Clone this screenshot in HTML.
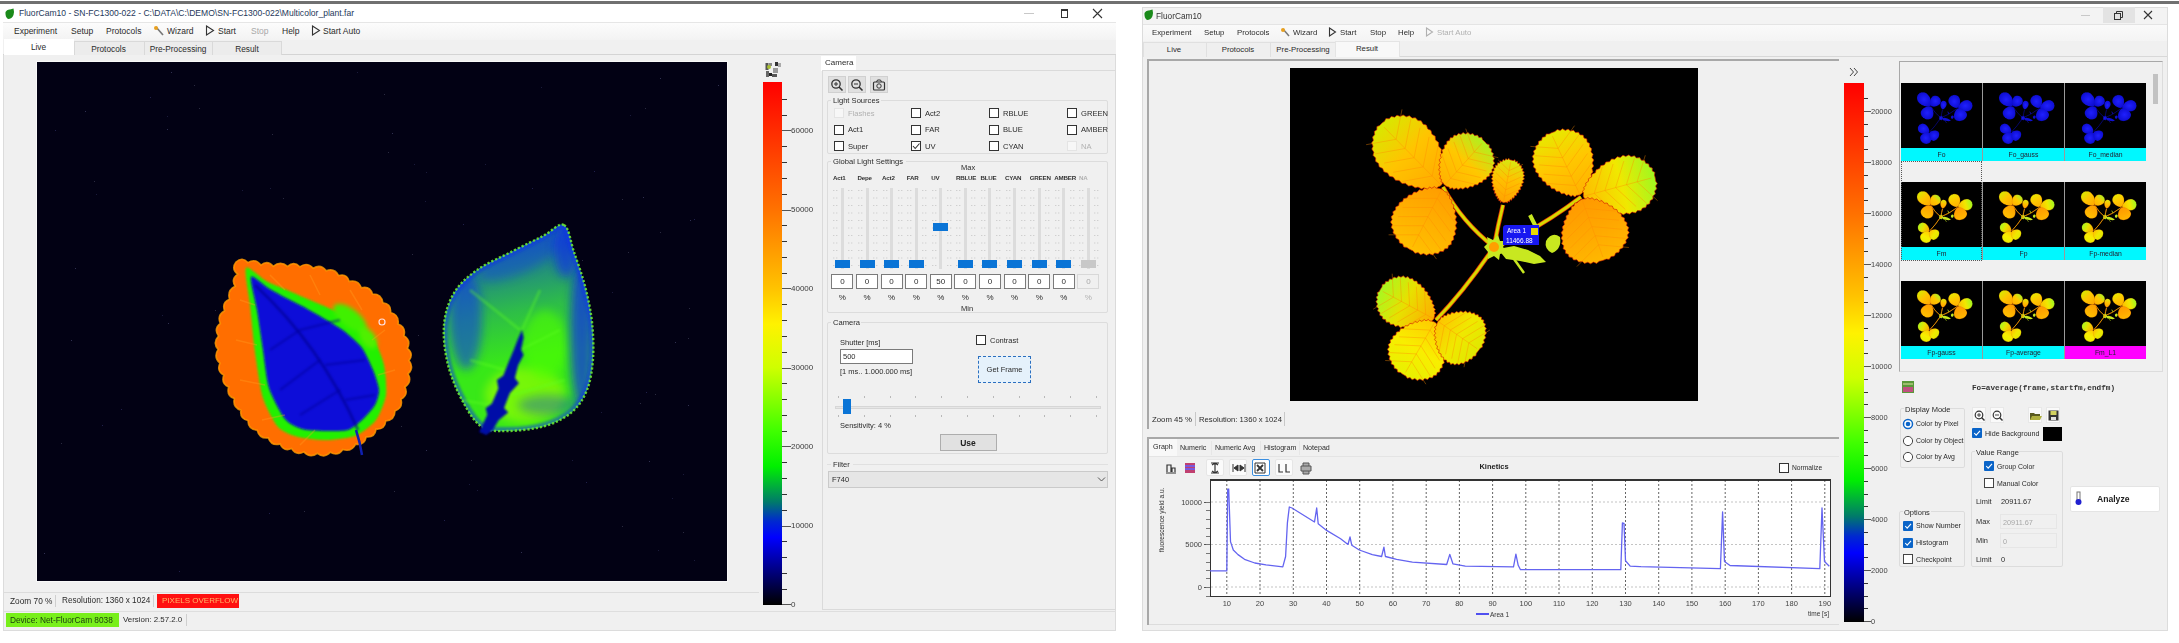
<!DOCTYPE html><html><head><meta charset="utf-8"><style>
html,body{margin:0;padding:0;}
body{width:2179px;height:643px;position:relative;overflow:hidden;background:#fff;font-family:"Liberation Sans",sans-serif;}
body div{position:absolute;box-sizing:border-box;}
.t{white-space:pre;}
svg{position:absolute;}
</style></head><body>
<div id="wrap" style="left:0;top:0;width:2179px;height:643px;filter:blur(0.4px)">
<div style="left:0px;top:1px;width:2179px;height:3px;background:#707070"></div>
<div style="left:0px;top:4px;width:1117px;height:627px;background:#fff"></div>
<div style="left:3px;top:22px;width:1113px;height:609px;background:#f0f0f0;border:1px solid #dcdcdc"></div>
<svg style="left:4px;top:8px" width="11" height="12" viewBox="0 0 11 12"><path d="M1.5 4 Q3 1 6 1.5 L9.5 0.5 Q10.5 4 9.5 7 Q8 11 4 11 Q1 9 1.5 4Z" fill="#1a8a1a"/></svg>
<div class="t" style="left:19px;top:9.3px;font-size:8.55px;line-height:8.55px;color:#25385a;">FluorCam10 - SN-FC1300-022 - C:\DATA\C:\DEMO\SN-FC1300-022\Multicolor_plant.far</div>
<div style="left:1024px;top:13px;width:10px;height:1px;background:#c8c8c8"></div>
<svg style="left:1059px;top:8px" width="10" height="11"><rect x="2.5" y="1.5" width="6" height="8" fill="none" stroke="#333"/><rect x="2.5" y="1" width="6" height="2" fill="#333"/></svg>
<svg style="left:1092px;top:8px" width="11" height="11"><path d="M1 1 L10 10 M10 1 L1 10" stroke="#333" stroke-width="1.1"/></svg>
<div style="left:3px;top:22px;width:1113px;height:18px;background:linear-gradient(#fcfcfc,#f3f3f3);border-top:1px solid #e6e6e6"></div>
<div class="t" style="left:14px;top:26.9px;font-size:8.5px;line-height:8.5px;color:#2b2b2b;">Experiment</div>
<div class="t" style="left:71px;top:26.9px;font-size:8.5px;line-height:8.5px;color:#2b2b2b;">Setup</div>
<div class="t" style="left:106px;top:26.9px;font-size:8.5px;line-height:8.5px;color:#2b2b2b;">Protocols</div>
<svg style="left:153px;top:25px" width="12" height="11"><path d="M3 2 L10 10" stroke="#777" stroke-width="1.6"/><circle cx="3" cy="3" r="2" fill="#e8a020"/></svg>
<div class="t" style="left:167px;top:26.9px;font-size:8.5px;line-height:8.5px;color:#2b2b2b;">Wizard</div>
<svg style="left:205px;top:25px" width="10" height="11"><path d="M1.5 1 L8.5 5.5 L1.5 10 Z" fill="none" stroke="#333" stroke-width="1.1"/></svg>
<div class="t" style="left:218px;top:26.9px;font-size:8.5px;line-height:8.5px;color:#2b2b2b;">Start</div>
<div class="t" style="left:251px;top:26.9px;font-size:8.5px;line-height:8.5px;color:#a8a8a8;">Stop</div>
<div class="t" style="left:282px;top:26.9px;font-size:8.5px;line-height:8.5px;color:#2b2b2b;">Help</div>
<svg style="left:311px;top:25px" width="10" height="11"><path d="M1.5 1 L8.5 5.5 L1.5 10 Z" fill="none" stroke="#333" stroke-width="1.1"/></svg>
<div class="t" style="left:323px;top:26.9px;font-size:8.5px;line-height:8.5px;color:#2b2b2b;">Start Auto</div>
<div style="left:3px;top:40px;width:1113px;height:15px;background:#f0f0f0;border-bottom:1px solid #d4d4d4"></div>
<div style="left:4px;top:39px;width:70px;height:16px;background:#fff"></div>
<div style="left:74px;top:41px;width:71px;height:14px;background:#ececec;border:1px solid #d9d9d9;border-bottom:none"></div>
<div style="left:144px;top:41px;width:69px;height:14px;background:#ececec;border:1px solid #d9d9d9;border-bottom:none"></div>
<div style="left:212px;top:41px;width:70px;height:14px;background:#ececec;border:1px solid #d9d9d9;border-bottom:none"></div>
<div class="t" style="left:-61.5px;width:200px;text-align:center;top:43.0px;font-size:8.3px;line-height:8.3px;color:#2b2b2b;">Live</div>
<div class="t" style="left:8.5px;width:200px;text-align:center;top:44.5px;font-size:8.3px;line-height:8.3px;color:#2b2b2b;">Protocols</div>
<div class="t" style="left:78px;width:200px;text-align:center;top:44.5px;font-size:8.3px;line-height:8.3px;color:#2b2b2b;">Pre-Processing</div>
<div class="t" style="left:147px;width:200px;text-align:center;top:44.5px;font-size:8.3px;line-height:8.3px;color:#2b2b2b;">Result</div>
<div style="left:37px;top:62px;width:690px;height:519px;background:#020114;outline:1px solid #f8f8f8"></div>
<svg style="left:37px;top:62px" width="690" height="519"><rect x="246" y="136" width="1" height="1" fill="#2a2a40"/><rect x="621" y="488" width="1" height="1" fill="#1a1a3a"/><rect x="623" y="16" width="1" height="1" fill="#303050"/><rect x="268" y="242" width="1" height="1" fill="#20204a"/><rect x="484" y="490" width="1" height="1" fill="#303050"/><rect x="657" y="157" width="1" height="1" fill="#20204a"/><rect x="653" y="158" width="1" height="1" fill="#303050"/><rect x="18" y="68" width="1" height="1" fill="#20204a"/><rect x="608" y="46" width="1" height="1" fill="#2a2a40"/><rect x="34" y="278" width="1" height="1" fill="#303050"/><rect x="612" y="399" width="1" height="1" fill="#303050"/><rect x="407" y="458" width="1" height="1" fill="#20204a"/><rect x="377" y="102" width="1" height="1" fill="#1a1a3a"/><rect x="142" y="509" width="1" height="1" fill="#20204a"/><rect x="267" y="449" width="1" height="1" fill="#2a2a40"/><rect x="434" y="398" width="1" height="1" fill="#2a2a40"/><rect x="549" y="420" width="1" height="1" fill="#20204a"/><rect x="347" y="32" width="1" height="1" fill="#2a2a40"/><rect x="623" y="170" width="1" height="1" fill="#2a2a40"/><rect x="557" y="109" width="1" height="1" fill="#20204a"/><rect x="651" y="276" width="1" height="1" fill="#2a2a40"/><rect x="130" y="67" width="1" height="1" fill="#303050"/><rect x="657" y="498" width="1" height="1" fill="#1a1a3a"/><rect x="355" y="71" width="1" height="1" fill="#303050"/><rect x="157" y="23" width="1" height="1" fill="#2a2a40"/><rect x="440" y="428" width="1" height="1" fill="#1a1a3a"/><rect x="48" y="49" width="1" height="1" fill="#303050"/><rect x="603" y="341" width="1" height="1" fill="#2a2a40"/><rect x="520" y="244" width="1" height="1" fill="#1a1a3a"/><rect x="320" y="10" width="1" height="1" fill="#1a1a3a"/><rect x="113" y="35" width="1" height="1" fill="#20204a"/><rect x="420" y="301" width="1" height="1" fill="#2a2a40"/><rect x="162" y="46" width="1" height="1" fill="#2a2a40"/><rect x="324" y="371" width="1" height="1" fill="#20204a"/><rect x="389" y="388" width="1" height="1" fill="#303050"/><rect x="535" y="398" width="1" height="1" fill="#1a1a3a"/><rect x="638" y="280" width="1" height="1" fill="#303050"/><rect x="652" y="246" width="1" height="1" fill="#2a2a40"/><rect x="450" y="267" width="1" height="1" fill="#2a2a40"/><rect x="564" y="350" width="1" height="1" fill="#1a1a3a"/><rect x="428" y="325" width="1" height="1" fill="#1a1a3a"/><rect x="388" y="139" width="1" height="1" fill="#1a1a3a"/><rect x="651" y="343" width="1" height="1" fill="#303050"/><rect x="364" y="364" width="1" height="1" fill="#2a2a40"/><rect x="504" y="25" width="1" height="1" fill="#1a1a3a"/><rect x="24" y="381" width="1" height="1" fill="#2a2a40"/><rect x="646" y="470" width="1" height="1" fill="#2a2a40"/><rect x="609" y="330" width="1" height="1" fill="#20204a"/><rect x="375" y="192" width="1" height="1" fill="#2a2a40"/><rect x="381" y="273" width="1" height="1" fill="#2a2a40"/><rect x="389" y="110" width="1" height="1" fill="#1a1a3a"/><rect x="585" y="137" width="1" height="1" fill="#2a2a40"/><rect x="515" y="230" width="1" height="1" fill="#2a2a40"/><rect x="247" y="338" width="1" height="1" fill="#20204a"/><rect x="448" y="102" width="1" height="1" fill="#1a1a3a"/><rect x="618" y="332" width="1" height="1" fill="#2a2a40"/><rect x="232" y="451" width="1" height="1" fill="#20204a"/><rect x="84" y="347" width="1" height="1" fill="#20204a"/><rect x="585" y="464" width="1" height="1" fill="#2a2a40"/><rect x="233" y="126" width="1" height="1" fill="#1a1a3a"/><rect x="545" y="198" width="1" height="1" fill="#2a2a40"/><rect x="591" y="190" width="1" height="1" fill="#2a2a40"/><rect x="351" y="90" width="1" height="1" fill="#2a2a40"/><rect x="606" y="135" width="1" height="1" fill="#303050"/><rect x="301" y="280" width="1" height="1" fill="#303050"/><rect x="357" y="429" width="1" height="1" fill="#2a2a40"/><rect x="432" y="422" width="1" height="1" fill="#1a1a3a"/><rect x="426" y="162" width="1" height="1" fill="#20204a"/><rect x="7" y="491" width="1" height="1" fill="#303050"/><rect x="575" y="230" width="1" height="1" fill="#1a1a3a"/><rect x="470" y="298" width="1" height="1" fill="#2a2a40"/><rect x="235" y="72" width="1" height="1" fill="#2a2a40"/><rect x="125" y="253" width="1" height="1" fill="#1a1a3a"/><rect x="38" y="206" width="1" height="1" fill="#303050"/><rect x="593" y="53" width="1" height="1" fill="#1a1a3a"/><rect x="495" y="126" width="1" height="1" fill="#20204a"/><rect x="518" y="310" width="1" height="1" fill="#20204a"/><rect x="681" y="23" width="1" height="1" fill="#303050"/><rect x="57" y="119" width="1" height="1" fill="#2a2a40"/><rect x="131" y="261" width="1" height="1" fill="#303050"/><rect x="65" y="363" width="1" height="1" fill="#20204a"/><rect x="205" y="128" width="1" height="1" fill="#1a1a3a"/><rect x="178" y="248" width="1" height="1" fill="#2a2a40"/><rect x="134" y="10" width="1" height="1" fill="#303050"/><rect x="646" y="412" width="1" height="1" fill="#1a1a3a"/><rect x="280" y="257" width="1" height="1" fill="#2a2a40"/><rect x="635" y="436" width="1" height="1" fill="#1a1a3a"/><rect x="487" y="333" width="1" height="1" fill="#1a1a3a"/><rect x="59" y="132" width="1" height="1" fill="#1a1a3a"/><rect x="130" y="54" width="1" height="1" fill="#1a1a3a"/></svg>
<svg style="left:0;top:0" width="1117" height="631" viewBox="0 0 1117 631"><defs>
<filter id="bl1" filterUnits="userSpaceOnUse" x="0" y="0" width="1117" height="631"><feGaussianBlur stdDeviation="1"/></filter>
<filter id="bl2" filterUnits="userSpaceOnUse" x="0" y="0" width="1117" height="631"><feGaussianBlur stdDeviation="2"/></filter>
<filter id="bl4" filterUnits="userSpaceOnUse" x="0" y="0" width="1117" height="631"><feGaussianBlur stdDeviation="5"/></filter>
<linearGradient id="rblue" gradientUnits="userSpaceOnUse" x1="500" y1="240" x2="530" y2="400"><stop offset="0" stop-color="#0a28f0" stop-opacity="0.7"/><stop offset="0.45" stop-color="#0a28f0" stop-opacity="0.22"/><stop offset="0.75" stop-color="#0a28f0" stop-opacity="0"/></linearGradient>
<clipPath id="rclip"><path id="rleafp" d="M564.0,225.0 C569.2,227.7 570.5,241.8 574.0,252.0 C577.5,262.2 582.0,274.3 585.0,286.0 C588.0,297.7 590.7,309.8 592.0,322.0 C593.3,334.2 593.8,347.7 593.0,359.0 C592.2,370.3 590.5,381.2 587.0,390.0 C583.5,398.8 579.0,406.0 572.0,412.0 C565.0,418.0 555.7,422.8 545.0,426.0 C534.3,429.2 518.5,430.8 508.0,431.0 C497.5,431.2 489.5,431.8 482.0,427.0 C474.5,422.2 468.7,412.3 463.0,402.0 C457.3,391.7 451.2,377.8 448.0,365.0 C444.8,352.2 443.0,337.0 444.0,325.0 C445.0,313.0 448.5,302.2 454.0,293.0 C459.5,283.8 467.2,277.0 477.0,270.0 C486.8,263.0 502.0,256.7 513.0,251.0 C524.0,245.3 534.5,240.3 543.0,236.0 C551.5,231.7 558.8,222.3 564.0,225.0 Z"/></clipPath>
</defs><path d="M236.0,262.0 Q242.3,256.3 247.9,262.6 Q255.5,257.9 260.9,265.1 Q267.6,259.7 273.2,266.3 Q280.5,260.4 287.6,266.4 Q293.9,260.6 299.8,266.8 Q307.1,261.5 313.2,268.2 Q320.9,263.6 326.2,270.8 Q334.6,267.6 338.6,275.6 Q346.8,273.2 349.2,281.4 Q358.2,279.3 361.4,287.8 Q369.9,285.6 372.5,294.0 Q381.6,293.8 382.9,302.8 Q391.5,303.9 390.6,312.6 Q399.4,315.0 398.1,324.0 Q406.4,327.3 403.9,335.8 Q411.4,340.4 407.4,348.3 Q414.1,353.7 409.0,360.6 Q414.5,367.6 408.1,373.8 Q412.4,381.8 405.0,387.0 Q408.7,395.0 401.0,399.3 Q403.3,407.9 395.0,411.0 Q394.8,420.1 385.8,421.0 Q384.8,429.7 376.1,429.1 Q374.9,437.8 366.2,437.0 Q364.3,445.6 355.7,444.1 Q351.5,452.3 342.8,449.5 Q337.9,456.7 330.3,452.3 Q324.4,458.8 317.4,453.3 Q310.0,458.6 303.9,451.9 Q296.2,456.0 291.6,448.6 Q283.7,451.9 280.1,444.0 Q271.4,446.3 268.3,437.9 Q259.4,439.0 257.2,430.2 Q248.3,429.5 247.9,420.5 Q239.5,418.7 240.9,410.2 Q232.4,407.4 234.3,398.6 Q226.1,395.5 228.7,387.1 Q220.7,383.4 223.8,375.1 Q216.2,370.9 220.0,363.1 Q213.1,357.1 218.1,349.5 Q212.3,342.7 218.5,336.1 Q213.4,328.9 220.3,323.5 Q216.7,315.2 224.6,310.7 Q221.5,302.6 229.5,299.2 Q226.9,290.3 235.2,286.3 Q230.6,279.1 237.7,274.2 Q230.9,268.9 236.0,262.0 Z" fill="#ff6e00"/><path d="M236.0,262.0 Q242.3,256.3 247.9,262.6 Q255.5,257.9 260.9,265.1 Q267.6,259.7 273.2,266.3 Q280.5,260.4 287.6,266.4 Q293.9,260.6 299.8,266.8 Q307.1,261.5 313.2,268.2 Q320.9,263.6 326.2,270.8 Q334.6,267.6 338.6,275.6 Q346.8,273.2 349.2,281.4 Q358.2,279.3 361.4,287.8 Q369.9,285.6 372.5,294.0 Q381.6,293.8 382.9,302.8 Q391.5,303.9 390.6,312.6 Q399.4,315.0 398.1,324.0 Q406.4,327.3 403.9,335.8 Q411.4,340.4 407.4,348.3 Q414.1,353.7 409.0,360.6 Q414.5,367.6 408.1,373.8 Q412.4,381.8 405.0,387.0 Q408.7,395.0 401.0,399.3 Q403.3,407.9 395.0,411.0 Q394.8,420.1 385.8,421.0 Q384.8,429.7 376.1,429.1 Q374.9,437.8 366.2,437.0 Q364.3,445.6 355.7,444.1 Q351.5,452.3 342.8,449.5 Q337.9,456.7 330.3,452.3 Q324.4,458.8 317.4,453.3 Q310.0,458.6 303.9,451.9 Q296.2,456.0 291.6,448.6 Q283.7,451.9 280.1,444.0 Q271.4,446.3 268.3,437.9 Q259.4,439.0 257.2,430.2 Q248.3,429.5 247.9,420.5 Q239.5,418.7 240.9,410.2 Q232.4,407.4 234.3,398.6 Q226.1,395.5 228.7,387.1 Q220.7,383.4 223.8,375.1 Q216.2,370.9 220.0,363.1 Q213.1,357.1 218.1,349.5 Q212.3,342.7 218.5,336.1 Q213.4,328.9 220.3,323.5 Q216.7,315.2 224.6,310.7 Q221.5,302.6 229.5,299.2 Q226.9,290.3 235.2,286.3 Q230.6,279.1 237.7,274.2 Q230.9,268.9 236.0,262.0 Z" fill="none" stroke="#ff9a00" stroke-width="1.6" opacity="0.8"/><path d="M246.0,268.0 C247.9,265.2 261.2,278.4 266.0,281.0 C270.8,283.6 281.9,287.8 287.0,290.0 C292.1,292.2 304.6,297.7 310.0,300.0 C315.4,302.3 327.8,307.4 333.0,310.0 C338.2,312.6 350.2,318.5 355.0,322.0 C359.8,325.5 370.6,335.0 374.0,340.0 C377.4,345.0 382.6,358.6 384.0,365.0 C385.4,371.4 386.9,388.6 386.0,395.0 C385.1,401.4 379.6,415.2 376.0,420.0 C372.4,424.8 360.8,433.7 355.0,436.0 C349.2,438.3 332.6,439.9 326.0,440.0 C319.4,440.1 303.6,438.5 298.0,437.0 C292.4,435.5 282.1,431.6 278.0,427.0 C273.9,422.4 265.7,406.8 263.0,398.0 C260.3,389.2 256.5,362.9 255.0,352.0 C253.5,341.1 251.1,314.8 250.0,305.0 C248.9,295.2 244.1,270.8 246.0,268.0 Z" fill="#20f000" filter="url(#bl1)"/><ellipse cx="350" cy="318" rx="20" ry="9" fill="#40f000" transform="rotate(38 350 318)" filter="url(#bl2)"/><ellipse cx="368" cy="338" rx="12" ry="7" fill="#50f000" transform="rotate(55 368 338)" filter="url(#bl2)"/><path d="M251.0,277.0 C252.3,274.4 263.9,285.6 268.0,288.0 C272.1,290.4 282.0,295.9 286.0,298.0 C290.0,300.1 298.3,304.0 302.0,306.0 C305.7,308.0 313.1,312.1 318.0,315.0 C322.9,317.9 338.9,327.1 344.0,331.0 C349.1,334.9 358.6,343.4 362.0,348.0 C365.4,352.6 371.0,365.1 373.0,370.0 C375.0,374.9 378.8,385.9 379.0,390.0 C379.2,394.1 377.0,401.5 375.0,405.0 C373.0,408.5 365.1,417.1 362.0,420.0 C358.9,422.9 352.3,428.7 348.0,430.0 C343.7,431.3 330.4,431.1 325.0,431.0 C319.6,430.9 306.7,430.4 302.0,429.0 C297.3,427.6 288.9,423.8 285.0,419.0 C281.1,414.2 271.6,396.1 269.0,388.0 C266.4,379.9 264.4,359.1 263.0,350.0 C261.6,340.9 258.4,318.5 257.0,310.0 C255.6,301.5 249.7,279.6 251.0,277.0 Z" fill="#0808d8" filter="url(#bl1)"/><path d="M255 285 Q320 345 358 430" fill="none" stroke="#000090" stroke-width="3" opacity="0.6" filter="url(#bl1)"/><path d="M300 330 L270 350 M320 360 L280 390 M340 390 L300 415 M300 330 L340 320 M325 365 L365 360 M345 400 L375 395" fill="none" stroke="#000098" stroke-width="2.5" opacity="0.45" filter="url(#bl1)"/><path d="M356 430 Q360 442 362 455" fill="none" stroke="#1020b0" stroke-width="2.5"/><path d="M240 300 L255 305 M236 340 L257 345 M240 380 L265 385 M262 420 L285 415 M300 445 L315 430 M270 275 L285 290 M310 275 L320 295 M350 290 L362 310 M385 330 L372 340 M395 370 L378 375" fill="none" stroke="#ffa020" stroke-width="1.5" opacity="0.35"/><circle cx="382" cy="322" r="3" fill="none" stroke="#ffe0e0" stroke-width="1.2"/><path d="M564.0,225.0 C569.2,227.7 570.5,241.8 574.0,252.0 C577.5,262.2 582.0,274.3 585.0,286.0 C588.0,297.7 590.7,309.8 592.0,322.0 C593.3,334.2 593.8,347.7 593.0,359.0 C592.2,370.3 590.5,381.2 587.0,390.0 C583.5,398.8 579.0,406.0 572.0,412.0 C565.0,418.0 555.7,422.8 545.0,426.0 C534.3,429.2 518.5,430.8 508.0,431.0 C497.5,431.2 489.5,431.8 482.0,427.0 C474.5,422.2 468.7,412.3 463.0,402.0 C457.3,391.7 451.2,377.8 448.0,365.0 C444.8,352.2 443.0,337.0 444.0,325.0 C445.0,313.0 448.5,302.2 454.0,293.0 C459.5,283.8 467.2,277.0 477.0,270.0 C486.8,263.0 502.0,256.7 513.0,251.0 C524.0,245.3 534.5,240.3 543.0,236.0 C551.5,231.7 558.8,222.3 564.0,225.0 Z" fill="#38e818"/><g clip-path="url(#rclip)"><path d="M564.0,225.0 C569.2,227.7 570.5,241.8 574.0,252.0 C577.5,262.2 582.0,274.3 585.0,286.0 C588.0,297.7 590.7,309.8 592.0,322.0 C593.3,334.2 593.8,347.7 593.0,359.0 C592.2,370.3 590.5,381.2 587.0,390.0 C583.5,398.8 579.0,406.0 572.0,412.0 C565.0,418.0 555.7,422.8 545.0,426.0 C534.3,429.2 518.5,430.8 508.0,431.0 C497.5,431.2 489.5,431.8 482.0,427.0 C474.5,422.2 468.7,412.3 463.0,402.0 C457.3,391.7 451.2,377.8 448.0,365.0 C444.8,352.2 443.0,337.0 444.0,325.0 C445.0,313.0 448.5,302.2 454.0,293.0 C459.5,283.8 467.2,277.0 477.0,270.0 C486.8,263.0 502.0,256.7 513.0,251.0 C524.0,245.3 534.5,240.3 543.0,236.0 C551.5,231.7 558.8,222.3 564.0,225.0 Z" fill="url(#rblue)"/><ellipse cx="525" cy="395" rx="40" ry="28" fill="#a0ff00" opacity="0.6" filter="url(#bl4)"/><ellipse cx="545" cy="345" rx="22" ry="35" fill="#50ff00" opacity="0.6" filter="url(#bl4)"/><ellipse cx="466" cy="320" rx="16" ry="50" fill="#0a30f0" opacity="0.55" filter="url(#bl4)"/><ellipse cx="520" cy="258" rx="45" ry="15" fill="#0a30f0" opacity="0.35" filter="url(#bl4)" transform="rotate(-25 520 258)"/><ellipse cx="582" cy="335" rx="12" ry="75" fill="#0a28f0" opacity="0.7" filter="url(#bl4)"/><ellipse cx="566" cy="250" rx="12" ry="28" fill="#0a28f0" opacity="0.6" filter="url(#bl4)"/><ellipse cx="548" cy="405" rx="30" ry="10" fill="#0a30e0" opacity="0.35" filter="url(#bl4)"/><path d="M564.0,225.0 C569.2,227.7 570.5,241.8 574.0,252.0 C577.5,262.2 582.0,274.3 585.0,286.0 C588.0,297.7 590.7,309.8 592.0,322.0 C593.3,334.2 593.8,347.7 593.0,359.0 C592.2,370.3 590.5,381.2 587.0,390.0 C583.5,398.8 579.0,406.0 572.0,412.0 C565.0,418.0 555.7,422.8 545.0,426.0 C534.3,429.2 518.5,430.8 508.0,431.0 C497.5,431.2 489.5,431.8 482.0,427.0 C474.5,422.2 468.7,412.3 463.0,402.0 C457.3,391.7 451.2,377.8 448.0,365.0 C444.8,352.2 443.0,337.0 444.0,325.0 C445.0,313.0 448.5,302.2 454.0,293.0 C459.5,283.8 467.2,277.0 477.0,270.0 C486.8,263.0 502.0,256.7 513.0,251.0 C524.0,245.3 534.5,240.3 543.0,236.0 C551.5,231.7 558.8,222.3 564.0,225.0 Z" fill="none" stroke="#0a30e8" stroke-width="8" opacity="0.5" filter="url(#bl1)"/><path d="M470 290 L520 330 M470 360 L505 370 M540 290 L522 330 M560 330 L520 350 M565 380 L512 395 M460 400 L492 405" fill="none" stroke="#60ff20" stroke-width="3" opacity="0.35" filter="url(#bl1)"/></g><path d="M564.0,225.0 C569.2,227.7 570.5,241.8 574.0,252.0 C577.5,262.2 582.0,274.3 585.0,286.0 C588.0,297.7 590.7,309.8 592.0,322.0 C593.3,334.2 593.8,347.7 593.0,359.0 C592.2,370.3 590.5,381.2 587.0,390.0 C583.5,398.8 579.0,406.0 572.0,412.0 C565.0,418.0 555.7,422.8 545.0,426.0 C534.3,429.2 518.5,430.8 508.0,431.0 C497.5,431.2 489.5,431.8 482.0,427.0 C474.5,422.2 468.7,412.3 463.0,402.0 C457.3,391.7 451.2,377.8 448.0,365.0 C444.8,352.2 443.0,337.0 444.0,325.0 C445.0,313.0 448.5,302.2 454.0,293.0 C459.5,283.8 467.2,277.0 477.0,270.0 C486.8,263.0 502.0,256.7 513.0,251.0 C524.0,245.3 534.5,240.3 543.0,236.0 C551.5,231.7 558.8,222.3 564.0,225.0 Z" fill="none" stroke="#70f030" stroke-width="2.4" stroke-dasharray="2.2 2" opacity="0.85"/><path d="M479.1 432.0 L487.3 414.8 L485.6 408.2 L491.9 403.6 L498.4 388.5 L496.9 380.0 L503.3 375.4 L508.9 361.3 L513.6 350.2 L518.3 338.1 L522.0 330.0 L523.6 337.5 L521.1 349.4 L523.6 354.9 L518.2 365.1 L514.9 378.0 L518.9 383.3 L509.9 393.0 L504.1 408.0 L508.2 412.4 L498.6 420.2 L492.6 430.5 L486.3 435.1 Z" fill="#0610a8" filter="url(#bl1)"/></svg>
<div style="left:3px;top:592px;width:756px;height:1px;background:#dcdcdc"></div>
<div class="t" style="left:10px;top:597.0px;font-size:8.3px;line-height:8.3px;color:#2b2b2b;">Zoom 70 %</div>
<div style="left:55px;top:595px;width:1px;height:12px;background:#cfcfcf"></div>
<div class="t" style="left:62px;top:597.0px;font-size:8.2px;line-height:8.2px;color:#2b2b2b;">Resolution: 1360 x 1024</div>
<div style="left:153px;top:595px;width:1px;height:12px;background:#cfcfcf"></div>
<div style="left:157px;top:594px;width:82px;height:14px;background:#ff1010"></div>
<div class="t" style="left:162px;top:597.1px;font-size:8px;line-height:8px;color:#ffb868;">PIXELS OVERFLOW</div>
<div style="left:3px;top:611px;width:1113px;height:1px;background:#dedede"></div>
<div style="left:6px;top:613px;width:113px;height:14px;background:#78ef1a"></div>
<div class="t" style="left:10px;top:616.0px;font-size:8.3px;line-height:8.3px;color:#1a3a10;">Device: Net-FluorCam 8038</div>
<div class="t" style="left:123px;top:616.1px;font-size:7.9px;line-height:7.9px;color:#2b2b2b;">Version: 2.57.2.0</div>
<div style="left:186px;top:614px;width:1px;height:12px;background:#cfcfcf"></div>
<div style="left:763px;top:82px;width:19px;height:523px;background:linear-gradient(180deg,#ff0000 -0.1%,#ff7200 24.4%,#ffc300 39.5%,#fff200 46.3%,#cfff00 54.6%,#40ff00 66.7%,#00f000 73.5%,#007a6a 80.3%,#0028d0 84.0%,#0000ff 87.1%,#000078 93.9%,#000000 99.9%)"></div>
<div style="left:782px;top:604px;width:9px;height:1px;background:#555"></div>
<div class="t" style="left:791px;top:601.1px;font-size:8px;line-height:8px;color:#3a3a3a;">0</div>
<div style="left:782px;top:589px;width:5px;height:1px;background:#333"></div>
<div style="left:782px;top:573px;width:5px;height:1px;background:#333"></div>
<div style="left:782px;top:557px;width:5px;height:1px;background:#333"></div>
<div style="left:782px;top:541px;width:5px;height:1px;background:#333"></div>
<div style="left:782px;top:526px;width:9px;height:1px;background:#555"></div>
<div class="t" style="left:791px;top:522.1px;font-size:8px;line-height:8px;color:#3a3a3a;">10000</div>
<div style="left:782px;top:510px;width:5px;height:1px;background:#333"></div>
<div style="left:782px;top:494px;width:5px;height:1px;background:#333"></div>
<div style="left:782px;top:478px;width:5px;height:1px;background:#333"></div>
<div style="left:782px;top:462px;width:5px;height:1px;background:#333"></div>
<div style="left:782px;top:446px;width:9px;height:1px;background:#555"></div>
<div class="t" style="left:791px;top:443.1px;font-size:8px;line-height:8px;color:#3a3a3a;">20000</div>
<div style="left:782px;top:431px;width:5px;height:1px;background:#333"></div>
<div style="left:782px;top:415px;width:5px;height:1px;background:#333"></div>
<div style="left:782px;top:399px;width:5px;height:1px;background:#333"></div>
<div style="left:782px;top:383px;width:5px;height:1px;background:#333"></div>
<div style="left:782px;top:368px;width:9px;height:1px;background:#555"></div>
<div class="t" style="left:791px;top:364.1px;font-size:8px;line-height:8px;color:#3a3a3a;">30000</div>
<div style="left:782px;top:352px;width:5px;height:1px;background:#333"></div>
<div style="left:782px;top:336px;width:5px;height:1px;background:#333"></div>
<div style="left:782px;top:320px;width:5px;height:1px;background:#333"></div>
<div style="left:782px;top:304px;width:5px;height:1px;background:#333"></div>
<div style="left:782px;top:288px;width:9px;height:1px;background:#555"></div>
<div class="t" style="left:791px;top:285.1px;font-size:8px;line-height:8px;color:#3a3a3a;">40000</div>
<div style="left:782px;top:273px;width:5px;height:1px;background:#333"></div>
<div style="left:782px;top:257px;width:5px;height:1px;background:#333"></div>
<div style="left:782px;top:241px;width:5px;height:1px;background:#333"></div>
<div style="left:782px;top:225px;width:5px;height:1px;background:#333"></div>
<div style="left:782px;top:210px;width:9px;height:1px;background:#555"></div>
<div class="t" style="left:791px;top:206.1px;font-size:8px;line-height:8px;color:#3a3a3a;">50000</div>
<div style="left:782px;top:194px;width:5px;height:1px;background:#333"></div>
<div style="left:782px;top:178px;width:5px;height:1px;background:#333"></div>
<div style="left:782px;top:162px;width:5px;height:1px;background:#333"></div>
<div style="left:782px;top:146px;width:5px;height:1px;background:#333"></div>
<div style="left:782px;top:130px;width:9px;height:1px;background:#555"></div>
<div class="t" style="left:791px;top:127.1px;font-size:8px;line-height:8px;color:#3a3a3a;">60000</div>
<div style="left:782px;top:115px;width:5px;height:1px;background:#333"></div>
<div style="left:782px;top:99px;width:5px;height:1px;background:#333"></div>
<svg style="left:765px;top:61px" width="17" height="17"><rect x="0.5" y="2" width="3" height="7" fill="#555"/><rect x="4" y="2" width="3" height="3" fill="#888"/><rect x="10" y="1" width="3" height="4" fill="#333"/><rect x="13" y="2" width="3" height="4" fill="#aaa"/><circle cx="4" cy="6" r="2" fill="#a8c030"/><rect x="8" y="7" width="5" height="5" fill="#999"/><rect x="1" y="10" width="3" height="6" fill="#666"/><rect x="4" y="12" width="3" height="3" fill="#222"/><rect x="7" y="13" width="5" height="3" fill="#555"/></svg>
<div style="left:821px;top:56px;width:35px;height:15px;background:#fff"></div>
<div class="t" style="left:825px;top:59.1px;font-size:8px;line-height:8px;color:#2b2b2b;">Camera</div>
<div style="left:822px;top:70px;width:294px;height:540px;border:1px solid #dadada;background:#f0f0f0"></div>
<div style="left:828px;top:76px;width:18px;height:17px;background:#e0e0e0;border:1px solid #d0d0d0"></div>
<div style="left:848px;top:76px;width:18px;height:17px;background:#e0e0e0;border:1px solid #d0d0d0"></div>
<div style="left:870px;top:76px;width:18px;height:17px;background:#e0e0e0;border:1px solid #d0d0d0"></div>
<svg style="left:830px;top:78px" width="14" height="14"><circle cx="6" cy="6" r="4.2" fill="none" stroke="#333" stroke-width="1.3"/><path d="M9 9 L12.5 12.5" stroke="#333" stroke-width="1.6"/><path d="M4 6 H8 M6 4 V8" stroke="#333" stroke-width="1"/></svg>
<svg style="left:850px;top:78px" width="14" height="14"><circle cx="6" cy="6" r="4.2" fill="none" stroke="#333" stroke-width="1.3"/><path d="M9 9 L12.5 12.5" stroke="#333" stroke-width="1.6"/><path d="M4 6 H8" stroke="#333" stroke-width="1"/></svg>
<svg style="left:872px;top:78px" width="14" height="14"><rect x="1.5" y="4" width="11" height="8" rx="1" fill="none" stroke="#333" stroke-width="1.2"/><circle cx="7" cy="8" r="2.2" fill="none" stroke="#333"/><path d="M4.5 4 L5.5 2 H8.5 L9.5 4" fill="none" stroke="#333"/></svg>
<div style="left:827px;top:100px;width:281px;height:54px;border:1px solid #dcdcdc;border-radius:2px"></div>
<div style="left:831px;top:95px;width:50px;height:10px;background:#f0f0f0"></div>
<div class="t" style="left:833px;top:96.8px;font-size:7.6px;line-height:7.6px;color:#2b2b2b;">Light Sources</div>
<div style="left:834px;top:108px;width:10px;height:10px;background:#f7f7f7;border:1px solid #e4e4e4"></div>
<div class="t" style="left:848px;top:109.8px;font-size:7.6px;line-height:7.6px;color:#b0b0b0;">Flashes</div>
<div style="left:834px;top:124.5px;width:10px;height:10px;background:#fff;border:1px solid #333"></div>
<div class="t" style="left:848px;top:126.3px;font-size:7.6px;line-height:7.6px;color:#2b2b2b;">Act1</div>
<div style="left:834px;top:141px;width:10px;height:10px;background:#fff;border:1px solid #333"></div>
<div class="t" style="left:848px;top:142.8px;font-size:7.6px;line-height:7.6px;color:#2b2b2b;">Super</div>
<div style="left:911px;top:108px;width:10px;height:10px;background:#fff;border:1px solid #333"></div>
<div class="t" style="left:925px;top:109.8px;font-size:7.6px;line-height:7.6px;color:#2b2b2b;">Act2</div>
<div style="left:911px;top:124.5px;width:10px;height:10px;background:#fff;border:1px solid #333"></div>
<div class="t" style="left:925px;top:126.3px;font-size:7.6px;line-height:7.6px;color:#2b2b2b;">FAR</div>
<div style="left:911px;top:141px;width:10px;height:10px;background:#fff;border:1px solid #333"></div>
<svg style="left:911px;top:141px" width="10" height="10"><path d="M2 5 L4.2 7.5 L8.5 2.5" fill="none" stroke="#333" stroke-width="1.1"/></svg>
<div class="t" style="left:925px;top:142.8px;font-size:7.6px;line-height:7.6px;color:#2b2b2b;">UV</div>
<div style="left:989px;top:108px;width:10px;height:10px;background:#fff;border:1px solid #333"></div>
<div class="t" style="left:1003px;top:109.8px;font-size:7.6px;line-height:7.6px;color:#2b2b2b;">RBLUE</div>
<div style="left:989px;top:124.5px;width:10px;height:10px;background:#fff;border:1px solid #333"></div>
<div class="t" style="left:1003px;top:126.3px;font-size:7.6px;line-height:7.6px;color:#2b2b2b;">BLUE</div>
<div style="left:989px;top:141px;width:10px;height:10px;background:#fff;border:1px solid #333"></div>
<div class="t" style="left:1003px;top:142.8px;font-size:7.6px;line-height:7.6px;color:#2b2b2b;">CYAN</div>
<div style="left:1067px;top:108px;width:10px;height:10px;background:#fff;border:1px solid #333"></div>
<div class="t" style="left:1081px;top:109.8px;font-size:7.6px;line-height:7.6px;color:#2b2b2b;">GREEN</div>
<div style="left:1067px;top:124.5px;width:10px;height:10px;background:#fff;border:1px solid #333"></div>
<div class="t" style="left:1081px;top:126.3px;font-size:7.6px;line-height:7.6px;color:#2b2b2b;">AMBER</div>
<div style="left:1067px;top:141px;width:10px;height:10px;background:#f7f7f7;border:1px solid #e4e4e4"></div>
<div class="t" style="left:1081px;top:142.8px;font-size:7.6px;line-height:7.6px;color:#b0b0b0;">NA</div>
<div style="left:827px;top:161px;width:281px;height:152px;border:1px solid #dcdcdc;border-radius:2px"></div>
<div style="left:831px;top:156px;width:75px;height:10px;background:#f0f0f0"></div>
<div class="t" style="left:833px;top:157.8px;font-size:7.6px;line-height:7.6px;color:#2b2b2b;">Global Light Settings</div>
<div class="t" style="left:961px;top:164.3px;font-size:7.5px;line-height:7.5px;color:#2b2b2b;">Max</div>
<div class="t" style="left:832.9px;top:174.5px;font-size:6.2px;line-height:6.2px;color:#333;font-weight:bold;letter-spacing:-0.2px">Act1</div>
<svg style="left:830.4px;top:188px" width="24" height="82"><rect x="3" y="2.0" width="1.4" height="1" fill="#cfcfcf"/><rect x="6" y="2.0" width="1.4" height="1" fill="#cfcfcf"/><rect x="18" y="2.0" width="1.4" height="1" fill="#cfcfcf"/><rect x="21" y="2.0" width="1.4" height="1" fill="#cfcfcf"/><rect x="3" y="9.5" width="1.4" height="1" fill="#cfcfcf"/><rect x="6" y="9.5" width="1.4" height="1" fill="#cfcfcf"/><rect x="18" y="9.5" width="1.4" height="1" fill="#cfcfcf"/><rect x="21" y="9.5" width="1.4" height="1" fill="#cfcfcf"/><rect x="3" y="17.0" width="1.4" height="1" fill="#cfcfcf"/><rect x="6" y="17.0" width="1.4" height="1" fill="#cfcfcf"/><rect x="18" y="17.0" width="1.4" height="1" fill="#cfcfcf"/><rect x="21" y="17.0" width="1.4" height="1" fill="#cfcfcf"/><rect x="3" y="24.5" width="1.4" height="1" fill="#cfcfcf"/><rect x="6" y="24.5" width="1.4" height="1" fill="#cfcfcf"/><rect x="18" y="24.5" width="1.4" height="1" fill="#cfcfcf"/><rect x="21" y="24.5" width="1.4" height="1" fill="#cfcfcf"/><rect x="3" y="32.0" width="1.4" height="1" fill="#cfcfcf"/><rect x="6" y="32.0" width="1.4" height="1" fill="#cfcfcf"/><rect x="18" y="32.0" width="1.4" height="1" fill="#cfcfcf"/><rect x="21" y="32.0" width="1.4" height="1" fill="#cfcfcf"/><rect x="3" y="39.5" width="1.4" height="1" fill="#cfcfcf"/><rect x="6" y="39.5" width="1.4" height="1" fill="#cfcfcf"/><rect x="18" y="39.5" width="1.4" height="1" fill="#cfcfcf"/><rect x="21" y="39.5" width="1.4" height="1" fill="#cfcfcf"/><rect x="3" y="47.0" width="1.4" height="1" fill="#cfcfcf"/><rect x="6" y="47.0" width="1.4" height="1" fill="#cfcfcf"/><rect x="18" y="47.0" width="1.4" height="1" fill="#cfcfcf"/><rect x="21" y="47.0" width="1.4" height="1" fill="#cfcfcf"/><rect x="3" y="54.5" width="1.4" height="1" fill="#cfcfcf"/><rect x="6" y="54.5" width="1.4" height="1" fill="#cfcfcf"/><rect x="18" y="54.5" width="1.4" height="1" fill="#cfcfcf"/><rect x="21" y="54.5" width="1.4" height="1" fill="#cfcfcf"/><rect x="3" y="62.0" width="1.4" height="1" fill="#cfcfcf"/><rect x="6" y="62.0" width="1.4" height="1" fill="#cfcfcf"/><rect x="18" y="62.0" width="1.4" height="1" fill="#cfcfcf"/><rect x="21" y="62.0" width="1.4" height="1" fill="#cfcfcf"/><rect x="3" y="69.5" width="1.4" height="1" fill="#cfcfcf"/><rect x="6" y="69.5" width="1.4" height="1" fill="#cfcfcf"/><rect x="18" y="69.5" width="1.4" height="1" fill="#cfcfcf"/><rect x="21" y="69.5" width="1.4" height="1" fill="#cfcfcf"/><rect x="3" y="77.0" width="1.4" height="1" fill="#cfcfcf"/><rect x="6" y="77.0" width="1.4" height="1" fill="#cfcfcf"/><rect x="18" y="77.0" width="1.4" height="1" fill="#cfcfcf"/><rect x="21" y="77.0" width="1.4" height="1" fill="#cfcfcf"/></svg>
<div style="left:841px;top:188px;width:3px;height:81px;background:#dcdcdc"></div>
<div style="left:835px;top:260px;width:15px;height:8px;background:#0a74d6"></div>
<div style="left:831px;top:274px;width:22px;height:15px;background:#fff;border:1px solid #7a7a7a"></div>
<div class="t" style="left:742.4px;width:200px;text-align:center;top:278.1px;font-size:8px;line-height:8px;color:#2b2b2b;">0</div>
<div class="t" style="left:742.4px;width:200px;text-align:center;top:294.1px;font-size:8px;line-height:8px;color:#2b2b2b;">%</div>
<div class="t" style="left:857.5px;top:174.5px;font-size:6.2px;line-height:6.2px;color:#333;font-weight:bold;letter-spacing:-0.2px">Depe</div>
<svg style="left:855.0px;top:188px" width="24" height="82"><rect x="3" y="2.0" width="1.4" height="1" fill="#cfcfcf"/><rect x="6" y="2.0" width="1.4" height="1" fill="#cfcfcf"/><rect x="18" y="2.0" width="1.4" height="1" fill="#cfcfcf"/><rect x="21" y="2.0" width="1.4" height="1" fill="#cfcfcf"/><rect x="3" y="9.5" width="1.4" height="1" fill="#cfcfcf"/><rect x="6" y="9.5" width="1.4" height="1" fill="#cfcfcf"/><rect x="18" y="9.5" width="1.4" height="1" fill="#cfcfcf"/><rect x="21" y="9.5" width="1.4" height="1" fill="#cfcfcf"/><rect x="3" y="17.0" width="1.4" height="1" fill="#cfcfcf"/><rect x="6" y="17.0" width="1.4" height="1" fill="#cfcfcf"/><rect x="18" y="17.0" width="1.4" height="1" fill="#cfcfcf"/><rect x="21" y="17.0" width="1.4" height="1" fill="#cfcfcf"/><rect x="3" y="24.5" width="1.4" height="1" fill="#cfcfcf"/><rect x="6" y="24.5" width="1.4" height="1" fill="#cfcfcf"/><rect x="18" y="24.5" width="1.4" height="1" fill="#cfcfcf"/><rect x="21" y="24.5" width="1.4" height="1" fill="#cfcfcf"/><rect x="3" y="32.0" width="1.4" height="1" fill="#cfcfcf"/><rect x="6" y="32.0" width="1.4" height="1" fill="#cfcfcf"/><rect x="18" y="32.0" width="1.4" height="1" fill="#cfcfcf"/><rect x="21" y="32.0" width="1.4" height="1" fill="#cfcfcf"/><rect x="3" y="39.5" width="1.4" height="1" fill="#cfcfcf"/><rect x="6" y="39.5" width="1.4" height="1" fill="#cfcfcf"/><rect x="18" y="39.5" width="1.4" height="1" fill="#cfcfcf"/><rect x="21" y="39.5" width="1.4" height="1" fill="#cfcfcf"/><rect x="3" y="47.0" width="1.4" height="1" fill="#cfcfcf"/><rect x="6" y="47.0" width="1.4" height="1" fill="#cfcfcf"/><rect x="18" y="47.0" width="1.4" height="1" fill="#cfcfcf"/><rect x="21" y="47.0" width="1.4" height="1" fill="#cfcfcf"/><rect x="3" y="54.5" width="1.4" height="1" fill="#cfcfcf"/><rect x="6" y="54.5" width="1.4" height="1" fill="#cfcfcf"/><rect x="18" y="54.5" width="1.4" height="1" fill="#cfcfcf"/><rect x="21" y="54.5" width="1.4" height="1" fill="#cfcfcf"/><rect x="3" y="62.0" width="1.4" height="1" fill="#cfcfcf"/><rect x="6" y="62.0" width="1.4" height="1" fill="#cfcfcf"/><rect x="18" y="62.0" width="1.4" height="1" fill="#cfcfcf"/><rect x="21" y="62.0" width="1.4" height="1" fill="#cfcfcf"/><rect x="3" y="69.5" width="1.4" height="1" fill="#cfcfcf"/><rect x="6" y="69.5" width="1.4" height="1" fill="#cfcfcf"/><rect x="18" y="69.5" width="1.4" height="1" fill="#cfcfcf"/><rect x="21" y="69.5" width="1.4" height="1" fill="#cfcfcf"/><rect x="3" y="77.0" width="1.4" height="1" fill="#cfcfcf"/><rect x="6" y="77.0" width="1.4" height="1" fill="#cfcfcf"/><rect x="18" y="77.0" width="1.4" height="1" fill="#cfcfcf"/><rect x="21" y="77.0" width="1.4" height="1" fill="#cfcfcf"/></svg>
<div style="left:866px;top:188px;width:3px;height:81px;background:#dcdcdc"></div>
<div style="left:860px;top:260px;width:15px;height:8px;background:#0a74d6"></div>
<div style="left:856px;top:274px;width:22px;height:15px;background:#fff;border:1px solid #7a7a7a"></div>
<div class="t" style="left:767.0px;width:200px;text-align:center;top:278.1px;font-size:8px;line-height:8px;color:#2b2b2b;">0</div>
<div class="t" style="left:767.0px;width:200px;text-align:center;top:294.1px;font-size:8px;line-height:8px;color:#2b2b2b;">%</div>
<div class="t" style="left:882.1px;top:174.5px;font-size:6.2px;line-height:6.2px;color:#333;font-weight:bold;letter-spacing:-0.2px">Act2</div>
<svg style="left:879.6px;top:188px" width="24" height="82"><rect x="3" y="2.0" width="1.4" height="1" fill="#cfcfcf"/><rect x="6" y="2.0" width="1.4" height="1" fill="#cfcfcf"/><rect x="18" y="2.0" width="1.4" height="1" fill="#cfcfcf"/><rect x="21" y="2.0" width="1.4" height="1" fill="#cfcfcf"/><rect x="3" y="9.5" width="1.4" height="1" fill="#cfcfcf"/><rect x="6" y="9.5" width="1.4" height="1" fill="#cfcfcf"/><rect x="18" y="9.5" width="1.4" height="1" fill="#cfcfcf"/><rect x="21" y="9.5" width="1.4" height="1" fill="#cfcfcf"/><rect x="3" y="17.0" width="1.4" height="1" fill="#cfcfcf"/><rect x="6" y="17.0" width="1.4" height="1" fill="#cfcfcf"/><rect x="18" y="17.0" width="1.4" height="1" fill="#cfcfcf"/><rect x="21" y="17.0" width="1.4" height="1" fill="#cfcfcf"/><rect x="3" y="24.5" width="1.4" height="1" fill="#cfcfcf"/><rect x="6" y="24.5" width="1.4" height="1" fill="#cfcfcf"/><rect x="18" y="24.5" width="1.4" height="1" fill="#cfcfcf"/><rect x="21" y="24.5" width="1.4" height="1" fill="#cfcfcf"/><rect x="3" y="32.0" width="1.4" height="1" fill="#cfcfcf"/><rect x="6" y="32.0" width="1.4" height="1" fill="#cfcfcf"/><rect x="18" y="32.0" width="1.4" height="1" fill="#cfcfcf"/><rect x="21" y="32.0" width="1.4" height="1" fill="#cfcfcf"/><rect x="3" y="39.5" width="1.4" height="1" fill="#cfcfcf"/><rect x="6" y="39.5" width="1.4" height="1" fill="#cfcfcf"/><rect x="18" y="39.5" width="1.4" height="1" fill="#cfcfcf"/><rect x="21" y="39.5" width="1.4" height="1" fill="#cfcfcf"/><rect x="3" y="47.0" width="1.4" height="1" fill="#cfcfcf"/><rect x="6" y="47.0" width="1.4" height="1" fill="#cfcfcf"/><rect x="18" y="47.0" width="1.4" height="1" fill="#cfcfcf"/><rect x="21" y="47.0" width="1.4" height="1" fill="#cfcfcf"/><rect x="3" y="54.5" width="1.4" height="1" fill="#cfcfcf"/><rect x="6" y="54.5" width="1.4" height="1" fill="#cfcfcf"/><rect x="18" y="54.5" width="1.4" height="1" fill="#cfcfcf"/><rect x="21" y="54.5" width="1.4" height="1" fill="#cfcfcf"/><rect x="3" y="62.0" width="1.4" height="1" fill="#cfcfcf"/><rect x="6" y="62.0" width="1.4" height="1" fill="#cfcfcf"/><rect x="18" y="62.0" width="1.4" height="1" fill="#cfcfcf"/><rect x="21" y="62.0" width="1.4" height="1" fill="#cfcfcf"/><rect x="3" y="69.5" width="1.4" height="1" fill="#cfcfcf"/><rect x="6" y="69.5" width="1.4" height="1" fill="#cfcfcf"/><rect x="18" y="69.5" width="1.4" height="1" fill="#cfcfcf"/><rect x="21" y="69.5" width="1.4" height="1" fill="#cfcfcf"/><rect x="3" y="77.0" width="1.4" height="1" fill="#cfcfcf"/><rect x="6" y="77.0" width="1.4" height="1" fill="#cfcfcf"/><rect x="18" y="77.0" width="1.4" height="1" fill="#cfcfcf"/><rect x="21" y="77.0" width="1.4" height="1" fill="#cfcfcf"/></svg>
<div style="left:890px;top:188px;width:3px;height:81px;background:#dcdcdc"></div>
<div style="left:884px;top:260px;width:15px;height:8px;background:#0a74d6"></div>
<div style="left:881px;top:274px;width:22px;height:15px;background:#fff;border:1px solid #7a7a7a"></div>
<div class="t" style="left:791.6px;width:200px;text-align:center;top:278.1px;font-size:8px;line-height:8px;color:#2b2b2b;">0</div>
<div class="t" style="left:791.6px;width:200px;text-align:center;top:294.1px;font-size:8px;line-height:8px;color:#2b2b2b;">%</div>
<div class="t" style="left:906.7px;top:174.5px;font-size:6.2px;line-height:6.2px;color:#333;font-weight:bold;letter-spacing:-0.2px">FAR</div>
<svg style="left:904.2px;top:188px" width="24" height="82"><rect x="3" y="2.0" width="1.4" height="1" fill="#cfcfcf"/><rect x="6" y="2.0" width="1.4" height="1" fill="#cfcfcf"/><rect x="18" y="2.0" width="1.4" height="1" fill="#cfcfcf"/><rect x="21" y="2.0" width="1.4" height="1" fill="#cfcfcf"/><rect x="3" y="9.5" width="1.4" height="1" fill="#cfcfcf"/><rect x="6" y="9.5" width="1.4" height="1" fill="#cfcfcf"/><rect x="18" y="9.5" width="1.4" height="1" fill="#cfcfcf"/><rect x="21" y="9.5" width="1.4" height="1" fill="#cfcfcf"/><rect x="3" y="17.0" width="1.4" height="1" fill="#cfcfcf"/><rect x="6" y="17.0" width="1.4" height="1" fill="#cfcfcf"/><rect x="18" y="17.0" width="1.4" height="1" fill="#cfcfcf"/><rect x="21" y="17.0" width="1.4" height="1" fill="#cfcfcf"/><rect x="3" y="24.5" width="1.4" height="1" fill="#cfcfcf"/><rect x="6" y="24.5" width="1.4" height="1" fill="#cfcfcf"/><rect x="18" y="24.5" width="1.4" height="1" fill="#cfcfcf"/><rect x="21" y="24.5" width="1.4" height="1" fill="#cfcfcf"/><rect x="3" y="32.0" width="1.4" height="1" fill="#cfcfcf"/><rect x="6" y="32.0" width="1.4" height="1" fill="#cfcfcf"/><rect x="18" y="32.0" width="1.4" height="1" fill="#cfcfcf"/><rect x="21" y="32.0" width="1.4" height="1" fill="#cfcfcf"/><rect x="3" y="39.5" width="1.4" height="1" fill="#cfcfcf"/><rect x="6" y="39.5" width="1.4" height="1" fill="#cfcfcf"/><rect x="18" y="39.5" width="1.4" height="1" fill="#cfcfcf"/><rect x="21" y="39.5" width="1.4" height="1" fill="#cfcfcf"/><rect x="3" y="47.0" width="1.4" height="1" fill="#cfcfcf"/><rect x="6" y="47.0" width="1.4" height="1" fill="#cfcfcf"/><rect x="18" y="47.0" width="1.4" height="1" fill="#cfcfcf"/><rect x="21" y="47.0" width="1.4" height="1" fill="#cfcfcf"/><rect x="3" y="54.5" width="1.4" height="1" fill="#cfcfcf"/><rect x="6" y="54.5" width="1.4" height="1" fill="#cfcfcf"/><rect x="18" y="54.5" width="1.4" height="1" fill="#cfcfcf"/><rect x="21" y="54.5" width="1.4" height="1" fill="#cfcfcf"/><rect x="3" y="62.0" width="1.4" height="1" fill="#cfcfcf"/><rect x="6" y="62.0" width="1.4" height="1" fill="#cfcfcf"/><rect x="18" y="62.0" width="1.4" height="1" fill="#cfcfcf"/><rect x="21" y="62.0" width="1.4" height="1" fill="#cfcfcf"/><rect x="3" y="69.5" width="1.4" height="1" fill="#cfcfcf"/><rect x="6" y="69.5" width="1.4" height="1" fill="#cfcfcf"/><rect x="18" y="69.5" width="1.4" height="1" fill="#cfcfcf"/><rect x="21" y="69.5" width="1.4" height="1" fill="#cfcfcf"/><rect x="3" y="77.0" width="1.4" height="1" fill="#cfcfcf"/><rect x="6" y="77.0" width="1.4" height="1" fill="#cfcfcf"/><rect x="18" y="77.0" width="1.4" height="1" fill="#cfcfcf"/><rect x="21" y="77.0" width="1.4" height="1" fill="#cfcfcf"/></svg>
<div style="left:915px;top:188px;width:3px;height:81px;background:#dcdcdc"></div>
<div style="left:909px;top:260px;width:15px;height:8px;background:#0a74d6"></div>
<div style="left:905px;top:274px;width:22px;height:15px;background:#fff;border:1px solid #7a7a7a"></div>
<div class="t" style="left:816.2px;width:200px;text-align:center;top:278.1px;font-size:8px;line-height:8px;color:#2b2b2b;">0</div>
<div class="t" style="left:816.2px;width:200px;text-align:center;top:294.1px;font-size:8px;line-height:8px;color:#2b2b2b;">%</div>
<div class="t" style="left:931.3px;top:174.5px;font-size:6.2px;line-height:6.2px;color:#333;font-weight:bold;letter-spacing:-0.2px">UV</div>
<svg style="left:928.8px;top:188px" width="24" height="82"><rect x="3" y="2.0" width="1.4" height="1" fill="#cfcfcf"/><rect x="6" y="2.0" width="1.4" height="1" fill="#cfcfcf"/><rect x="18" y="2.0" width="1.4" height="1" fill="#cfcfcf"/><rect x="21" y="2.0" width="1.4" height="1" fill="#cfcfcf"/><rect x="3" y="9.5" width="1.4" height="1" fill="#cfcfcf"/><rect x="6" y="9.5" width="1.4" height="1" fill="#cfcfcf"/><rect x="18" y="9.5" width="1.4" height="1" fill="#cfcfcf"/><rect x="21" y="9.5" width="1.4" height="1" fill="#cfcfcf"/><rect x="3" y="17.0" width="1.4" height="1" fill="#cfcfcf"/><rect x="6" y="17.0" width="1.4" height="1" fill="#cfcfcf"/><rect x="18" y="17.0" width="1.4" height="1" fill="#cfcfcf"/><rect x="21" y="17.0" width="1.4" height="1" fill="#cfcfcf"/><rect x="3" y="24.5" width="1.4" height="1" fill="#cfcfcf"/><rect x="6" y="24.5" width="1.4" height="1" fill="#cfcfcf"/><rect x="18" y="24.5" width="1.4" height="1" fill="#cfcfcf"/><rect x="21" y="24.5" width="1.4" height="1" fill="#cfcfcf"/><rect x="3" y="32.0" width="1.4" height="1" fill="#cfcfcf"/><rect x="6" y="32.0" width="1.4" height="1" fill="#cfcfcf"/><rect x="18" y="32.0" width="1.4" height="1" fill="#cfcfcf"/><rect x="21" y="32.0" width="1.4" height="1" fill="#cfcfcf"/><rect x="3" y="39.5" width="1.4" height="1" fill="#cfcfcf"/><rect x="6" y="39.5" width="1.4" height="1" fill="#cfcfcf"/><rect x="18" y="39.5" width="1.4" height="1" fill="#cfcfcf"/><rect x="21" y="39.5" width="1.4" height="1" fill="#cfcfcf"/><rect x="3" y="47.0" width="1.4" height="1" fill="#cfcfcf"/><rect x="6" y="47.0" width="1.4" height="1" fill="#cfcfcf"/><rect x="18" y="47.0" width="1.4" height="1" fill="#cfcfcf"/><rect x="21" y="47.0" width="1.4" height="1" fill="#cfcfcf"/><rect x="3" y="54.5" width="1.4" height="1" fill="#cfcfcf"/><rect x="6" y="54.5" width="1.4" height="1" fill="#cfcfcf"/><rect x="18" y="54.5" width="1.4" height="1" fill="#cfcfcf"/><rect x="21" y="54.5" width="1.4" height="1" fill="#cfcfcf"/><rect x="3" y="62.0" width="1.4" height="1" fill="#cfcfcf"/><rect x="6" y="62.0" width="1.4" height="1" fill="#cfcfcf"/><rect x="18" y="62.0" width="1.4" height="1" fill="#cfcfcf"/><rect x="21" y="62.0" width="1.4" height="1" fill="#cfcfcf"/><rect x="3" y="69.5" width="1.4" height="1" fill="#cfcfcf"/><rect x="6" y="69.5" width="1.4" height="1" fill="#cfcfcf"/><rect x="18" y="69.5" width="1.4" height="1" fill="#cfcfcf"/><rect x="21" y="69.5" width="1.4" height="1" fill="#cfcfcf"/><rect x="3" y="77.0" width="1.4" height="1" fill="#cfcfcf"/><rect x="6" y="77.0" width="1.4" height="1" fill="#cfcfcf"/><rect x="18" y="77.0" width="1.4" height="1" fill="#cfcfcf"/><rect x="21" y="77.0" width="1.4" height="1" fill="#cfcfcf"/></svg>
<div style="left:939px;top:188px;width:3px;height:81px;background:#dcdcdc"></div>
<div style="left:933px;top:223px;width:15px;height:8px;background:#0a74d6"></div>
<div style="left:930px;top:274px;width:22px;height:15px;background:#fff;border:1px solid #7a7a7a"></div>
<div class="t" style="left:840.8px;width:200px;text-align:center;top:278.1px;font-size:8px;line-height:8px;color:#2b2b2b;">50</div>
<div class="t" style="left:840.8px;width:200px;text-align:center;top:294.1px;font-size:8px;line-height:8px;color:#2b2b2b;">%</div>
<div class="t" style="left:955.9px;top:174.5px;font-size:6.2px;line-height:6.2px;color:#333;font-weight:bold;letter-spacing:-0.2px">RBLUE</div>
<svg style="left:953.4px;top:188px" width="24" height="82"><rect x="3" y="2.0" width="1.4" height="1" fill="#cfcfcf"/><rect x="6" y="2.0" width="1.4" height="1" fill="#cfcfcf"/><rect x="18" y="2.0" width="1.4" height="1" fill="#cfcfcf"/><rect x="21" y="2.0" width="1.4" height="1" fill="#cfcfcf"/><rect x="3" y="9.5" width="1.4" height="1" fill="#cfcfcf"/><rect x="6" y="9.5" width="1.4" height="1" fill="#cfcfcf"/><rect x="18" y="9.5" width="1.4" height="1" fill="#cfcfcf"/><rect x="21" y="9.5" width="1.4" height="1" fill="#cfcfcf"/><rect x="3" y="17.0" width="1.4" height="1" fill="#cfcfcf"/><rect x="6" y="17.0" width="1.4" height="1" fill="#cfcfcf"/><rect x="18" y="17.0" width="1.4" height="1" fill="#cfcfcf"/><rect x="21" y="17.0" width="1.4" height="1" fill="#cfcfcf"/><rect x="3" y="24.5" width="1.4" height="1" fill="#cfcfcf"/><rect x="6" y="24.5" width="1.4" height="1" fill="#cfcfcf"/><rect x="18" y="24.5" width="1.4" height="1" fill="#cfcfcf"/><rect x="21" y="24.5" width="1.4" height="1" fill="#cfcfcf"/><rect x="3" y="32.0" width="1.4" height="1" fill="#cfcfcf"/><rect x="6" y="32.0" width="1.4" height="1" fill="#cfcfcf"/><rect x="18" y="32.0" width="1.4" height="1" fill="#cfcfcf"/><rect x="21" y="32.0" width="1.4" height="1" fill="#cfcfcf"/><rect x="3" y="39.5" width="1.4" height="1" fill="#cfcfcf"/><rect x="6" y="39.5" width="1.4" height="1" fill="#cfcfcf"/><rect x="18" y="39.5" width="1.4" height="1" fill="#cfcfcf"/><rect x="21" y="39.5" width="1.4" height="1" fill="#cfcfcf"/><rect x="3" y="47.0" width="1.4" height="1" fill="#cfcfcf"/><rect x="6" y="47.0" width="1.4" height="1" fill="#cfcfcf"/><rect x="18" y="47.0" width="1.4" height="1" fill="#cfcfcf"/><rect x="21" y="47.0" width="1.4" height="1" fill="#cfcfcf"/><rect x="3" y="54.5" width="1.4" height="1" fill="#cfcfcf"/><rect x="6" y="54.5" width="1.4" height="1" fill="#cfcfcf"/><rect x="18" y="54.5" width="1.4" height="1" fill="#cfcfcf"/><rect x="21" y="54.5" width="1.4" height="1" fill="#cfcfcf"/><rect x="3" y="62.0" width="1.4" height="1" fill="#cfcfcf"/><rect x="6" y="62.0" width="1.4" height="1" fill="#cfcfcf"/><rect x="18" y="62.0" width="1.4" height="1" fill="#cfcfcf"/><rect x="21" y="62.0" width="1.4" height="1" fill="#cfcfcf"/><rect x="3" y="69.5" width="1.4" height="1" fill="#cfcfcf"/><rect x="6" y="69.5" width="1.4" height="1" fill="#cfcfcf"/><rect x="18" y="69.5" width="1.4" height="1" fill="#cfcfcf"/><rect x="21" y="69.5" width="1.4" height="1" fill="#cfcfcf"/><rect x="3" y="77.0" width="1.4" height="1" fill="#cfcfcf"/><rect x="6" y="77.0" width="1.4" height="1" fill="#cfcfcf"/><rect x="18" y="77.0" width="1.4" height="1" fill="#cfcfcf"/><rect x="21" y="77.0" width="1.4" height="1" fill="#cfcfcf"/></svg>
<div style="left:964px;top:188px;width:3px;height:81px;background:#dcdcdc"></div>
<div style="left:958px;top:260px;width:15px;height:8px;background:#0a74d6"></div>
<div style="left:954px;top:274px;width:22px;height:15px;background:#fff;border:1px solid #7a7a7a"></div>
<div class="t" style="left:865.4px;width:200px;text-align:center;top:278.1px;font-size:8px;line-height:8px;color:#2b2b2b;">0</div>
<div class="t" style="left:865.4px;width:200px;text-align:center;top:294.1px;font-size:8px;line-height:8px;color:#2b2b2b;">%</div>
<div class="t" style="left:980.5px;top:174.5px;font-size:6.2px;line-height:6.2px;color:#333;font-weight:bold;letter-spacing:-0.2px">BLUE</div>
<svg style="left:978.0px;top:188px" width="24" height="82"><rect x="3" y="2.0" width="1.4" height="1" fill="#cfcfcf"/><rect x="6" y="2.0" width="1.4" height="1" fill="#cfcfcf"/><rect x="18" y="2.0" width="1.4" height="1" fill="#cfcfcf"/><rect x="21" y="2.0" width="1.4" height="1" fill="#cfcfcf"/><rect x="3" y="9.5" width="1.4" height="1" fill="#cfcfcf"/><rect x="6" y="9.5" width="1.4" height="1" fill="#cfcfcf"/><rect x="18" y="9.5" width="1.4" height="1" fill="#cfcfcf"/><rect x="21" y="9.5" width="1.4" height="1" fill="#cfcfcf"/><rect x="3" y="17.0" width="1.4" height="1" fill="#cfcfcf"/><rect x="6" y="17.0" width="1.4" height="1" fill="#cfcfcf"/><rect x="18" y="17.0" width="1.4" height="1" fill="#cfcfcf"/><rect x="21" y="17.0" width="1.4" height="1" fill="#cfcfcf"/><rect x="3" y="24.5" width="1.4" height="1" fill="#cfcfcf"/><rect x="6" y="24.5" width="1.4" height="1" fill="#cfcfcf"/><rect x="18" y="24.5" width="1.4" height="1" fill="#cfcfcf"/><rect x="21" y="24.5" width="1.4" height="1" fill="#cfcfcf"/><rect x="3" y="32.0" width="1.4" height="1" fill="#cfcfcf"/><rect x="6" y="32.0" width="1.4" height="1" fill="#cfcfcf"/><rect x="18" y="32.0" width="1.4" height="1" fill="#cfcfcf"/><rect x="21" y="32.0" width="1.4" height="1" fill="#cfcfcf"/><rect x="3" y="39.5" width="1.4" height="1" fill="#cfcfcf"/><rect x="6" y="39.5" width="1.4" height="1" fill="#cfcfcf"/><rect x="18" y="39.5" width="1.4" height="1" fill="#cfcfcf"/><rect x="21" y="39.5" width="1.4" height="1" fill="#cfcfcf"/><rect x="3" y="47.0" width="1.4" height="1" fill="#cfcfcf"/><rect x="6" y="47.0" width="1.4" height="1" fill="#cfcfcf"/><rect x="18" y="47.0" width="1.4" height="1" fill="#cfcfcf"/><rect x="21" y="47.0" width="1.4" height="1" fill="#cfcfcf"/><rect x="3" y="54.5" width="1.4" height="1" fill="#cfcfcf"/><rect x="6" y="54.5" width="1.4" height="1" fill="#cfcfcf"/><rect x="18" y="54.5" width="1.4" height="1" fill="#cfcfcf"/><rect x="21" y="54.5" width="1.4" height="1" fill="#cfcfcf"/><rect x="3" y="62.0" width="1.4" height="1" fill="#cfcfcf"/><rect x="6" y="62.0" width="1.4" height="1" fill="#cfcfcf"/><rect x="18" y="62.0" width="1.4" height="1" fill="#cfcfcf"/><rect x="21" y="62.0" width="1.4" height="1" fill="#cfcfcf"/><rect x="3" y="69.5" width="1.4" height="1" fill="#cfcfcf"/><rect x="6" y="69.5" width="1.4" height="1" fill="#cfcfcf"/><rect x="18" y="69.5" width="1.4" height="1" fill="#cfcfcf"/><rect x="21" y="69.5" width="1.4" height="1" fill="#cfcfcf"/><rect x="3" y="77.0" width="1.4" height="1" fill="#cfcfcf"/><rect x="6" y="77.0" width="1.4" height="1" fill="#cfcfcf"/><rect x="18" y="77.0" width="1.4" height="1" fill="#cfcfcf"/><rect x="21" y="77.0" width="1.4" height="1" fill="#cfcfcf"/></svg>
<div style="left:988px;top:188px;width:3px;height:81px;background:#dcdcdc"></div>
<div style="left:982px;top:260px;width:15px;height:8px;background:#0a74d6"></div>
<div style="left:979px;top:274px;width:22px;height:15px;background:#fff;border:1px solid #7a7a7a"></div>
<div class="t" style="left:890.0px;width:200px;text-align:center;top:278.1px;font-size:8px;line-height:8px;color:#2b2b2b;">0</div>
<div class="t" style="left:890.0px;width:200px;text-align:center;top:294.1px;font-size:8px;line-height:8px;color:#2b2b2b;">%</div>
<div class="t" style="left:1005.1px;top:174.5px;font-size:6.2px;line-height:6.2px;color:#333;font-weight:bold;letter-spacing:-0.2px">CYAN</div>
<svg style="left:1002.6px;top:188px" width="24" height="82"><rect x="3" y="2.0" width="1.4" height="1" fill="#cfcfcf"/><rect x="6" y="2.0" width="1.4" height="1" fill="#cfcfcf"/><rect x="18" y="2.0" width="1.4" height="1" fill="#cfcfcf"/><rect x="21" y="2.0" width="1.4" height="1" fill="#cfcfcf"/><rect x="3" y="9.5" width="1.4" height="1" fill="#cfcfcf"/><rect x="6" y="9.5" width="1.4" height="1" fill="#cfcfcf"/><rect x="18" y="9.5" width="1.4" height="1" fill="#cfcfcf"/><rect x="21" y="9.5" width="1.4" height="1" fill="#cfcfcf"/><rect x="3" y="17.0" width="1.4" height="1" fill="#cfcfcf"/><rect x="6" y="17.0" width="1.4" height="1" fill="#cfcfcf"/><rect x="18" y="17.0" width="1.4" height="1" fill="#cfcfcf"/><rect x="21" y="17.0" width="1.4" height="1" fill="#cfcfcf"/><rect x="3" y="24.5" width="1.4" height="1" fill="#cfcfcf"/><rect x="6" y="24.5" width="1.4" height="1" fill="#cfcfcf"/><rect x="18" y="24.5" width="1.4" height="1" fill="#cfcfcf"/><rect x="21" y="24.5" width="1.4" height="1" fill="#cfcfcf"/><rect x="3" y="32.0" width="1.4" height="1" fill="#cfcfcf"/><rect x="6" y="32.0" width="1.4" height="1" fill="#cfcfcf"/><rect x="18" y="32.0" width="1.4" height="1" fill="#cfcfcf"/><rect x="21" y="32.0" width="1.4" height="1" fill="#cfcfcf"/><rect x="3" y="39.5" width="1.4" height="1" fill="#cfcfcf"/><rect x="6" y="39.5" width="1.4" height="1" fill="#cfcfcf"/><rect x="18" y="39.5" width="1.4" height="1" fill="#cfcfcf"/><rect x="21" y="39.5" width="1.4" height="1" fill="#cfcfcf"/><rect x="3" y="47.0" width="1.4" height="1" fill="#cfcfcf"/><rect x="6" y="47.0" width="1.4" height="1" fill="#cfcfcf"/><rect x="18" y="47.0" width="1.4" height="1" fill="#cfcfcf"/><rect x="21" y="47.0" width="1.4" height="1" fill="#cfcfcf"/><rect x="3" y="54.5" width="1.4" height="1" fill="#cfcfcf"/><rect x="6" y="54.5" width="1.4" height="1" fill="#cfcfcf"/><rect x="18" y="54.5" width="1.4" height="1" fill="#cfcfcf"/><rect x="21" y="54.5" width="1.4" height="1" fill="#cfcfcf"/><rect x="3" y="62.0" width="1.4" height="1" fill="#cfcfcf"/><rect x="6" y="62.0" width="1.4" height="1" fill="#cfcfcf"/><rect x="18" y="62.0" width="1.4" height="1" fill="#cfcfcf"/><rect x="21" y="62.0" width="1.4" height="1" fill="#cfcfcf"/><rect x="3" y="69.5" width="1.4" height="1" fill="#cfcfcf"/><rect x="6" y="69.5" width="1.4" height="1" fill="#cfcfcf"/><rect x="18" y="69.5" width="1.4" height="1" fill="#cfcfcf"/><rect x="21" y="69.5" width="1.4" height="1" fill="#cfcfcf"/><rect x="3" y="77.0" width="1.4" height="1" fill="#cfcfcf"/><rect x="6" y="77.0" width="1.4" height="1" fill="#cfcfcf"/><rect x="18" y="77.0" width="1.4" height="1" fill="#cfcfcf"/><rect x="21" y="77.0" width="1.4" height="1" fill="#cfcfcf"/></svg>
<div style="left:1013px;top:188px;width:3px;height:81px;background:#dcdcdc"></div>
<div style="left:1007px;top:260px;width:15px;height:8px;background:#0a74d6"></div>
<div style="left:1004px;top:274px;width:22px;height:15px;background:#fff;border:1px solid #7a7a7a"></div>
<div class="t" style="left:914.6px;width:200px;text-align:center;top:278.1px;font-size:8px;line-height:8px;color:#2b2b2b;">0</div>
<div class="t" style="left:914.6px;width:200px;text-align:center;top:294.1px;font-size:8px;line-height:8px;color:#2b2b2b;">%</div>
<div class="t" style="left:1029.7px;top:174.5px;font-size:6.2px;line-height:6.2px;color:#333;font-weight:bold;letter-spacing:-0.2px">GREEN</div>
<svg style="left:1027.2px;top:188px" width="24" height="82"><rect x="3" y="2.0" width="1.4" height="1" fill="#cfcfcf"/><rect x="6" y="2.0" width="1.4" height="1" fill="#cfcfcf"/><rect x="18" y="2.0" width="1.4" height="1" fill="#cfcfcf"/><rect x="21" y="2.0" width="1.4" height="1" fill="#cfcfcf"/><rect x="3" y="9.5" width="1.4" height="1" fill="#cfcfcf"/><rect x="6" y="9.5" width="1.4" height="1" fill="#cfcfcf"/><rect x="18" y="9.5" width="1.4" height="1" fill="#cfcfcf"/><rect x="21" y="9.5" width="1.4" height="1" fill="#cfcfcf"/><rect x="3" y="17.0" width="1.4" height="1" fill="#cfcfcf"/><rect x="6" y="17.0" width="1.4" height="1" fill="#cfcfcf"/><rect x="18" y="17.0" width="1.4" height="1" fill="#cfcfcf"/><rect x="21" y="17.0" width="1.4" height="1" fill="#cfcfcf"/><rect x="3" y="24.5" width="1.4" height="1" fill="#cfcfcf"/><rect x="6" y="24.5" width="1.4" height="1" fill="#cfcfcf"/><rect x="18" y="24.5" width="1.4" height="1" fill="#cfcfcf"/><rect x="21" y="24.5" width="1.4" height="1" fill="#cfcfcf"/><rect x="3" y="32.0" width="1.4" height="1" fill="#cfcfcf"/><rect x="6" y="32.0" width="1.4" height="1" fill="#cfcfcf"/><rect x="18" y="32.0" width="1.4" height="1" fill="#cfcfcf"/><rect x="21" y="32.0" width="1.4" height="1" fill="#cfcfcf"/><rect x="3" y="39.5" width="1.4" height="1" fill="#cfcfcf"/><rect x="6" y="39.5" width="1.4" height="1" fill="#cfcfcf"/><rect x="18" y="39.5" width="1.4" height="1" fill="#cfcfcf"/><rect x="21" y="39.5" width="1.4" height="1" fill="#cfcfcf"/><rect x="3" y="47.0" width="1.4" height="1" fill="#cfcfcf"/><rect x="6" y="47.0" width="1.4" height="1" fill="#cfcfcf"/><rect x="18" y="47.0" width="1.4" height="1" fill="#cfcfcf"/><rect x="21" y="47.0" width="1.4" height="1" fill="#cfcfcf"/><rect x="3" y="54.5" width="1.4" height="1" fill="#cfcfcf"/><rect x="6" y="54.5" width="1.4" height="1" fill="#cfcfcf"/><rect x="18" y="54.5" width="1.4" height="1" fill="#cfcfcf"/><rect x="21" y="54.5" width="1.4" height="1" fill="#cfcfcf"/><rect x="3" y="62.0" width="1.4" height="1" fill="#cfcfcf"/><rect x="6" y="62.0" width="1.4" height="1" fill="#cfcfcf"/><rect x="18" y="62.0" width="1.4" height="1" fill="#cfcfcf"/><rect x="21" y="62.0" width="1.4" height="1" fill="#cfcfcf"/><rect x="3" y="69.5" width="1.4" height="1" fill="#cfcfcf"/><rect x="6" y="69.5" width="1.4" height="1" fill="#cfcfcf"/><rect x="18" y="69.5" width="1.4" height="1" fill="#cfcfcf"/><rect x="21" y="69.5" width="1.4" height="1" fill="#cfcfcf"/><rect x="3" y="77.0" width="1.4" height="1" fill="#cfcfcf"/><rect x="6" y="77.0" width="1.4" height="1" fill="#cfcfcf"/><rect x="18" y="77.0" width="1.4" height="1" fill="#cfcfcf"/><rect x="21" y="77.0" width="1.4" height="1" fill="#cfcfcf"/></svg>
<div style="left:1038px;top:188px;width:3px;height:81px;background:#dcdcdc"></div>
<div style="left:1032px;top:260px;width:15px;height:8px;background:#0a74d6"></div>
<div style="left:1028px;top:274px;width:22px;height:15px;background:#fff;border:1px solid #7a7a7a"></div>
<div class="t" style="left:939.2px;width:200px;text-align:center;top:278.1px;font-size:8px;line-height:8px;color:#2b2b2b;">0</div>
<div class="t" style="left:939.2px;width:200px;text-align:center;top:294.1px;font-size:8px;line-height:8px;color:#2b2b2b;">%</div>
<div class="t" style="left:1054.3px;top:174.5px;font-size:6.2px;line-height:6.2px;color:#333;font-weight:bold;letter-spacing:-0.2px">AMBER</div>
<svg style="left:1051.8px;top:188px" width="24" height="82"><rect x="3" y="2.0" width="1.4" height="1" fill="#cfcfcf"/><rect x="6" y="2.0" width="1.4" height="1" fill="#cfcfcf"/><rect x="18" y="2.0" width="1.4" height="1" fill="#cfcfcf"/><rect x="21" y="2.0" width="1.4" height="1" fill="#cfcfcf"/><rect x="3" y="9.5" width="1.4" height="1" fill="#cfcfcf"/><rect x="6" y="9.5" width="1.4" height="1" fill="#cfcfcf"/><rect x="18" y="9.5" width="1.4" height="1" fill="#cfcfcf"/><rect x="21" y="9.5" width="1.4" height="1" fill="#cfcfcf"/><rect x="3" y="17.0" width="1.4" height="1" fill="#cfcfcf"/><rect x="6" y="17.0" width="1.4" height="1" fill="#cfcfcf"/><rect x="18" y="17.0" width="1.4" height="1" fill="#cfcfcf"/><rect x="21" y="17.0" width="1.4" height="1" fill="#cfcfcf"/><rect x="3" y="24.5" width="1.4" height="1" fill="#cfcfcf"/><rect x="6" y="24.5" width="1.4" height="1" fill="#cfcfcf"/><rect x="18" y="24.5" width="1.4" height="1" fill="#cfcfcf"/><rect x="21" y="24.5" width="1.4" height="1" fill="#cfcfcf"/><rect x="3" y="32.0" width="1.4" height="1" fill="#cfcfcf"/><rect x="6" y="32.0" width="1.4" height="1" fill="#cfcfcf"/><rect x="18" y="32.0" width="1.4" height="1" fill="#cfcfcf"/><rect x="21" y="32.0" width="1.4" height="1" fill="#cfcfcf"/><rect x="3" y="39.5" width="1.4" height="1" fill="#cfcfcf"/><rect x="6" y="39.5" width="1.4" height="1" fill="#cfcfcf"/><rect x="18" y="39.5" width="1.4" height="1" fill="#cfcfcf"/><rect x="21" y="39.5" width="1.4" height="1" fill="#cfcfcf"/><rect x="3" y="47.0" width="1.4" height="1" fill="#cfcfcf"/><rect x="6" y="47.0" width="1.4" height="1" fill="#cfcfcf"/><rect x="18" y="47.0" width="1.4" height="1" fill="#cfcfcf"/><rect x="21" y="47.0" width="1.4" height="1" fill="#cfcfcf"/><rect x="3" y="54.5" width="1.4" height="1" fill="#cfcfcf"/><rect x="6" y="54.5" width="1.4" height="1" fill="#cfcfcf"/><rect x="18" y="54.5" width="1.4" height="1" fill="#cfcfcf"/><rect x="21" y="54.5" width="1.4" height="1" fill="#cfcfcf"/><rect x="3" y="62.0" width="1.4" height="1" fill="#cfcfcf"/><rect x="6" y="62.0" width="1.4" height="1" fill="#cfcfcf"/><rect x="18" y="62.0" width="1.4" height="1" fill="#cfcfcf"/><rect x="21" y="62.0" width="1.4" height="1" fill="#cfcfcf"/><rect x="3" y="69.5" width="1.4" height="1" fill="#cfcfcf"/><rect x="6" y="69.5" width="1.4" height="1" fill="#cfcfcf"/><rect x="18" y="69.5" width="1.4" height="1" fill="#cfcfcf"/><rect x="21" y="69.5" width="1.4" height="1" fill="#cfcfcf"/><rect x="3" y="77.0" width="1.4" height="1" fill="#cfcfcf"/><rect x="6" y="77.0" width="1.4" height="1" fill="#cfcfcf"/><rect x="18" y="77.0" width="1.4" height="1" fill="#cfcfcf"/><rect x="21" y="77.0" width="1.4" height="1" fill="#cfcfcf"/></svg>
<div style="left:1062px;top:188px;width:3px;height:81px;background:#dcdcdc"></div>
<div style="left:1056px;top:260px;width:15px;height:8px;background:#0a74d6"></div>
<div style="left:1053px;top:274px;width:22px;height:15px;background:#fff;border:1px solid #7a7a7a"></div>
<div class="t" style="left:963.8px;width:200px;text-align:center;top:278.1px;font-size:8px;line-height:8px;color:#2b2b2b;">0</div>
<div class="t" style="left:963.8px;width:200px;text-align:center;top:294.1px;font-size:8px;line-height:8px;color:#2b2b2b;">%</div>
<div class="t" style="left:1078.9px;top:174.5px;font-size:6.2px;line-height:6.2px;color:#b0b0b0;font-weight:bold;letter-spacing:-0.2px">NA</div>
<svg style="left:1076.4px;top:188px" width="24" height="82"><rect x="3" y="2.0" width="1.4" height="1" fill="#cfcfcf"/><rect x="6" y="2.0" width="1.4" height="1" fill="#cfcfcf"/><rect x="18" y="2.0" width="1.4" height="1" fill="#cfcfcf"/><rect x="21" y="2.0" width="1.4" height="1" fill="#cfcfcf"/><rect x="3" y="9.5" width="1.4" height="1" fill="#cfcfcf"/><rect x="6" y="9.5" width="1.4" height="1" fill="#cfcfcf"/><rect x="18" y="9.5" width="1.4" height="1" fill="#cfcfcf"/><rect x="21" y="9.5" width="1.4" height="1" fill="#cfcfcf"/><rect x="3" y="17.0" width="1.4" height="1" fill="#cfcfcf"/><rect x="6" y="17.0" width="1.4" height="1" fill="#cfcfcf"/><rect x="18" y="17.0" width="1.4" height="1" fill="#cfcfcf"/><rect x="21" y="17.0" width="1.4" height="1" fill="#cfcfcf"/><rect x="3" y="24.5" width="1.4" height="1" fill="#cfcfcf"/><rect x="6" y="24.5" width="1.4" height="1" fill="#cfcfcf"/><rect x="18" y="24.5" width="1.4" height="1" fill="#cfcfcf"/><rect x="21" y="24.5" width="1.4" height="1" fill="#cfcfcf"/><rect x="3" y="32.0" width="1.4" height="1" fill="#cfcfcf"/><rect x="6" y="32.0" width="1.4" height="1" fill="#cfcfcf"/><rect x="18" y="32.0" width="1.4" height="1" fill="#cfcfcf"/><rect x="21" y="32.0" width="1.4" height="1" fill="#cfcfcf"/><rect x="3" y="39.5" width="1.4" height="1" fill="#cfcfcf"/><rect x="6" y="39.5" width="1.4" height="1" fill="#cfcfcf"/><rect x="18" y="39.5" width="1.4" height="1" fill="#cfcfcf"/><rect x="21" y="39.5" width="1.4" height="1" fill="#cfcfcf"/><rect x="3" y="47.0" width="1.4" height="1" fill="#cfcfcf"/><rect x="6" y="47.0" width="1.4" height="1" fill="#cfcfcf"/><rect x="18" y="47.0" width="1.4" height="1" fill="#cfcfcf"/><rect x="21" y="47.0" width="1.4" height="1" fill="#cfcfcf"/><rect x="3" y="54.5" width="1.4" height="1" fill="#cfcfcf"/><rect x="6" y="54.5" width="1.4" height="1" fill="#cfcfcf"/><rect x="18" y="54.5" width="1.4" height="1" fill="#cfcfcf"/><rect x="21" y="54.5" width="1.4" height="1" fill="#cfcfcf"/><rect x="3" y="62.0" width="1.4" height="1" fill="#cfcfcf"/><rect x="6" y="62.0" width="1.4" height="1" fill="#cfcfcf"/><rect x="18" y="62.0" width="1.4" height="1" fill="#cfcfcf"/><rect x="21" y="62.0" width="1.4" height="1" fill="#cfcfcf"/><rect x="3" y="69.5" width="1.4" height="1" fill="#cfcfcf"/><rect x="6" y="69.5" width="1.4" height="1" fill="#cfcfcf"/><rect x="18" y="69.5" width="1.4" height="1" fill="#cfcfcf"/><rect x="21" y="69.5" width="1.4" height="1" fill="#cfcfcf"/><rect x="3" y="77.0" width="1.4" height="1" fill="#cfcfcf"/><rect x="6" y="77.0" width="1.4" height="1" fill="#cfcfcf"/><rect x="18" y="77.0" width="1.4" height="1" fill="#cfcfcf"/><rect x="21" y="77.0" width="1.4" height="1" fill="#cfcfcf"/></svg>
<div style="left:1087px;top:188px;width:3px;height:81px;background:#dcdcdc"></div>
<div style="left:1081px;top:260px;width:15px;height:8px;background:#c8c8c8"></div>
<div style="left:1077px;top:274px;width:22px;height:15px;background:#f0f0f0;border:1px solid #d8d8d8"></div>
<div class="t" style="left:988.4000000000001px;width:200px;text-align:center;top:278.1px;font-size:8px;line-height:8px;color:#a8a8a8;">0</div>
<div class="t" style="left:988.4000000000001px;width:200px;text-align:center;top:294.1px;font-size:8px;line-height:8px;color:#b0b0b0;">%</div>
<div class="t" style="left:961px;top:305.4px;font-size:7.5px;line-height:7.5px;color:#2b2b2b;">Min</div>
<div style="left:827px;top:322px;width:281px;height:132px;border:1px solid #dcdcdc;border-radius:2px"></div>
<div style="left:831px;top:317px;width:30px;height:10px;background:#f0f0f0"></div>
<div class="t" style="left:833px;top:318.8px;font-size:7.6px;line-height:7.6px;color:#2b2b2b;">Camera</div>
<div class="t" style="left:840px;top:338.9px;font-size:7.5px;line-height:7.5px;color:#2b2b2b;">Shutter [ms]</div>
<div style="left:840px;top:349px;width:73px;height:15px;background:#fff;border:1px solid #7a7a7a"></div>
<div class="t" style="left:843px;top:353.4px;font-size:7.5px;line-height:7.5px;color:#2b2b2b;">500</div>
<div class="t" style="left:840px;top:367.9px;font-size:7.5px;line-height:7.5px;color:#2b2b2b;">[1 ms.. 1.000.000 ms]</div>
<div style="left:976px;top:335px;width:10px;height:10px;background:#fff;border:1px solid #333"></div>
<div class="t" style="left:990px;top:336.9px;font-size:7.5px;line-height:7.5px;color:#2b2b2b;">Contrast</div>
<div style="left:978px;top:356px;width:53px;height:27px;background:#e5f1fb;border:1px dashed #2a6fc0"></div>
<div class="t" style="left:904.5px;width:200px;text-align:center;top:366.4px;font-size:7.5px;line-height:7.5px;color:#2b2b2b;">Get Frame</div>
<div style="left:835px;top:406px;width:266px;height:3px;background:#e6e6e6;border:1px solid #d6d6d6"></div>
<div style="left:838px;top:396px;width:1px;height:2px;background:#b8b8b8"></div>
<div style="left:838px;top:415px;width:1px;height:2px;background:#b8b8b8"></div>
<div style="left:864px;top:396px;width:1px;height:2px;background:#b8b8b8"></div>
<div style="left:864px;top:415px;width:1px;height:2px;background:#b8b8b8"></div>
<div style="left:890px;top:396px;width:1px;height:2px;background:#b8b8b8"></div>
<div style="left:890px;top:415px;width:1px;height:2px;background:#b8b8b8"></div>
<div style="left:915px;top:396px;width:1px;height:2px;background:#b8b8b8"></div>
<div style="left:915px;top:415px;width:1px;height:2px;background:#b8b8b8"></div>
<div style="left:941px;top:396px;width:1px;height:2px;background:#b8b8b8"></div>
<div style="left:941px;top:415px;width:1px;height:2px;background:#b8b8b8"></div>
<div style="left:967px;top:396px;width:1px;height:2px;background:#b8b8b8"></div>
<div style="left:967px;top:415px;width:1px;height:2px;background:#b8b8b8"></div>
<div style="left:993px;top:396px;width:1px;height:2px;background:#b8b8b8"></div>
<div style="left:993px;top:415px;width:1px;height:2px;background:#b8b8b8"></div>
<div style="left:1019px;top:396px;width:1px;height:2px;background:#b8b8b8"></div>
<div style="left:1019px;top:415px;width:1px;height:2px;background:#b8b8b8"></div>
<div style="left:1044px;top:396px;width:1px;height:2px;background:#b8b8b8"></div>
<div style="left:1044px;top:415px;width:1px;height:2px;background:#b8b8b8"></div>
<div style="left:1070px;top:396px;width:1px;height:2px;background:#b8b8b8"></div>
<div style="left:1070px;top:415px;width:1px;height:2px;background:#b8b8b8"></div>
<div style="left:1096px;top:396px;width:1px;height:2px;background:#b8b8b8"></div>
<div style="left:1096px;top:415px;width:1px;height:2px;background:#b8b8b8"></div>
<div style="left:843px;top:399px;width:8px;height:15px;background:#0a74d6"></div>
<div class="t" style="left:840px;top:422.4px;font-size:7.5px;line-height:7.5px;color:#2b2b2b;">Sensitivity: 4 %</div>
<div style="left:940px;top:434px;width:57px;height:17px;background:#e1e1e1;border:1px solid #adadad"></div>
<div class="t" style="left:868px;width:200px;text-align:center;top:438.9px;font-size:8.5px;line-height:8.5px;color:#222;font-weight:bold">Use</div>
<div style="left:827px;top:464px;width:281px;height:1px;background:#e0e0e0"></div>
<div style="left:831px;top:459px;width:22px;height:10px;background:#f0f0f0"></div>
<div class="t" style="left:833px;top:460.8px;font-size:7.6px;line-height:7.6px;color:#2b2b2b;">Filter</div>
<div style="left:828px;top:471px;width:280px;height:17px;background:#e6e6e6;border:1px solid #cacaca"></div>
<div class="t" style="left:832px;top:476.4px;font-size:7.5px;line-height:7.5px;color:#2b2b2b;">F740</div>
<svg style="left:1097px;top:476px" width="9" height="7"><path d="M1 1.5 L4.5 5 L8 1.5" fill="none" stroke="#555" stroke-width="1"/></svg>
<div style="left:822px;top:490px;width:294px;height:1px;background:transparent"></div>
<div style="left:1142px;top:7px;width:1026px;height:624px;background:#f0f0f0;border:1px solid #dcdcdc"></div>
<div style="left:1143px;top:8px;width:1024px;height:16px;background:#f3f3f3"></div>
<svg style="left:1143px;top:9px" width="11" height="12" viewBox="0 0 11 12"><path d="M1.5 4 Q3 1 6 1.5 L9.5 0.5 Q10.5 4 9.5 7 Q8 11 4 11 Q1 9 1.5 4Z" fill="#1a8a1a"/></svg>
<div class="t" style="left:1156px;top:11.9px;font-size:8.3px;line-height:8.3px;color:#333;">FluorCam10</div>
<div style="left:2081px;top:15px;width:9px;height:1px;background:#c8c8c8"></div>
<div style="left:2103px;top:7px;width:32px;height:16px;background:#e3e3e3"></div>
<svg style="left:2113px;top:10px" width="11" height="10"><rect x="1.5" y="3.5" width="6" height="6" fill="none" stroke="#333"/><path d="M3.5 3.5 V1.5 H9.5 V7.5 H7.5" fill="none" stroke="#333"/></svg>
<svg style="left:2143px;top:10px" width="10" height="10"><path d="M1 1 L9 9 M9 1 L1 9" stroke="#333" stroke-width="1.1"/></svg>
<div style="left:1143px;top:24px;width:1024px;height:17px;background:linear-gradient(#fafafa,#f4f4f4);border-top:1px solid #e4e4e4"></div>
<div class="t" style="left:1152px;top:29.2px;font-size:7.8px;line-height:7.8px;color:#2b2b2b;">Experiment</div>
<div class="t" style="left:1204px;top:29.2px;font-size:7.8px;line-height:7.8px;color:#2b2b2b;">Setup</div>
<div class="t" style="left:1237px;top:29.2px;font-size:7.8px;line-height:7.8px;color:#2b2b2b;">Protocols</div>
<svg style="left:1280px;top:27px" width="11" height="10"><path d="M3 2 L9 9" stroke="#777" stroke-width="1.5"/><circle cx="3" cy="3" r="2" fill="#e8a020"/></svg>
<div class="t" style="left:1293px;top:29.2px;font-size:7.8px;line-height:7.8px;color:#2b2b2b;">Wizard</div>
<svg style="left:1328px;top:27px" width="9" height="10"><path d="M1.5 1 L7.5 5 L1.5 9 Z" fill="none" stroke="#333" stroke-width="1.1"/></svg>
<div class="t" style="left:1340px;top:29.2px;font-size:7.8px;line-height:7.8px;color:#2b2b2b;">Start</div>
<div class="t" style="left:1370px;top:29.2px;font-size:7.8px;line-height:7.8px;color:#2b2b2b;">Stop</div>
<div class="t" style="left:1398px;top:29.2px;font-size:7.8px;line-height:7.8px;color:#2b2b2b;">Help</div>
<svg style="left:1425px;top:27px" width="9" height="10"><path d="M1.5 1 L7.5 5 L1.5 9 Z" fill="none" stroke="#b0b0b0" stroke-width="1.1"/></svg>
<div class="t" style="left:1437px;top:29.2px;font-size:7.8px;line-height:7.8px;color:#b0b0b0;">Start Auto</div>
<div style="left:1143px;top:41px;width:1024px;height:16px;background:#f0f0f0;border-bottom:1px solid #d8d8d8"></div>
<div style="left:1143px;top:42px;width:64px;height:15px;background:#efefef;border:1px solid #e0e0e0;border-bottom:none"></div>
<div style="left:1206px;top:42px;width:65px;height:15px;background:#efefef;border:1px solid #e0e0e0;border-bottom:none"></div>
<div style="left:1270px;top:42px;width:66px;height:15px;background:#efefef;border:1px solid #e0e0e0;border-bottom:none"></div>
<div style="left:1335px;top:41px;width:65px;height:16px;background:#f8f8f8;border:1px solid #e4e4e4;border-bottom:none"></div>
<div class="t" style="left:1074px;width:200px;text-align:center;top:46.2px;font-size:7.8px;line-height:7.8px;color:#2b2b2b;">Live</div>
<div class="t" style="left:1138px;width:200px;text-align:center;top:46.2px;font-size:7.8px;line-height:7.8px;color:#2b2b2b;">Protocols</div>
<div class="t" style="left:1203px;width:200px;text-align:center;top:46.2px;font-size:7.8px;line-height:7.8px;color:#2b2b2b;">Pre-Processing</div>
<div class="t" style="left:1267px;width:200px;text-align:center;top:44.7px;font-size:7.8px;line-height:7.8px;color:#2b2b2b;">Result</div>
<div style="left:1147px;top:59px;width:692px;height:2px;background:#a8a8a8"></div>
<div style="left:1147px;top:59px;width:2px;height:370px;background:#a8a8a8"></div>
<div style="left:1290px;top:68px;width:408px;height:333px;background:#000"></div>
<svg style="left:1290px;top:68px" width="408" height="333"><defs><linearGradient id="lgm_0" gradientUnits="userSpaceOnUse" x1="153.0" y1="119.0" x2="91.0" y2="56.0"><stop offset="0" stop-color="#ffa800"/><stop offset="0.55" stop-color="#ffc400"/><stop offset="1" stop-color="#d8e800"/></linearGradient><linearGradient id="lgm_1" gradientUnits="userSpaceOnUse" x1="153.0" y1="119.0" x2="194.0" y2="73.0"><stop offset="0" stop-color="#ffb000"/><stop offset="0.55" stop-color="#ffc800"/><stop offset="1" stop-color="#b0f020"/></linearGradient><linearGradient id="lgm_2" gradientUnits="userSpaceOnUse" x1="153.0" y1="119.0" x2="121.0" y2="182.0"><stop offset="0" stop-color="#ff9c00"/><stop offset="0.55" stop-color="#ffb000"/><stop offset="1" stop-color="#ffc000"/></linearGradient><linearGradient id="lgm_3" gradientUnits="userSpaceOnUse" x1="213.0" y1="137.0" x2="221.0" y2="92.0"><stop offset="0" stop-color="#ffa000"/><stop offset="0.55" stop-color="#ffc000"/><stop offset="1" stop-color="#d8e810"/></linearGradient><linearGradient id="lgm_4" gradientUnits="userSpaceOnUse" x1="291.0" y1="129.0" x2="261.0" y2="65.0"><stop offset="0" stop-color="#ffb000"/><stop offset="0.55" stop-color="#ffc800"/><stop offset="1" stop-color="#e8e800"/></linearGradient><linearGradient id="lgm_5" gradientUnits="userSpaceOnUse" x1="291.0" y1="129.0" x2="365.0" y2="109.0"><stop offset="0" stop-color="#ffb800"/><stop offset="0.55" stop-color="#f0e800"/><stop offset="1" stop-color="#a0f820"/></linearGradient><linearGradient id="lgm_6" gradientUnits="userSpaceOnUse" x1="291.0" y1="129.0" x2="314.0" y2="192.0"><stop offset="0" stop-color="#ff9800"/><stop offset="0.55" stop-color="#ffa800"/><stop offset="1" stop-color="#ffb800"/></linearGradient><linearGradient id="lgm_7" gradientUnits="userSpaceOnUse" x1="146.0" y1="252.0" x2="90.0" y2="222.0"><stop offset="0" stop-color="#ffa800"/><stop offset="0.55" stop-color="#e8e000"/><stop offset="1" stop-color="#a8f820"/></linearGradient><linearGradient id="lgm_8" gradientUnits="userSpaceOnUse" x1="146.0" y1="252.0" x2="114.0" y2="307.0"><stop offset="0" stop-color="#ffc800"/><stop offset="0.55" stop-color="#f8ee00"/><stop offset="1" stop-color="#e8f000"/></linearGradient><linearGradient id="lgm_9" gradientUnits="userSpaceOnUse" x1="146.0" y1="252.0" x2="189.0" y2="282.0"><stop offset="0" stop-color="#ffc000"/><stop offset="0.55" stop-color="#f0e800"/><stop offset="1" stop-color="#e0e800"/></linearGradient></defs><g transform="scale(1)"><path d="M153,119 Q172,154 204,179" fill="none" stroke="#e03000" stroke-width="4.6"/><path d="M153,119 Q172,154 204,179" fill="none" stroke="#d8d800" stroke-width="3"/><path d="M213,137 Q208,157 204,179" fill="none" stroke="#e03000" stroke-width="4.6"/><path d="M213,137 Q208,157 204,179" fill="none" stroke="#d8d800" stroke-width="3"/><path d="M291,129 Q243,165 204,179" fill="none" stroke="#e03000" stroke-width="4.6"/><path d="M291,129 Q243,165 204,179" fill="none" stroke="#d8d800" stroke-width="3"/><path d="M146,252 Q175,222 204,179" fill="none" stroke="#e03000" stroke-width="4.6"/><path d="M146,252 Q175,222 204,179" fill="none" stroke="#d8d800" stroke-width="3"/><path d="M151.2,117.2 L151.8,116.4 L152.5,115.2 L153.1,113.7 L153.6,112.0 L155.3,110.9 L154.2,107.7 L155.7,106.1 L154.3,102.7 L155.6,100.6 L153.8,97.0 L154.9,94.5 L152.7,90.9 L153.5,88.0 L151.0,84.6 L151.5,81.3 L148.6,78.2 L148.7,74.6 L145.5,72.0 L145.2,68.2 L141.9,66.2 L141.0,62.4 L137.7,60.9 L136.4,57.1 L133.1,56.2 L131.2,52.8 L127.9,52.6 L125.4,49.7 L122.2,50.1 L119.3,47.7 L116.3,48.8 L113.1,46.9 L110.4,48.5 L107.0,47.2 L104.6,49.2 L101.2,48.4 L99.3,50.8 L95.9,50.6 L94.6,53.2 L92.6,54.6 L91.0,56.0 L91.0,56.0 L89.6,57.6 L86.9,58.6 L86.8,61.8 L84.3,63.4 L84.7,66.8 L82.5,68.9 L83.4,72.3 L81.6,74.9 L83.1,78.2 L81.8,81.1 L83.9,84.2 L83.0,87.3 L85.7,90.0 L85.5,93.3 L88.6,95.5 L89.1,98.8 L92.7,100.5 L93.9,103.8 L97.7,105.0 L99.4,108.3 L103.2,109.0 L105.5,112.3 L109.2,112.4 L112.0,115.5 L115.4,115.3 L118.6,118.0 L121.8,117.4 L125.2,119.8 L128.0,119.0 L131.6,121.0 L133.9,119.8 L137.4,121.5 L139.3,120.1 L142.6,121.4 L143.9,119.8 L146.9,120.7 L147.7,119.0 L149.3,118.4 L150.5,117.8 L151.2,117.2Z" fill="url(#lgm_0)" stroke="#d02000" stroke-width="0.9" stroke-opacity="0.7"/><path d="M151.2,117.2 L94.0,59.1 M142.2,108.0 L112.2,113.5 M142.2,108.0 L148.1,78.1 M133.2,98.9 L103.2,104.3 M133.2,98.9 L139.1,68.9 M124.1,89.7 L94.1,95.1 M124.1,89.7 L130.0,59.8 M115.1,80.5 L85.1,85.9 M115.1,80.5 L121.0,50.6 M106.1,71.3 L76.1,76.7 M106.1,71.3 L112.0,41.4 " fill="none" stroke="#ff8c00" stroke-width="1" stroke-opacity="0.4"/><path d="M154.7,117.1 L155.3,117.6 L156.4,118.2 L157.6,118.7 L159.1,119.1 L159.9,120.9 L162.5,119.8 L163.7,121.4 L166.4,120.1 L168.1,121.6 L170.8,119.9 L172.9,121.2 L175.4,119.3 L177.8,120.4 L180.1,118.2 L182.8,119.0 L184.7,116.6 L187.7,117.0 L189.1,114.5 L192.2,114.5 L193.2,111.9 L196.2,111.5 L196.8,108.9 L199.7,108.1 L199.7,105.5 L202.4,104.2 L201.8,101.6 L204.0,99.9 L202.9,97.3 L204.8,95.2 L203.2,92.8 L204.6,90.4 L202.6,88.2 L203.5,85.6 L201.2,83.8 L201.7,80.9 L199.2,79.6 L199.3,76.7 L196.7,75.9 L195.3,74.3 L194.0,73.0 L194.0,73.0 L192.6,71.8 L191.7,69.3 L188.9,69.6 L187.5,67.1 L184.7,67.7 L182.9,65.5 L180.2,66.5 L178.0,64.6 L175.6,66.1 L173.1,64.5 L171.0,66.4 L168.4,65.4 L166.7,67.6 L164.0,67.1 L162.8,69.7 L160.2,69.7 L159.5,72.6 L156.9,73.2 L156.7,76.3 L154.2,77.3 L154.4,80.4 L151.9,81.9 L152.5,84.9 L150.2,86.8 L151.2,89.6 L149.1,91.9 L150.4,94.4 L148.6,97.0 L150.1,99.2 L148.6,101.9 L150.2,103.7 L149.0,106.5 L150.7,107.8 L149.8,110.6 L151.6,111.4 L150.9,114.0 L152.8,114.4 L153.4,115.6 L154.1,116.5 L154.7,117.1Z" fill="url(#lgm_1)" stroke="#d02000" stroke-width="0.9" stroke-opacity="0.7"/><path d="M154.7,117.1 L192.0,75.2 M160.6,110.5 L152.1,87.2 M160.6,110.5 L184.7,116.2 M166.5,103.9 L158.0,80.5 M166.5,103.9 L190.6,109.6 M172.4,97.3 L163.9,73.9 M172.4,97.3 L196.5,103.0 M178.3,90.7 L169.8,67.3 M178.3,90.7 L202.4,96.4 M184.2,84.0 L175.7,60.7 M184.2,84.0 L208.3,89.7 " fill="none" stroke="#ff8c00" stroke-width="1" stroke-opacity="0.4"/><path d="M151.9,121.2 L150.9,120.9 L149.5,120.5 L147.9,120.3 L146.0,120.1 L144.4,118.6 L141.8,120.3 L139.8,119.0 L137.2,121.1 L134.7,120.1 L132.1,122.4 L129.3,121.7 L127.0,124.3 L123.8,124.0 L121.9,126.9 L118.6,126.9 L117.0,129.9 L113.6,130.5 L112.6,133.5 L109.3,134.5 L108.7,137.5 L105.7,138.9 L105.6,141.9 L102.8,143.7 L103.3,146.6 L101.0,148.8 L102.2,151.6 L100.5,154.1 L102.3,156.7 L101.2,159.6 L103.5,161.9 L103.0,165.0 L105.8,167.0 L105.8,170.1 L108.9,171.7 L109.5,174.9 L112.7,175.9 L113.7,179.0 L116.9,179.4 L119.0,180.9 L121.0,182.0 L121.0,182.0 L123.1,182.9 L125.0,185.3 L128.1,184.6 L130.6,186.7 L133.6,185.5 L136.5,187.3 L139.3,185.7 L142.5,187.0 L144.8,185.0 L148.1,185.7 L150.0,183.3 L153.3,183.6 L154.7,180.8 L157.8,180.5 L158.5,177.5 L161.3,176.4 L161.4,173.2 L163.8,171.6 L163.4,168.3 L165.6,166.3 L164.7,163.0 L166.7,160.5 L165.4,157.4 L167.0,154.5 L165.3,151.7 L166.6,148.5 L164.6,146.0 L165.5,142.6 L163.4,140.5 L163.9,137.0 L161.7,135.4 L161.9,132.0 L159.6,130.8 L159.6,127.6 L157.4,126.9 L157.1,124.0 L155.0,123.9 L153.8,122.7 L152.7,121.8 L151.9,121.2Z" fill="url(#lgm_2)" stroke="#d02000" stroke-width="0.9" stroke-opacity="0.7"/><path d="M151.9,121.2 L122.5,179.0 M147.2,130.3 L165.0,154.7 M147.2,130.3 L117.1,130.3 M142.6,139.5 L160.4,163.8 M142.6,139.5 L112.5,139.4 M138.0,148.6 L155.8,172.9 M138.0,148.6 L107.8,148.6 M133.3,157.7 L151.1,182.0 M133.3,157.7 L103.2,157.7 M128.7,166.8 L146.5,191.1 M128.7,166.8 L98.6,166.8 " fill="none" stroke="#ff8c00" stroke-width="1" stroke-opacity="0.4"/><path d="M213.4,134.5 L213.9,134.6 L214.6,134.5 L215.4,134.3 L216.3,134.0 L217.2,135.1 L218.2,133.0 L219.3,133.9 L220.2,131.6 L221.6,132.3 L222.4,129.7 L224.0,130.2 L224.6,127.5 L226.4,127.6 L226.7,124.9 L228.7,124.8 L228.6,122.1 L230.7,121.6 L230.2,119.0 L232.4,118.1 L231.6,115.8 L233.7,114.5 L232.5,112.6 L234.5,110.9 L233.1,109.3 L234.7,107.4 L233.0,106.1 L234.3,103.9 L232.4,103.1 L233.2,100.7 L231.3,100.3 L231.7,97.9 L229.7,97.7 L229.7,95.3 L227.7,95.6 L227.4,93.3 L225.5,93.9 L224.9,91.7 L223.2,92.7 L222.0,92.3 L221.0,92.0 L221.0,92.0 L219.9,91.9 L218.8,90.3 L217.4,92.0 L216.0,90.6 L214.8,92.6 L213.1,91.5 L212.1,93.7 L210.3,92.9 L209.7,95.2 L207.7,94.8 L207.4,97.3 L205.4,97.3 L205.6,99.7 L203.6,100.1 L204.2,102.6 L202.3,103.4 L203.3,105.7 L201.5,106.9 L202.9,109.0 L201.3,110.7 L202.9,112.4 L201.5,114.5 L203.2,115.9 L202.1,118.3 L203.9,119.3 L203.0,121.9 L204.8,122.5 L204.3,125.2 L206.0,125.5 L205.8,128.2 L207.4,128.2 L207.3,130.8 L208.8,130.5 L208.9,132.9 L210.3,132.3 L210.5,134.6 L211.7,133.6 L212.4,134.1 L213.0,134.4 L213.4,134.5Z" fill="url(#lgm_3)" stroke="#d02000" stroke-width="0.9" stroke-opacity="0.7"/><path d="M213.4,134.5 L220.6,94.1 M214.6,128.2 L203.7,117.4 M214.6,128.2 L228.5,121.9 M215.7,121.8 L204.8,111.1 M215.7,121.8 L229.6,115.5 M216.8,115.4 L205.9,104.7 M216.8,115.4 L230.8,109.1 M218.0,109.0 L207.1,98.3 M218.0,109.0 L231.9,102.7 M219.1,102.6 L208.2,91.9 M219.1,102.6 L233.0,96.3 " fill="none" stroke="#ff8c00" stroke-width="1" stroke-opacity="0.4"/><path d="M289.9,126.7 L290.7,126.2 L291.8,125.4 L292.8,124.3 L293.9,123.0 L295.9,122.8 L296.0,119.8 L298.1,119.0 L298.0,115.8 L300.1,114.5 L299.7,111.1 L301.8,109.4 L301.0,106.0 L303.0,103.9 L301.9,100.6 L303.7,98.1 L302.2,95.0 L303.8,92.1 L301.9,89.4 L303.1,86.3 L301.0,83.9 L301.7,80.7 L299.4,78.8 L299.7,75.5 L297.1,74.1 L296.8,70.9 L294.0,70.1 L293.1,67.1 L290.0,66.9 L288.5,64.2 L285.5,64.6 L283.5,62.2 L280.5,63.1 L278.1,61.1 L275.3,62.4 L272.6,60.8 L270.1,62.6 L267.2,61.4 L265.1,63.5 L262.9,64.2 L261.0,65.0 L261.0,65.0 L259.2,66.0 L256.3,65.9 L255.3,68.7 L252.3,69.3 L251.6,72.3 L248.6,73.3 L248.4,76.5 L245.6,78.0 L245.9,81.1 L243.5,83.0 L244.3,86.0 L242.3,88.3 L243.7,91.1 L242.2,93.7 L244.2,96.1 L243.3,98.9 L245.8,101.0 L245.5,103.9 L248.4,105.6 L248.6,108.7 L251.7,110.0 L252.4,113.1 L255.5,114.0 L256.7,117.2 L259.9,117.6 L261.5,120.7 L264.5,120.7 L266.5,123.6 L269.3,123.2 L271.6,125.9 L274.1,125.2 L276.5,127.5 L278.6,126.5 L281.0,128.5 L282.7,127.3 L285.0,129.0 L286.3,127.4 L287.8,127.3 L289.1,127.0 L289.9,126.7Z" fill="url(#lgm_4)" stroke="#d02000" stroke-width="0.9" stroke-opacity="0.7"/><path d="M289.9,126.7 L262.4,68.1 M285.6,117.5 L257.8,115.5 M285.6,117.5 L301.9,94.8 M281.3,108.2 L253.4,106.2 M281.3,108.2 L297.5,85.5 M276.9,99.0 L249.1,96.9 M276.9,99.0 L293.2,76.3 M272.6,89.7 L244.7,87.7 M272.6,89.7 L288.8,67.0 M268.2,80.4 L240.4,78.4 M268.2,80.4 L284.5,57.7 " fill="none" stroke="#ff8c00" stroke-width="1" stroke-opacity="0.4"/><path d="M293.4,128.3 L293.8,129.2 L294.4,130.3 L295.3,131.5 L296.5,132.7 L296.4,134.6 L299.5,135.2 L299.9,137.3 L303.3,137.6 L304.2,139.8 L307.8,139.9 L309.2,142.1 L312.9,141.9 L314.8,144.1 L318.5,143.5 L320.8,145.6 L324.3,144.6 L327.0,146.5 L330.3,145.1 L333.4,146.7 L336.3,144.9 L339.6,146.1 L342.1,144.1 L345.5,144.9 L347.5,142.6 L351.0,142.8 L352.4,140.1 L355.8,139.6 L356.7,136.7 L359.8,135.7 L360.1,132.7 L363.0,131.0 L362.8,128.0 L365.4,126.0 L364.6,123.1 L366.8,120.7 L365.6,118.1 L367.3,115.5 L365.7,113.2 L365.4,110.9 L365.0,109.0 L365.0,109.0 L364.4,107.1 L364.9,104.4 L362.3,102.9 L362.3,100.1 L359.3,98.9 L358.8,96.0 L355.6,95.2 L354.6,92.4 L351.3,92.2 L349.7,89.6 L346.4,90.0 L344.4,87.7 L341.2,88.7 L338.8,86.9 L335.7,88.5 L333.0,87.2 L330.3,89.4 L327.2,88.7 L324.8,91.2 L321.5,90.9 L319.5,93.8 L315.9,94.0 L314.4,96.9 L310.8,97.6 L309.6,100.6 L306.1,101.8 L305.4,104.7 L301.9,106.2 L301.6,108.9 L298.4,110.8 L298.5,113.2 L295.6,115.2 L296.1,117.4 L293.6,119.5 L294.4,121.3 L292.3,123.3 L293.5,124.7 L293.3,126.2 L293.3,127.4 L293.4,128.3Z" fill="url(#lgm_5)" stroke="#d02000" stroke-width="0.9" stroke-opacity="0.7"/><path d="M293.4,128.3 L361.4,110.0 M304.2,125.4 L312.3,98.9 M304.2,125.4 L324.6,144.3 M314.9,122.5 L323.1,96.0 M314.9,122.5 L335.3,141.4 M325.6,119.6 L333.8,93.1 M325.6,119.6 L346.1,138.5 M336.4,116.7 L344.5,90.2 M336.4,116.7 L356.8,135.6 M347.1,113.8 L355.3,87.3 M347.1,113.8 L367.6,132.7 " fill="none" stroke="#ff8c00" stroke-width="1" stroke-opacity="0.4"/><path d="M291.9,131.3 L290.9,131.8 L289.6,132.6 L288.3,133.6 L286.9,134.9 L284.6,135.0 L284.0,138.0 L281.5,138.6 L281.2,141.8 L278.6,142.9 L278.6,146.3 L276.0,147.9 L276.3,151.2 L273.8,153.2 L274.4,156.5 L272.2,158.9 L273.2,161.9 L271.2,164.6 L272.6,167.4 L271.1,170.3 L272.8,172.7 L271.7,175.7 L273.8,177.7 L273.1,180.8 L275.5,182.3 L275.5,185.3 L278.3,186.3 L279.0,189.1 L282.2,189.4 L283.5,192.0 L286.9,191.8 L288.7,194.1 L292.2,193.4 L294.5,195.4 L297.8,194.2 L300.5,195.8 L303.6,194.1 L306.6,195.4 L309.2,193.3 L311.8,192.7 L314.0,192.0 L314.0,192.0 L316.2,191.1 L319.3,191.3 L321.0,188.5 L324.4,188.1 L325.6,185.1 L329.0,184.2 L329.8,181.2 L333.0,179.7 L333.2,176.7 L336.2,174.9 L335.8,172.0 L338.3,169.8 L337.3,167.1 L339.2,164.6 L337.6,162.2 L338.8,159.5 L336.5,157.4 L337.1,154.7 L334.4,152.9 L334.5,150.0 L331.5,148.6 L331.1,145.6 L327.9,144.5 L326.9,141.6 L323.6,141.0 L322.3,138.0 L319.0,137.9 L317.2,135.0 L314.1,135.3 L312.0,132.6 L309.2,133.3 L306.9,130.9 L304.4,131.8 L302.0,129.7 L300.0,131.0 L297.6,129.2 L296.0,130.8 L294.3,130.9 L292.9,131.1 L291.9,131.3Z" fill="url(#lgm_6)" stroke="#d02000" stroke-width="0.9" stroke-opacity="0.7"/><path d="M291.9,131.3 L312.9,189.0 M295.2,140.4 L325.6,143.1 M295.2,140.4 L273.6,162.1 M298.5,149.5 L329.0,152.2 M298.5,149.5 L276.9,171.2 M301.8,158.6 L332.3,161.3 M301.8,158.6 L280.2,180.3 M305.1,167.7 L335.6,170.4 M305.1,167.7 L283.5,189.4 M308.5,176.8 L338.9,179.5 M308.5,176.8 L286.9,198.5 " fill="none" stroke="#ff8c00" stroke-width="1" stroke-opacity="0.4"/><path d="M143.8,250.8 L144.1,250.1 L144.3,249.0 L144.5,247.8 L144.5,246.3 L145.9,245.3 L144.2,243.1 L145.4,241.6 L143.3,239.3 L144.3,237.5 L142.0,235.3 L142.7,233.1 L140.1,231.1 L140.5,228.7 L137.7,226.9 L137.8,224.2 L134.8,222.9 L134.5,220.0 L131.6,219.2 L130.8,216.3 L127.9,215.9 L126.8,213.0 L124.0,213.1 L122.5,210.4 L119.9,210.9 L117.9,208.6 L115.5,209.7 L113.2,207.8 L111.0,209.3 L108.5,208.0 L106.6,209.9 L103.9,209.0 L102.3,211.3 L99.5,210.9 L98.4,213.4 L95.6,213.4 L94.9,216.0 L92.2,216.4 L92.0,219.0 L90.9,220.5 L90.0,222.0 L90.0,222.0 L89.3,223.5 L87.1,224.8 L88.1,227.4 L86.1,229.1 L87.5,231.6 L85.9,233.7 L87.6,236.0 L86.3,238.4 L88.4,240.4 L87.6,243.0 L90.0,244.6 L89.7,247.2 L92.4,248.4 L92.6,251.0 L95.5,251.6 L96.2,254.2 L99.3,254.2 L100.5,256.6 L103.6,256.2 L105.3,258.5 L108.2,257.6 L110.4,259.7 L113.1,258.6 L115.7,260.4 L118.1,259.0 L120.9,260.5 L123.0,258.8 L126.0,260.1 L127.7,258.3 L130.8,259.2 L132.0,257.4 L135.1,258.0 L135.8,256.1 L138.8,256.5 L139.1,254.7 L141.8,254.8 L141.6,253.1 L142.6,252.2 L143.3,251.5 L143.8,250.8Z" fill="url(#lgm_7)" stroke="#d02000" stroke-width="0.9" stroke-opacity="0.7"/><path d="M143.8,250.8 L92.7,223.4 M135.7,246.5 L115.4,258.5 M135.7,246.5 L134.5,223.0 M127.7,242.2 L107.4,254.2 M127.7,242.2 L126.4,218.6 M119.6,237.9 L99.3,249.9 M119.6,237.9 L118.3,214.3 M111.5,233.5 L91.2,245.5 M111.5,233.5 L110.3,210.0 M103.4,229.2 L83.2,241.2 M103.4,229.2 L102.2,205.7 " fill="none" stroke="#ff8c00" stroke-width="1" stroke-opacity="0.4"/><path d="M144.7,254.2 L143.9,253.8 L142.7,253.4 L141.3,253.1 L139.7,252.9 L138.4,251.4 L136.0,252.9 L134.3,251.5 L131.8,253.4 L129.7,252.2 L127.3,254.4 L124.9,253.5 L122.7,255.9 L119.9,255.3 L118.0,257.9 L115.1,257.7 L113.6,260.5 L110.5,260.6 L109.5,263.5 L106.4,264.1 L105.9,266.9 L102.9,267.9 L102.8,270.7 L100.1,272.1 L100.5,274.7 L98.2,276.5 L99.3,279.1 L97.4,281.3 L99.1,283.7 L97.8,286.2 L99.9,288.4 L99.1,291.2 L101.5,293.0 L101.2,295.9 L104.0,297.3 L104.2,300.3 L107.1,301.2 L107.6,304.1 L110.5,304.5 L112.3,305.9 L114.0,307.0 L114.0,307.0 L115.8,307.9 L117.3,310.3 L120.1,309.6 L122.1,311.8 L124.9,310.6 L127.3,312.5 L129.9,311.0 L132.6,312.5 L134.8,310.6 L137.7,311.6 L139.4,309.4 L142.4,309.9 L143.6,307.4 L146.5,307.3 L147.2,304.5 L149.9,303.9 L150.0,300.8 L152.4,299.6 L152.1,296.6 L154.3,294.9 L153.6,291.9 L155.6,289.8 L154.4,286.9 L156.3,284.4 L154.7,281.8 L156.2,279.0 L154.5,276.7 L155.6,273.7 L153.7,271.8 L154.5,268.6 L152.5,267.2 L153.1,264.0 L151.0,263.0 L151.3,260.0 L149.2,259.5 L149.3,256.7 L147.3,256.7 L146.4,255.6 L145.5,254.7 L144.7,254.2Z" fill="url(#lgm_8)" stroke="#d02000" stroke-width="0.9" stroke-opacity="0.7"/><path d="M144.7,254.2 L115.5,304.4 M140.1,262.1 L154.3,284.5 M140.1,262.1 L113.7,260.8 M135.5,270.0 L149.7,292.4 M135.5,270.0 L109.0,268.8 M130.9,277.9 L145.1,300.3 M130.9,277.9 L104.4,276.7 M126.3,285.9 L140.5,308.3 M126.3,285.9 L99.8,284.6 M121.7,293.8 L135.9,316.2 M121.7,293.8 L95.2,292.5 " fill="none" stroke="#ff8c00" stroke-width="1" stroke-opacity="0.4"/><path d="M148.1,253.4 L147.6,254.2 L147.1,255.3 L146.7,256.6 L146.3,258.1 L144.5,259.1 L145.8,261.5 L144.1,263.0 L145.6,265.3 L144.1,267.2 L145.8,269.4 L144.5,271.7 L146.5,273.7 L145.4,276.3 L147.5,278.0 L146.8,280.8 L149.1,282.1 L148.7,285.0 L151.1,285.9 L151.1,288.8 L153.5,289.2 L153.9,292.0 L156.3,292.0 L157.1,294.6 L159.5,294.2 L160.7,296.4 L163.1,295.4 L164.7,297.1 L167.0,295.6 L168.9,296.9 L171.1,294.9 L173.4,295.8 L175.3,293.4 L177.8,293.9 L179.3,291.1 L182.0,291.2 L183.1,288.3 L185.8,288.0 L186.4,285.2 L187.8,283.5 L189.0,282.0 L189.0,282.0 L190.0,280.4 L192.5,279.1 L192.1,276.4 L194.5,274.6 L193.6,272.0 L195.8,269.8 L194.7,267.5 L196.5,264.9 L195.0,262.9 L196.4,260.2 L194.6,258.7 L195.5,255.9 L193.5,254.8 L193.9,252.1 L191.5,251.5 L191.4,249.0 L188.8,248.9 L188.1,246.6 L185.4,247.0 L184.3,244.8 L181.6,245.6 L180.1,243.6 L177.5,244.7 L175.6,242.9 L173.1,244.4 L170.9,242.9 L168.7,244.6 L166.3,243.4 L164.4,245.3 L161.7,244.3 L160.3,246.4 L157.6,245.6 L156.5,247.7 L153.8,247.2 L153.2,249.3 L150.7,249.0 L150.5,251.1 L149.5,251.9 L148.6,252.8 L148.1,253.4Z" fill="url(#lgm_9)" stroke="#d02000" stroke-width="0.9" stroke-opacity="0.7"/><path d="M148.1,253.4 L187.0,280.6 M154.2,257.7 L175.4,244.8 M154.2,257.7 L149.4,282.0 M160.3,262.0 L181.5,249.1 M160.3,262.0 L155.5,286.3 M166.5,266.3 L187.6,253.4 M166.5,266.3 L161.7,290.6 M172.6,270.6 L193.8,257.7 M172.6,270.6 L167.8,294.9 M178.8,274.9 L199.9,262.0 M178.8,274.9 L174.0,299.2 " fill="none" stroke="#ff8c00" stroke-width="1" stroke-opacity="0.4"/><path d="M208,181 L224,178 L238,182 L250,188 L256,194 L244,196 L230,193 L216,191 Z" fill="#c8e820"/><path d="M224,191 L234,205" stroke="#c8e820" stroke-width="2.5"/><path d="M194,179 L198,175 L197,169 L203,172 L208,167 L210,173 L216,173 L213,179 L217,184 L210,186 L209,192 L204,188 L198,191 L198,184 Z" fill="#c8e820"/><circle cx="204" cy="179" r="5" fill="#ffa000"/><path d="M256,173 Q262,163 270,169 Q272,181 262,185 Q254,181 256,173Z" fill="#c8e820"/><path d="M240,147 L246,159" stroke="#c8e820" stroke-width="4"/></g></svg>
<div style="left:1503px;top:225px;width:36px;height:20px;background:#1818f0;border-radius:3px 0 0 0"></div>
<div class="t" style="left:1507px;top:228.2px;font-size:6.5px;line-height:6.5px;color:#fff;">Area 1</div>
<div class="t" style="left:1506px;top:237.5px;font-size:6.5px;line-height:6.5px;color:#fff;">11466.88</div>
<div style="left:1531px;top:228px;width:7px;height:7px;background:#e8d800"></div>
<div class="t" style="left:1152px;top:416.2px;font-size:7.8px;line-height:7.8px;color:#2b2b2b;">Zoom 45 %</div>
<div style="left:1195px;top:412px;width:1px;height:14px;background:#c8c8c8"></div>
<div class="t" style="left:1199px;top:416.2px;font-size:7.7px;line-height:7.7px;color:#2b2b2b;">Resolution: 1360 x 1024</div>
<div style="left:1284px;top:412px;width:1px;height:14px;background:#c8c8c8"></div>
<div style="left:1147px;top:437px;width:692px;height:2px;background:#a8a8a8"></div>
<div style="left:1147px;top:437px;width:2px;height:188px;background:#a8a8a8"></div>
<div style="left:1149px;top:624px;width:690px;height:1px;background:#dcdcdc"></div>
<div style="left:1149px;top:439px;width:28px;height:17px;background:#f8f8f8"></div>
<div class="t" style="left:1153px;top:444.1px;font-size:7.1px;line-height:7.1px;color:#2b2b2b;">Graph</div>
<div class="t" style="left:1180px;top:444.6px;font-size:7.1px;line-height:7.1px;color:#2b2b2b;">Numeric</div>
<div style="left:1211px;top:441px;width:1px;height:14px;background:#e6e6e6"></div>
<div class="t" style="left:1215px;top:444.6px;font-size:7.1px;line-height:7.1px;color:#2b2b2b;">Numeric Avg</div>
<div style="left:1260px;top:441px;width:1px;height:14px;background:#e6e6e6"></div>
<div class="t" style="left:1264px;top:444.6px;font-size:7.1px;line-height:7.1px;color:#2b2b2b;">Histogram</div>
<div style="left:1299px;top:441px;width:1px;height:14px;background:#e6e6e6"></div>
<div class="t" style="left:1303px;top:444.6px;font-size:7.1px;line-height:7.1px;color:#2b2b2b;">Notepad</div>
<div style="left:1149px;top:456px;width:690px;height:1px;background:#e4e4e4"></div>
<div style="left:1206px;top:459px;width:18px;height:17px;background:#fbfbfb;border:1px solid #e6e6e6;border-radius:2px"></div>
<div style="left:1229px;top:459px;width:18px;height:17px;background:#fbfbfb;border:1px solid #e6e6e6;border-radius:2px"></div>
<div style="left:1252px;top:459px;width:18px;height:17px;background:#fff;border:1px solid #3a8ee0;border-radius:2px"></div>
<div style="left:1275px;top:459px;width:18px;height:17px;background:#fbfbfb;border:1px solid #e6e6e6;border-radius:2px"></div>
<svg style="left:1163px;top:460px" width="152" height="16"><path d="M3 13 H13 M4 12 V5 H8 V12 M9 12 V8 H12 V12" stroke="#333" fill="none" stroke-width="1.2"/><rect x="22" y="3" width="10" height="10" fill="#c04070"/><path d="M22 6 H32 M22 9 H32" stroke="#6060ff" stroke-width="1.5"/><path d="M48 3 H56 M52 3 V13 M48 13 H56 M49 5 L52 3 L55 5 M49 11 L52 13 L55 11" stroke="#333" fill="none" stroke-width="1.2"/><path d="M70 4 V12 M82 4 V12 M71 8 L75 5 V11Z M81 8 L77 5 V11Z" stroke="#333" fill="#333" stroke-width="1"/><path d="M92 3 H102 V13 H92 Z" fill="none" stroke="#333"/><path d="M94 5 L100 11 M100 5 L94 11" stroke="#333" stroke-width="1.8"/><path d="M116 4 V12 H120 M123 4 V12 H127" stroke="#333" fill="none" stroke-width="1.2"/><path d="M138 6 H148 V11 H138Z M140 6 V3 H146 V6 M140 11 V14 H146 V11" stroke="#555" fill="#aaa" stroke-width="1"/></svg>
<div class="t" style="left:1394px;width:200px;text-align:center;top:462.9px;font-size:7.5px;line-height:7.5px;color:#222;font-weight:bold">Kinetics</div>
<div style="left:1779px;top:463px;width:10px;height:10px;background:#fff;border:1px solid #333"></div>
<div class="t" style="left:1792px;top:465.2px;font-size:6.7px;line-height:6.7px;color:#2b2b2b;">Normalize</div>
<div style="left:1210px;top:479px;width:621px;height:118px;background:#fff;border:1px solid #333;border-top:2px solid #333"></div>
<svg style="left:1210px;top:479px" width="621" height="118"><path d="M16.8 1 V117" stroke="#222" stroke-width="0.7" stroke-dasharray="2 2"/><path d="M50.0 1 V117" stroke="#222" stroke-width="0.7" stroke-dasharray="2 2"/><path d="M83.3 1 V117" stroke="#222" stroke-width="0.7" stroke-dasharray="2 2"/><path d="M116.5 1 V117" stroke="#222" stroke-width="0.7" stroke-dasharray="2 2"/><path d="M149.7 1 V117" stroke="#222" stroke-width="0.7" stroke-dasharray="2 2"/><path d="M182.9 1 V117" stroke="#222" stroke-width="0.7" stroke-dasharray="2 2"/><path d="M216.2 1 V117" stroke="#222" stroke-width="0.7" stroke-dasharray="2 2"/><path d="M249.4 1 V117" stroke="#222" stroke-width="0.7" stroke-dasharray="2 2"/><path d="M282.6 1 V117" stroke="#222" stroke-width="0.7" stroke-dasharray="2 2"/><path d="M315.8 1 V117" stroke="#222" stroke-width="0.7" stroke-dasharray="2 2"/><path d="M349.0 1 V117" stroke="#222" stroke-width="0.7" stroke-dasharray="2 2"/><path d="M382.3 1 V117" stroke="#222" stroke-width="0.7" stroke-dasharray="2 2"/><path d="M415.5 1 V117" stroke="#222" stroke-width="0.7" stroke-dasharray="2 2"/><path d="M448.7 1 V117" stroke="#222" stroke-width="0.7" stroke-dasharray="2 2"/><path d="M481.9 1 V117" stroke="#222" stroke-width="0.7" stroke-dasharray="2 2"/><path d="M515.2 1 V117" stroke="#222" stroke-width="0.7" stroke-dasharray="2 2"/><path d="M548.4 1 V117" stroke="#222" stroke-width="0.7" stroke-dasharray="2 2"/><path d="M581.6 1 V117" stroke="#222" stroke-width="0.7" stroke-dasharray="2 2"/><path d="M614.8 1 V117" stroke="#222" stroke-width="0.7" stroke-dasharray="2 2"/><path d="M1 108.0 H620" stroke="#aaa" stroke-width="0.7" stroke-dasharray="2 2"/><path d="M1 65.5 H620" stroke="#aaa" stroke-width="0.7" stroke-dasharray="2 2"/><path d="M1 23.0 H620" stroke="#aaa" stroke-width="0.7" stroke-dasharray="2 2"/></svg>
<div class="t" style="left:1002px;width:200px;text-align:right;top:583.9px;font-size:7.5px;line-height:7.5px;color:#444;">0</div>
<div style="left:1204px;top:587px;width:6px;height:1px;background:#555"></div>
<div class="t" style="left:1002px;width:200px;text-align:right;top:541.4px;font-size:7.5px;line-height:7.5px;color:#444;">5000</div>
<div style="left:1204px;top:544px;width:6px;height:1px;background:#555"></div>
<div class="t" style="left:1002px;width:200px;text-align:right;top:498.9px;font-size:7.5px;line-height:7.5px;color:#444;">10000</div>
<div style="left:1204px;top:502px;width:6px;height:1px;background:#555"></div>
<div style="left:1206px;top:596px;width:4px;height:1px;background:#777"></div>
<div style="left:1206px;top:587px;width:4px;height:1px;background:#777"></div>
<div style="left:1206px;top:578px;width:4px;height:1px;background:#777"></div>
<div style="left:1206px;top:570px;width:4px;height:1px;background:#777"></div>
<div style="left:1206px;top:562px;width:4px;height:1px;background:#777"></div>
<div style="left:1206px;top:553px;width:4px;height:1px;background:#777"></div>
<div style="left:1206px;top:544px;width:4px;height:1px;background:#777"></div>
<div style="left:1206px;top:536px;width:4px;height:1px;background:#777"></div>
<div style="left:1206px;top:528px;width:4px;height:1px;background:#777"></div>
<div style="left:1206px;top:519px;width:4px;height:1px;background:#777"></div>
<div style="left:1206px;top:510px;width:4px;height:1px;background:#777"></div>
<div style="left:1206px;top:502px;width:4px;height:1px;background:#777"></div>
<div class="t" style="left:1126.822px;width:200px;text-align:center;top:600.4px;font-size:7.5px;line-height:7.5px;color:#444;">10</div>
<div class="t" style="left:1160.0439999999999px;width:200px;text-align:center;top:600.4px;font-size:7.5px;line-height:7.5px;color:#444;">20</div>
<div class="t" style="left:1193.2659999999998px;width:200px;text-align:center;top:600.4px;font-size:7.5px;line-height:7.5px;color:#444;">30</div>
<div class="t" style="left:1226.4879999999998px;width:200px;text-align:center;top:600.4px;font-size:7.5px;line-height:7.5px;color:#444;">40</div>
<div class="t" style="left:1259.71px;width:200px;text-align:center;top:600.4px;font-size:7.5px;line-height:7.5px;color:#444;">50</div>
<div class="t" style="left:1292.9319999999998px;width:200px;text-align:center;top:600.4px;font-size:7.5px;line-height:7.5px;color:#444;">60</div>
<div class="t" style="left:1326.154px;width:200px;text-align:center;top:600.4px;font-size:7.5px;line-height:7.5px;color:#444;">70</div>
<div class="t" style="left:1359.376px;width:200px;text-align:center;top:600.4px;font-size:7.5px;line-height:7.5px;color:#444;">80</div>
<div class="t" style="left:1392.598px;width:200px;text-align:center;top:600.4px;font-size:7.5px;line-height:7.5px;color:#444;">90</div>
<div class="t" style="left:1425.82px;width:200px;text-align:center;top:600.4px;font-size:7.5px;line-height:7.5px;color:#444;">100</div>
<div class="t" style="left:1459.042px;width:200px;text-align:center;top:600.4px;font-size:7.5px;line-height:7.5px;color:#444;">110</div>
<div class="t" style="left:1492.264px;width:200px;text-align:center;top:600.4px;font-size:7.5px;line-height:7.5px;color:#444;">120</div>
<div class="t" style="left:1525.4859999999999px;width:200px;text-align:center;top:600.4px;font-size:7.5px;line-height:7.5px;color:#444;">130</div>
<div class="t" style="left:1558.7079999999999px;width:200px;text-align:center;top:600.4px;font-size:7.5px;line-height:7.5px;color:#444;">140</div>
<div class="t" style="left:1591.9299999999998px;width:200px;text-align:center;top:600.4px;font-size:7.5px;line-height:7.5px;color:#444;">150</div>
<div class="t" style="left:1625.152px;width:200px;text-align:center;top:600.4px;font-size:7.5px;line-height:7.5px;color:#444;">160</div>
<div class="t" style="left:1658.3739999999998px;width:200px;text-align:center;top:600.4px;font-size:7.5px;line-height:7.5px;color:#444;">170</div>
<div class="t" style="left:1691.596px;width:200px;text-align:center;top:600.4px;font-size:7.5px;line-height:7.5px;color:#444;">180</div>
<div class="t" style="left:1724.8179999999998px;width:200px;text-align:center;top:600.4px;font-size:7.5px;line-height:7.5px;color:#444;">190</div>
<svg style="left:1210px;top:479px" width="621" height="118"><path d="M0.0,91.9 L16.8,91.9 L17.7,10.3 L18.7,10.0 L20.5,62.6 L23.3,71.0 L28.0,75.6 L34.5,80.3 L44.8,84.0 L56.0,85.9 L72.8,87.8 L75.6,77.5 L77.4,43.9 L79.3,28.0 L82.0,29.0 L104.5,43.0 L106.7,29.0 L108.2,44.8 L116.6,51.4 L130.6,59.8 L138.0,65.4 L140.0,58.0 L141.8,66.3 L149.3,71.0 L162.3,75.6 L171.6,77.5 L173.9,68.2 L175.4,77.5 L186.6,80.3 L202.4,83.2 L236.7,85.5 L239.8,75.4 L242.9,84.8 L255.3,87.1 L303.5,87.9 L305.9,75.1 L308.2,86.3 L310.5,90.7 L410.8,90.7 L412.4,44.0 L414.0,44.3 L415.5,81.7 L420.2,87.1 L430.0,87.6 L510.4,89.7 L512.6,32.9 L514.5,82.5 L520.0,86.5 L609.8,89.7 L612.0,28.8 L614.5,82.5 L619.3,87.2" fill="none" stroke="#6464f0" stroke-width="1.3" stroke-linejoin="round"/></svg>
<div class="t" style="left:1108px;top:515px;width:110px;height:10px;font-size:6.5px;line-height:10px;text-align:center;color:#333;transform:rotate(-90deg);transform-origin:55px 5px;left:1107px">fluorescence yield a.u.</div>
<div style="left:1476px;top:613px;width:13px;height:2px;background:#5050f0"></div>
<div class="t" style="left:1490px;top:611.9px;font-size:6.5px;line-height:6.5px;color:#333;">Area 1</div>
<div class="t" style="left:1808px;top:611.4px;font-size:6.5px;line-height:6.5px;color:#333;">time [s]</div>
<div style="left:1844px;top:83px;width:20px;height:539px;background:linear-gradient(180deg,#ff0000 0.0%,#ff7200 24.5%,#ffc300 39.6%,#fff200 46.4%,#cfff00 54.7%,#40ff00 66.8%,#00f000 73.6%,#007a6a 80.4%,#0028d0 84.1%,#0000ff 87.2%,#000078 94.0%,#000000 100.0%)"></div>
<div style="left:1864px;top:621px;width:7px;height:1px;background:#555"></div>
<div class="t" style="left:1871px;top:617.9px;font-size:7.5px;line-height:7.5px;color:#444;">0</div>
<div style="left:1864px;top:608px;width:4px;height:1px;background:#333"></div>
<div style="left:1864px;top:596px;width:4px;height:1px;background:#333"></div>
<div style="left:1864px;top:583px;width:4px;height:1px;background:#333"></div>
<div style="left:1864px;top:570px;width:7px;height:1px;background:#555"></div>
<div class="t" style="left:1871px;top:566.9px;font-size:7.5px;line-height:7.5px;color:#444;">2000</div>
<div style="left:1864px;top:557px;width:4px;height:1px;background:#333"></div>
<div style="left:1864px;top:544px;width:4px;height:1px;background:#333"></div>
<div style="left:1864px;top:532px;width:4px;height:1px;background:#333"></div>
<div style="left:1864px;top:519px;width:7px;height:1px;background:#555"></div>
<div class="t" style="left:1871px;top:515.9px;font-size:7.5px;line-height:7.5px;color:#444;">4000</div>
<div style="left:1864px;top:506px;width:4px;height:1px;background:#333"></div>
<div style="left:1864px;top:494px;width:4px;height:1px;background:#333"></div>
<div style="left:1864px;top:481px;width:4px;height:1px;background:#333"></div>
<div style="left:1864px;top:468px;width:7px;height:1px;background:#555"></div>
<div class="t" style="left:1871px;top:464.9px;font-size:7.5px;line-height:7.5px;color:#444;">6000</div>
<div style="left:1864px;top:455px;width:4px;height:1px;background:#333"></div>
<div style="left:1864px;top:442px;width:4px;height:1px;background:#333"></div>
<div style="left:1864px;top:430px;width:4px;height:1px;background:#333"></div>
<div style="left:1864px;top:417px;width:7px;height:1px;background:#555"></div>
<div class="t" style="left:1871px;top:413.9px;font-size:7.5px;line-height:7.5px;color:#444;">8000</div>
<div style="left:1864px;top:404px;width:4px;height:1px;background:#333"></div>
<div style="left:1864px;top:392px;width:4px;height:1px;background:#333"></div>
<div style="left:1864px;top:379px;width:4px;height:1px;background:#333"></div>
<div style="left:1864px;top:366px;width:7px;height:1px;background:#555"></div>
<div class="t" style="left:1871px;top:362.9px;font-size:7.5px;line-height:7.5px;color:#444;">10000</div>
<div style="left:1864px;top:353px;width:4px;height:1px;background:#333"></div>
<div style="left:1864px;top:340px;width:4px;height:1px;background:#333"></div>
<div style="left:1864px;top:328px;width:4px;height:1px;background:#333"></div>
<div style="left:1864px;top:315px;width:7px;height:1px;background:#555"></div>
<div class="t" style="left:1871px;top:311.9px;font-size:7.5px;line-height:7.5px;color:#444;">12000</div>
<div style="left:1864px;top:302px;width:4px;height:1px;background:#333"></div>
<div style="left:1864px;top:290px;width:4px;height:1px;background:#333"></div>
<div style="left:1864px;top:277px;width:4px;height:1px;background:#333"></div>
<div style="left:1864px;top:264px;width:7px;height:1px;background:#555"></div>
<div class="t" style="left:1871px;top:260.9px;font-size:7.5px;line-height:7.5px;color:#444;">14000</div>
<div style="left:1864px;top:251px;width:4px;height:1px;background:#333"></div>
<div style="left:1864px;top:238px;width:4px;height:1px;background:#333"></div>
<div style="left:1864px;top:226px;width:4px;height:1px;background:#333"></div>
<div style="left:1864px;top:213px;width:7px;height:1px;background:#555"></div>
<div class="t" style="left:1871px;top:209.8px;font-size:7.5px;line-height:7.5px;color:#444;">16000</div>
<div style="left:1864px;top:200px;width:4px;height:1px;background:#333"></div>
<div style="left:1864px;top:188px;width:4px;height:1px;background:#333"></div>
<div style="left:1864px;top:175px;width:4px;height:1px;background:#333"></div>
<div style="left:1864px;top:162px;width:7px;height:1px;background:#555"></div>
<div class="t" style="left:1871px;top:158.8px;font-size:7.5px;line-height:7.5px;color:#444;">18000</div>
<div style="left:1864px;top:149px;width:4px;height:1px;background:#333"></div>
<div style="left:1864px;top:136px;width:4px;height:1px;background:#333"></div>
<div style="left:1864px;top:124px;width:4px;height:1px;background:#333"></div>
<div style="left:1864px;top:111px;width:7px;height:1px;background:#555"></div>
<div class="t" style="left:1871px;top:107.8px;font-size:7.5px;line-height:7.5px;color:#444;">20000</div>
<div style="left:1864px;top:98px;width:4px;height:1px;background:#333"></div>
<svg style="left:1849px;top:67px" width="11" height="10"><path d="M1 1 L4.5 5 L1 9 M5 1 L8.5 5 L5 9" fill="none" stroke="#444" stroke-width="1"/></svg>
<div style="left:1899px;top:61px;width:264px;height:311px;border:1px solid #a8a8a8;border-right-color:#dcdcdc;border-bottom-color:#dcdcdc;background:#f0f0f0"></div>
<div style="left:2153px;top:74px;width:5px;height:30px;background:#c2c2c2"></div>
<div style="left:1901px;top:83px;width:81px;height:65px;background:#000"></div>
<svg style="left:1901px;top:83px" width="81" height="65"><defs><radialGradient id="lgb00" cx="0.5" cy="0.5" r="0.6"><stop offset="0" stop-color="#2020ff"/><stop offset="1" stop-color="#0a0ac8"/></radialGradient></defs><g transform="scale(0.195)"><path d="M153,119 Q172,154 204,179" fill="none" stroke="#0a0ab0" stroke-width="3"/><path d="M213,137 Q208,157 204,179" fill="none" stroke="#0a0ab0" stroke-width="3"/><path d="M291,129 Q243,165 204,179" fill="none" stroke="#0a0ab0" stroke-width="3"/><path d="M146,252 Q175,222 204,179" fill="none" stroke="#0a0ab0" stroke-width="3"/><path d="M151.2,117.2 L151.8,116.4 L152.5,115.2 L153.1,113.7 L153.6,112.0 L155.3,110.9 L154.2,107.7 L155.7,106.1 L154.3,102.7 L155.6,100.6 L153.8,97.0 L154.9,94.5 L152.7,90.9 L153.5,88.0 L151.0,84.6 L151.5,81.3 L148.6,78.2 L148.7,74.6 L145.5,72.0 L145.2,68.2 L141.9,66.2 L141.0,62.4 L137.7,60.9 L136.4,57.1 L133.1,56.2 L131.2,52.8 L127.9,52.6 L125.4,49.7 L122.2,50.1 L119.3,47.7 L116.3,48.8 L113.1,46.9 L110.4,48.5 L107.0,47.2 L104.6,49.2 L101.2,48.4 L99.3,50.8 L95.9,50.6 L94.6,53.2 L92.6,54.6 L91.0,56.0 L91.0,56.0 L89.6,57.6 L86.9,58.6 L86.8,61.8 L84.3,63.4 L84.7,66.8 L82.5,68.9 L83.4,72.3 L81.6,74.9 L83.1,78.2 L81.8,81.1 L83.9,84.2 L83.0,87.3 L85.7,90.0 L85.5,93.3 L88.6,95.5 L89.1,98.8 L92.7,100.5 L93.9,103.8 L97.7,105.0 L99.4,108.3 L103.2,109.0 L105.5,112.3 L109.2,112.4 L112.0,115.5 L115.4,115.3 L118.6,118.0 L121.8,117.4 L125.2,119.8 L128.0,119.0 L131.6,121.0 L133.9,119.8 L137.4,121.5 L139.3,120.1 L142.6,121.4 L143.9,119.8 L146.9,120.7 L147.7,119.0 L149.3,118.4 L150.5,117.8 L151.2,117.2Z" fill="url(#lgb00)"/><path d="M154.7,117.1 L155.3,117.6 L156.4,118.2 L157.6,118.7 L159.1,119.1 L159.9,120.9 L162.5,119.8 L163.7,121.4 L166.4,120.1 L168.1,121.6 L170.8,119.9 L172.9,121.2 L175.4,119.3 L177.8,120.4 L180.1,118.2 L182.8,119.0 L184.7,116.6 L187.7,117.0 L189.1,114.5 L192.2,114.5 L193.2,111.9 L196.2,111.5 L196.8,108.9 L199.7,108.1 L199.7,105.5 L202.4,104.2 L201.8,101.6 L204.0,99.9 L202.9,97.3 L204.8,95.2 L203.2,92.8 L204.6,90.4 L202.6,88.2 L203.5,85.6 L201.2,83.8 L201.7,80.9 L199.2,79.6 L199.3,76.7 L196.7,75.9 L195.3,74.3 L194.0,73.0 L194.0,73.0 L192.6,71.8 L191.7,69.3 L188.9,69.6 L187.5,67.1 L184.7,67.7 L182.9,65.5 L180.2,66.5 L178.0,64.6 L175.6,66.1 L173.1,64.5 L171.0,66.4 L168.4,65.4 L166.7,67.6 L164.0,67.1 L162.8,69.7 L160.2,69.7 L159.5,72.6 L156.9,73.2 L156.7,76.3 L154.2,77.3 L154.4,80.4 L151.9,81.9 L152.5,84.9 L150.2,86.8 L151.2,89.6 L149.1,91.9 L150.4,94.4 L148.6,97.0 L150.1,99.2 L148.6,101.9 L150.2,103.7 L149.0,106.5 L150.7,107.8 L149.8,110.6 L151.6,111.4 L150.9,114.0 L152.8,114.4 L153.4,115.6 L154.1,116.5 L154.7,117.1Z" fill="url(#lgb00)"/><path d="M151.9,121.2 L150.9,120.9 L149.5,120.5 L147.9,120.3 L146.0,120.1 L144.4,118.6 L141.8,120.3 L139.8,119.0 L137.2,121.1 L134.7,120.1 L132.1,122.4 L129.3,121.7 L127.0,124.3 L123.8,124.0 L121.9,126.9 L118.6,126.9 L117.0,129.9 L113.6,130.5 L112.6,133.5 L109.3,134.5 L108.7,137.5 L105.7,138.9 L105.6,141.9 L102.8,143.7 L103.3,146.6 L101.0,148.8 L102.2,151.6 L100.5,154.1 L102.3,156.7 L101.2,159.6 L103.5,161.9 L103.0,165.0 L105.8,167.0 L105.8,170.1 L108.9,171.7 L109.5,174.9 L112.7,175.9 L113.7,179.0 L116.9,179.4 L119.0,180.9 L121.0,182.0 L121.0,182.0 L123.1,182.9 L125.0,185.3 L128.1,184.6 L130.6,186.7 L133.6,185.5 L136.5,187.3 L139.3,185.7 L142.5,187.0 L144.8,185.0 L148.1,185.7 L150.0,183.3 L153.3,183.6 L154.7,180.8 L157.8,180.5 L158.5,177.5 L161.3,176.4 L161.4,173.2 L163.8,171.6 L163.4,168.3 L165.6,166.3 L164.7,163.0 L166.7,160.5 L165.4,157.4 L167.0,154.5 L165.3,151.7 L166.6,148.5 L164.6,146.0 L165.5,142.6 L163.4,140.5 L163.9,137.0 L161.7,135.4 L161.9,132.0 L159.6,130.8 L159.6,127.6 L157.4,126.9 L157.1,124.0 L155.0,123.9 L153.8,122.7 L152.7,121.8 L151.9,121.2Z" fill="url(#lgb00)"/><path d="M213.4,134.5 L213.9,134.6 L214.6,134.5 L215.4,134.3 L216.3,134.0 L217.2,135.1 L218.2,133.0 L219.3,133.9 L220.2,131.6 L221.6,132.3 L222.4,129.7 L224.0,130.2 L224.6,127.5 L226.4,127.6 L226.7,124.9 L228.7,124.8 L228.6,122.1 L230.7,121.6 L230.2,119.0 L232.4,118.1 L231.6,115.8 L233.7,114.5 L232.5,112.6 L234.5,110.9 L233.1,109.3 L234.7,107.4 L233.0,106.1 L234.3,103.9 L232.4,103.1 L233.2,100.7 L231.3,100.3 L231.7,97.9 L229.7,97.7 L229.7,95.3 L227.7,95.6 L227.4,93.3 L225.5,93.9 L224.9,91.7 L223.2,92.7 L222.0,92.3 L221.0,92.0 L221.0,92.0 L219.9,91.9 L218.8,90.3 L217.4,92.0 L216.0,90.6 L214.8,92.6 L213.1,91.5 L212.1,93.7 L210.3,92.9 L209.7,95.2 L207.7,94.8 L207.4,97.3 L205.4,97.3 L205.6,99.7 L203.6,100.1 L204.2,102.6 L202.3,103.4 L203.3,105.7 L201.5,106.9 L202.9,109.0 L201.3,110.7 L202.9,112.4 L201.5,114.5 L203.2,115.9 L202.1,118.3 L203.9,119.3 L203.0,121.9 L204.8,122.5 L204.3,125.2 L206.0,125.5 L205.8,128.2 L207.4,128.2 L207.3,130.8 L208.8,130.5 L208.9,132.9 L210.3,132.3 L210.5,134.6 L211.7,133.6 L212.4,134.1 L213.0,134.4 L213.4,134.5Z" fill="url(#lgb00)"/><path d="M289.9,126.7 L290.7,126.2 L291.8,125.4 L292.8,124.3 L293.9,123.0 L295.9,122.8 L296.0,119.8 L298.1,119.0 L298.0,115.8 L300.1,114.5 L299.7,111.1 L301.8,109.4 L301.0,106.0 L303.0,103.9 L301.9,100.6 L303.7,98.1 L302.2,95.0 L303.8,92.1 L301.9,89.4 L303.1,86.3 L301.0,83.9 L301.7,80.7 L299.4,78.8 L299.7,75.5 L297.1,74.1 L296.8,70.9 L294.0,70.1 L293.1,67.1 L290.0,66.9 L288.5,64.2 L285.5,64.6 L283.5,62.2 L280.5,63.1 L278.1,61.1 L275.3,62.4 L272.6,60.8 L270.1,62.6 L267.2,61.4 L265.1,63.5 L262.9,64.2 L261.0,65.0 L261.0,65.0 L259.2,66.0 L256.3,65.9 L255.3,68.7 L252.3,69.3 L251.6,72.3 L248.6,73.3 L248.4,76.5 L245.6,78.0 L245.9,81.1 L243.5,83.0 L244.3,86.0 L242.3,88.3 L243.7,91.1 L242.2,93.7 L244.2,96.1 L243.3,98.9 L245.8,101.0 L245.5,103.9 L248.4,105.6 L248.6,108.7 L251.7,110.0 L252.4,113.1 L255.5,114.0 L256.7,117.2 L259.9,117.6 L261.5,120.7 L264.5,120.7 L266.5,123.6 L269.3,123.2 L271.6,125.9 L274.1,125.2 L276.5,127.5 L278.6,126.5 L281.0,128.5 L282.7,127.3 L285.0,129.0 L286.3,127.4 L287.8,127.3 L289.1,127.0 L289.9,126.7Z" fill="url(#lgb00)"/><path d="M293.4,128.3 L293.8,129.2 L294.4,130.3 L295.3,131.5 L296.5,132.7 L296.4,134.6 L299.5,135.2 L299.9,137.3 L303.3,137.6 L304.2,139.8 L307.8,139.9 L309.2,142.1 L312.9,141.9 L314.8,144.1 L318.5,143.5 L320.8,145.6 L324.3,144.6 L327.0,146.5 L330.3,145.1 L333.4,146.7 L336.3,144.9 L339.6,146.1 L342.1,144.1 L345.5,144.9 L347.5,142.6 L351.0,142.8 L352.4,140.1 L355.8,139.6 L356.7,136.7 L359.8,135.7 L360.1,132.7 L363.0,131.0 L362.8,128.0 L365.4,126.0 L364.6,123.1 L366.8,120.7 L365.6,118.1 L367.3,115.5 L365.7,113.2 L365.4,110.9 L365.0,109.0 L365.0,109.0 L364.4,107.1 L364.9,104.4 L362.3,102.9 L362.3,100.1 L359.3,98.9 L358.8,96.0 L355.6,95.2 L354.6,92.4 L351.3,92.2 L349.7,89.6 L346.4,90.0 L344.4,87.7 L341.2,88.7 L338.8,86.9 L335.7,88.5 L333.0,87.2 L330.3,89.4 L327.2,88.7 L324.8,91.2 L321.5,90.9 L319.5,93.8 L315.9,94.0 L314.4,96.9 L310.8,97.6 L309.6,100.6 L306.1,101.8 L305.4,104.7 L301.9,106.2 L301.6,108.9 L298.4,110.8 L298.5,113.2 L295.6,115.2 L296.1,117.4 L293.6,119.5 L294.4,121.3 L292.3,123.3 L293.5,124.7 L293.3,126.2 L293.3,127.4 L293.4,128.3Z" fill="url(#lgb00)"/><path d="M291.9,131.3 L290.9,131.8 L289.6,132.6 L288.3,133.6 L286.9,134.9 L284.6,135.0 L284.0,138.0 L281.5,138.6 L281.2,141.8 L278.6,142.9 L278.6,146.3 L276.0,147.9 L276.3,151.2 L273.8,153.2 L274.4,156.5 L272.2,158.9 L273.2,161.9 L271.2,164.6 L272.6,167.4 L271.1,170.3 L272.8,172.7 L271.7,175.7 L273.8,177.7 L273.1,180.8 L275.5,182.3 L275.5,185.3 L278.3,186.3 L279.0,189.1 L282.2,189.4 L283.5,192.0 L286.9,191.8 L288.7,194.1 L292.2,193.4 L294.5,195.4 L297.8,194.2 L300.5,195.8 L303.6,194.1 L306.6,195.4 L309.2,193.3 L311.8,192.7 L314.0,192.0 L314.0,192.0 L316.2,191.1 L319.3,191.3 L321.0,188.5 L324.4,188.1 L325.6,185.1 L329.0,184.2 L329.8,181.2 L333.0,179.7 L333.2,176.7 L336.2,174.9 L335.8,172.0 L338.3,169.8 L337.3,167.1 L339.2,164.6 L337.6,162.2 L338.8,159.5 L336.5,157.4 L337.1,154.7 L334.4,152.9 L334.5,150.0 L331.5,148.6 L331.1,145.6 L327.9,144.5 L326.9,141.6 L323.6,141.0 L322.3,138.0 L319.0,137.9 L317.2,135.0 L314.1,135.3 L312.0,132.6 L309.2,133.3 L306.9,130.9 L304.4,131.8 L302.0,129.7 L300.0,131.0 L297.6,129.2 L296.0,130.8 L294.3,130.9 L292.9,131.1 L291.9,131.3Z" fill="url(#lgb00)"/><path d="M143.8,250.8 L144.1,250.1 L144.3,249.0 L144.5,247.8 L144.5,246.3 L145.9,245.3 L144.2,243.1 L145.4,241.6 L143.3,239.3 L144.3,237.5 L142.0,235.3 L142.7,233.1 L140.1,231.1 L140.5,228.7 L137.7,226.9 L137.8,224.2 L134.8,222.9 L134.5,220.0 L131.6,219.2 L130.8,216.3 L127.9,215.9 L126.8,213.0 L124.0,213.1 L122.5,210.4 L119.9,210.9 L117.9,208.6 L115.5,209.7 L113.2,207.8 L111.0,209.3 L108.5,208.0 L106.6,209.9 L103.9,209.0 L102.3,211.3 L99.5,210.9 L98.4,213.4 L95.6,213.4 L94.9,216.0 L92.2,216.4 L92.0,219.0 L90.9,220.5 L90.0,222.0 L90.0,222.0 L89.3,223.5 L87.1,224.8 L88.1,227.4 L86.1,229.1 L87.5,231.6 L85.9,233.7 L87.6,236.0 L86.3,238.4 L88.4,240.4 L87.6,243.0 L90.0,244.6 L89.7,247.2 L92.4,248.4 L92.6,251.0 L95.5,251.6 L96.2,254.2 L99.3,254.2 L100.5,256.6 L103.6,256.2 L105.3,258.5 L108.2,257.6 L110.4,259.7 L113.1,258.6 L115.7,260.4 L118.1,259.0 L120.9,260.5 L123.0,258.8 L126.0,260.1 L127.7,258.3 L130.8,259.2 L132.0,257.4 L135.1,258.0 L135.8,256.1 L138.8,256.5 L139.1,254.7 L141.8,254.8 L141.6,253.1 L142.6,252.2 L143.3,251.5 L143.8,250.8Z" fill="url(#lgb00)"/><path d="M144.7,254.2 L143.9,253.8 L142.7,253.4 L141.3,253.1 L139.7,252.9 L138.4,251.4 L136.0,252.9 L134.3,251.5 L131.8,253.4 L129.7,252.2 L127.3,254.4 L124.9,253.5 L122.7,255.9 L119.9,255.3 L118.0,257.9 L115.1,257.7 L113.6,260.5 L110.5,260.6 L109.5,263.5 L106.4,264.1 L105.9,266.9 L102.9,267.9 L102.8,270.7 L100.1,272.1 L100.5,274.7 L98.2,276.5 L99.3,279.1 L97.4,281.3 L99.1,283.7 L97.8,286.2 L99.9,288.4 L99.1,291.2 L101.5,293.0 L101.2,295.9 L104.0,297.3 L104.2,300.3 L107.1,301.2 L107.6,304.1 L110.5,304.5 L112.3,305.9 L114.0,307.0 L114.0,307.0 L115.8,307.9 L117.3,310.3 L120.1,309.6 L122.1,311.8 L124.9,310.6 L127.3,312.5 L129.9,311.0 L132.6,312.5 L134.8,310.6 L137.7,311.6 L139.4,309.4 L142.4,309.9 L143.6,307.4 L146.5,307.3 L147.2,304.5 L149.9,303.9 L150.0,300.8 L152.4,299.6 L152.1,296.6 L154.3,294.9 L153.6,291.9 L155.6,289.8 L154.4,286.9 L156.3,284.4 L154.7,281.8 L156.2,279.0 L154.5,276.7 L155.6,273.7 L153.7,271.8 L154.5,268.6 L152.5,267.2 L153.1,264.0 L151.0,263.0 L151.3,260.0 L149.2,259.5 L149.3,256.7 L147.3,256.7 L146.4,255.6 L145.5,254.7 L144.7,254.2Z" fill="url(#lgb00)"/><path d="M148.1,253.4 L147.6,254.2 L147.1,255.3 L146.7,256.6 L146.3,258.1 L144.5,259.1 L145.8,261.5 L144.1,263.0 L145.6,265.3 L144.1,267.2 L145.8,269.4 L144.5,271.7 L146.5,273.7 L145.4,276.3 L147.5,278.0 L146.8,280.8 L149.1,282.1 L148.7,285.0 L151.1,285.9 L151.1,288.8 L153.5,289.2 L153.9,292.0 L156.3,292.0 L157.1,294.6 L159.5,294.2 L160.7,296.4 L163.1,295.4 L164.7,297.1 L167.0,295.6 L168.9,296.9 L171.1,294.9 L173.4,295.8 L175.3,293.4 L177.8,293.9 L179.3,291.1 L182.0,291.2 L183.1,288.3 L185.8,288.0 L186.4,285.2 L187.8,283.5 L189.0,282.0 L189.0,282.0 L190.0,280.4 L192.5,279.1 L192.1,276.4 L194.5,274.6 L193.6,272.0 L195.8,269.8 L194.7,267.5 L196.5,264.9 L195.0,262.9 L196.4,260.2 L194.6,258.7 L195.5,255.9 L193.5,254.8 L193.9,252.1 L191.5,251.5 L191.4,249.0 L188.8,248.9 L188.1,246.6 L185.4,247.0 L184.3,244.8 L181.6,245.6 L180.1,243.6 L177.5,244.7 L175.6,242.9 L173.1,244.4 L170.9,242.9 L168.7,244.6 L166.3,243.4 L164.4,245.3 L161.7,244.3 L160.3,246.4 L157.6,245.6 L156.5,247.7 L153.8,247.2 L153.2,249.3 L150.7,249.0 L150.5,251.1 L149.5,251.9 L148.6,252.8 L148.1,253.4Z" fill="url(#lgb00)"/><path d="M208,181 L224,178 L238,182 L250,188 L256,194 L244,196 L230,193 L216,191 Z" fill="#1010d0"/><path d="M224,191 L234,205" stroke="#1010d0" stroke-width="2.5"/><path d="M194,179 L198,175 L197,169 L203,172 L208,167 L210,173 L216,173 L213,179 L217,184 L210,186 L209,192 L204,188 L198,191 L198,184 Z" fill="#1010d0"/><circle cx="204" cy="179" r="5" fill="#1818e0"/><path d="M256,173 Q262,163 270,169 Q272,181 262,185 Q254,181 256,173Z" fill="#1010d0"/><path d="M240,147 L246,159" stroke="#1010d0" stroke-width="4"/></g></svg>
<div style="left:1901px;top:148px;width:81px;height:13px;background:#00f8ff"></div>
<div class="t" style="left:1841.5px;width:200px;text-align:center;top:152.2px;font-size:6.8px;line-height:6.8px;color:#223;">Fo</div>
<div style="left:1983px;top:83px;width:81px;height:65px;background:#000"></div>
<svg style="left:1983px;top:83px" width="81" height="65"><defs><radialGradient id="lgb01" cx="0.5" cy="0.5" r="0.6"><stop offset="0" stop-color="#2020ff"/><stop offset="1" stop-color="#0a0ac8"/></radialGradient></defs><g transform="scale(0.195)"><path d="M153,119 Q172,154 204,179" fill="none" stroke="#0a0ab0" stroke-width="3"/><path d="M213,137 Q208,157 204,179" fill="none" stroke="#0a0ab0" stroke-width="3"/><path d="M291,129 Q243,165 204,179" fill="none" stroke="#0a0ab0" stroke-width="3"/><path d="M146,252 Q175,222 204,179" fill="none" stroke="#0a0ab0" stroke-width="3"/><path d="M151.2,117.2 L151.8,116.4 L152.5,115.2 L153.1,113.7 L153.6,112.0 L155.3,110.9 L154.2,107.7 L155.7,106.1 L154.3,102.7 L155.6,100.6 L153.8,97.0 L154.9,94.5 L152.7,90.9 L153.5,88.0 L151.0,84.6 L151.5,81.3 L148.6,78.2 L148.7,74.6 L145.5,72.0 L145.2,68.2 L141.9,66.2 L141.0,62.4 L137.7,60.9 L136.4,57.1 L133.1,56.2 L131.2,52.8 L127.9,52.6 L125.4,49.7 L122.2,50.1 L119.3,47.7 L116.3,48.8 L113.1,46.9 L110.4,48.5 L107.0,47.2 L104.6,49.2 L101.2,48.4 L99.3,50.8 L95.9,50.6 L94.6,53.2 L92.6,54.6 L91.0,56.0 L91.0,56.0 L89.6,57.6 L86.9,58.6 L86.8,61.8 L84.3,63.4 L84.7,66.8 L82.5,68.9 L83.4,72.3 L81.6,74.9 L83.1,78.2 L81.8,81.1 L83.9,84.2 L83.0,87.3 L85.7,90.0 L85.5,93.3 L88.6,95.5 L89.1,98.8 L92.7,100.5 L93.9,103.8 L97.7,105.0 L99.4,108.3 L103.2,109.0 L105.5,112.3 L109.2,112.4 L112.0,115.5 L115.4,115.3 L118.6,118.0 L121.8,117.4 L125.2,119.8 L128.0,119.0 L131.6,121.0 L133.9,119.8 L137.4,121.5 L139.3,120.1 L142.6,121.4 L143.9,119.8 L146.9,120.7 L147.7,119.0 L149.3,118.4 L150.5,117.8 L151.2,117.2Z" fill="url(#lgb01)"/><path d="M154.7,117.1 L155.3,117.6 L156.4,118.2 L157.6,118.7 L159.1,119.1 L159.9,120.9 L162.5,119.8 L163.7,121.4 L166.4,120.1 L168.1,121.6 L170.8,119.9 L172.9,121.2 L175.4,119.3 L177.8,120.4 L180.1,118.2 L182.8,119.0 L184.7,116.6 L187.7,117.0 L189.1,114.5 L192.2,114.5 L193.2,111.9 L196.2,111.5 L196.8,108.9 L199.7,108.1 L199.7,105.5 L202.4,104.2 L201.8,101.6 L204.0,99.9 L202.9,97.3 L204.8,95.2 L203.2,92.8 L204.6,90.4 L202.6,88.2 L203.5,85.6 L201.2,83.8 L201.7,80.9 L199.2,79.6 L199.3,76.7 L196.7,75.9 L195.3,74.3 L194.0,73.0 L194.0,73.0 L192.6,71.8 L191.7,69.3 L188.9,69.6 L187.5,67.1 L184.7,67.7 L182.9,65.5 L180.2,66.5 L178.0,64.6 L175.6,66.1 L173.1,64.5 L171.0,66.4 L168.4,65.4 L166.7,67.6 L164.0,67.1 L162.8,69.7 L160.2,69.7 L159.5,72.6 L156.9,73.2 L156.7,76.3 L154.2,77.3 L154.4,80.4 L151.9,81.9 L152.5,84.9 L150.2,86.8 L151.2,89.6 L149.1,91.9 L150.4,94.4 L148.6,97.0 L150.1,99.2 L148.6,101.9 L150.2,103.7 L149.0,106.5 L150.7,107.8 L149.8,110.6 L151.6,111.4 L150.9,114.0 L152.8,114.4 L153.4,115.6 L154.1,116.5 L154.7,117.1Z" fill="url(#lgb01)"/><path d="M151.9,121.2 L150.9,120.9 L149.5,120.5 L147.9,120.3 L146.0,120.1 L144.4,118.6 L141.8,120.3 L139.8,119.0 L137.2,121.1 L134.7,120.1 L132.1,122.4 L129.3,121.7 L127.0,124.3 L123.8,124.0 L121.9,126.9 L118.6,126.9 L117.0,129.9 L113.6,130.5 L112.6,133.5 L109.3,134.5 L108.7,137.5 L105.7,138.9 L105.6,141.9 L102.8,143.7 L103.3,146.6 L101.0,148.8 L102.2,151.6 L100.5,154.1 L102.3,156.7 L101.2,159.6 L103.5,161.9 L103.0,165.0 L105.8,167.0 L105.8,170.1 L108.9,171.7 L109.5,174.9 L112.7,175.9 L113.7,179.0 L116.9,179.4 L119.0,180.9 L121.0,182.0 L121.0,182.0 L123.1,182.9 L125.0,185.3 L128.1,184.6 L130.6,186.7 L133.6,185.5 L136.5,187.3 L139.3,185.7 L142.5,187.0 L144.8,185.0 L148.1,185.7 L150.0,183.3 L153.3,183.6 L154.7,180.8 L157.8,180.5 L158.5,177.5 L161.3,176.4 L161.4,173.2 L163.8,171.6 L163.4,168.3 L165.6,166.3 L164.7,163.0 L166.7,160.5 L165.4,157.4 L167.0,154.5 L165.3,151.7 L166.6,148.5 L164.6,146.0 L165.5,142.6 L163.4,140.5 L163.9,137.0 L161.7,135.4 L161.9,132.0 L159.6,130.8 L159.6,127.6 L157.4,126.9 L157.1,124.0 L155.0,123.9 L153.8,122.7 L152.7,121.8 L151.9,121.2Z" fill="url(#lgb01)"/><path d="M213.4,134.5 L213.9,134.6 L214.6,134.5 L215.4,134.3 L216.3,134.0 L217.2,135.1 L218.2,133.0 L219.3,133.9 L220.2,131.6 L221.6,132.3 L222.4,129.7 L224.0,130.2 L224.6,127.5 L226.4,127.6 L226.7,124.9 L228.7,124.8 L228.6,122.1 L230.7,121.6 L230.2,119.0 L232.4,118.1 L231.6,115.8 L233.7,114.5 L232.5,112.6 L234.5,110.9 L233.1,109.3 L234.7,107.4 L233.0,106.1 L234.3,103.9 L232.4,103.1 L233.2,100.7 L231.3,100.3 L231.7,97.9 L229.7,97.7 L229.7,95.3 L227.7,95.6 L227.4,93.3 L225.5,93.9 L224.9,91.7 L223.2,92.7 L222.0,92.3 L221.0,92.0 L221.0,92.0 L219.9,91.9 L218.8,90.3 L217.4,92.0 L216.0,90.6 L214.8,92.6 L213.1,91.5 L212.1,93.7 L210.3,92.9 L209.7,95.2 L207.7,94.8 L207.4,97.3 L205.4,97.3 L205.6,99.7 L203.6,100.1 L204.2,102.6 L202.3,103.4 L203.3,105.7 L201.5,106.9 L202.9,109.0 L201.3,110.7 L202.9,112.4 L201.5,114.5 L203.2,115.9 L202.1,118.3 L203.9,119.3 L203.0,121.9 L204.8,122.5 L204.3,125.2 L206.0,125.5 L205.8,128.2 L207.4,128.2 L207.3,130.8 L208.8,130.5 L208.9,132.9 L210.3,132.3 L210.5,134.6 L211.7,133.6 L212.4,134.1 L213.0,134.4 L213.4,134.5Z" fill="url(#lgb01)"/><path d="M289.9,126.7 L290.7,126.2 L291.8,125.4 L292.8,124.3 L293.9,123.0 L295.9,122.8 L296.0,119.8 L298.1,119.0 L298.0,115.8 L300.1,114.5 L299.7,111.1 L301.8,109.4 L301.0,106.0 L303.0,103.9 L301.9,100.6 L303.7,98.1 L302.2,95.0 L303.8,92.1 L301.9,89.4 L303.1,86.3 L301.0,83.9 L301.7,80.7 L299.4,78.8 L299.7,75.5 L297.1,74.1 L296.8,70.9 L294.0,70.1 L293.1,67.1 L290.0,66.9 L288.5,64.2 L285.5,64.6 L283.5,62.2 L280.5,63.1 L278.1,61.1 L275.3,62.4 L272.6,60.8 L270.1,62.6 L267.2,61.4 L265.1,63.5 L262.9,64.2 L261.0,65.0 L261.0,65.0 L259.2,66.0 L256.3,65.9 L255.3,68.7 L252.3,69.3 L251.6,72.3 L248.6,73.3 L248.4,76.5 L245.6,78.0 L245.9,81.1 L243.5,83.0 L244.3,86.0 L242.3,88.3 L243.7,91.1 L242.2,93.7 L244.2,96.1 L243.3,98.9 L245.8,101.0 L245.5,103.9 L248.4,105.6 L248.6,108.7 L251.7,110.0 L252.4,113.1 L255.5,114.0 L256.7,117.2 L259.9,117.6 L261.5,120.7 L264.5,120.7 L266.5,123.6 L269.3,123.2 L271.6,125.9 L274.1,125.2 L276.5,127.5 L278.6,126.5 L281.0,128.5 L282.7,127.3 L285.0,129.0 L286.3,127.4 L287.8,127.3 L289.1,127.0 L289.9,126.7Z" fill="url(#lgb01)"/><path d="M293.4,128.3 L293.8,129.2 L294.4,130.3 L295.3,131.5 L296.5,132.7 L296.4,134.6 L299.5,135.2 L299.9,137.3 L303.3,137.6 L304.2,139.8 L307.8,139.9 L309.2,142.1 L312.9,141.9 L314.8,144.1 L318.5,143.5 L320.8,145.6 L324.3,144.6 L327.0,146.5 L330.3,145.1 L333.4,146.7 L336.3,144.9 L339.6,146.1 L342.1,144.1 L345.5,144.9 L347.5,142.6 L351.0,142.8 L352.4,140.1 L355.8,139.6 L356.7,136.7 L359.8,135.7 L360.1,132.7 L363.0,131.0 L362.8,128.0 L365.4,126.0 L364.6,123.1 L366.8,120.7 L365.6,118.1 L367.3,115.5 L365.7,113.2 L365.4,110.9 L365.0,109.0 L365.0,109.0 L364.4,107.1 L364.9,104.4 L362.3,102.9 L362.3,100.1 L359.3,98.9 L358.8,96.0 L355.6,95.2 L354.6,92.4 L351.3,92.2 L349.7,89.6 L346.4,90.0 L344.4,87.7 L341.2,88.7 L338.8,86.9 L335.7,88.5 L333.0,87.2 L330.3,89.4 L327.2,88.7 L324.8,91.2 L321.5,90.9 L319.5,93.8 L315.9,94.0 L314.4,96.9 L310.8,97.6 L309.6,100.6 L306.1,101.8 L305.4,104.7 L301.9,106.2 L301.6,108.9 L298.4,110.8 L298.5,113.2 L295.6,115.2 L296.1,117.4 L293.6,119.5 L294.4,121.3 L292.3,123.3 L293.5,124.7 L293.3,126.2 L293.3,127.4 L293.4,128.3Z" fill="url(#lgb01)"/><path d="M291.9,131.3 L290.9,131.8 L289.6,132.6 L288.3,133.6 L286.9,134.9 L284.6,135.0 L284.0,138.0 L281.5,138.6 L281.2,141.8 L278.6,142.9 L278.6,146.3 L276.0,147.9 L276.3,151.2 L273.8,153.2 L274.4,156.5 L272.2,158.9 L273.2,161.9 L271.2,164.6 L272.6,167.4 L271.1,170.3 L272.8,172.7 L271.7,175.7 L273.8,177.7 L273.1,180.8 L275.5,182.3 L275.5,185.3 L278.3,186.3 L279.0,189.1 L282.2,189.4 L283.5,192.0 L286.9,191.8 L288.7,194.1 L292.2,193.4 L294.5,195.4 L297.8,194.2 L300.5,195.8 L303.6,194.1 L306.6,195.4 L309.2,193.3 L311.8,192.7 L314.0,192.0 L314.0,192.0 L316.2,191.1 L319.3,191.3 L321.0,188.5 L324.4,188.1 L325.6,185.1 L329.0,184.2 L329.8,181.2 L333.0,179.7 L333.2,176.7 L336.2,174.9 L335.8,172.0 L338.3,169.8 L337.3,167.1 L339.2,164.6 L337.6,162.2 L338.8,159.5 L336.5,157.4 L337.1,154.7 L334.4,152.9 L334.5,150.0 L331.5,148.6 L331.1,145.6 L327.9,144.5 L326.9,141.6 L323.6,141.0 L322.3,138.0 L319.0,137.9 L317.2,135.0 L314.1,135.3 L312.0,132.6 L309.2,133.3 L306.9,130.9 L304.4,131.8 L302.0,129.7 L300.0,131.0 L297.6,129.2 L296.0,130.8 L294.3,130.9 L292.9,131.1 L291.9,131.3Z" fill="url(#lgb01)"/><path d="M143.8,250.8 L144.1,250.1 L144.3,249.0 L144.5,247.8 L144.5,246.3 L145.9,245.3 L144.2,243.1 L145.4,241.6 L143.3,239.3 L144.3,237.5 L142.0,235.3 L142.7,233.1 L140.1,231.1 L140.5,228.7 L137.7,226.9 L137.8,224.2 L134.8,222.9 L134.5,220.0 L131.6,219.2 L130.8,216.3 L127.9,215.9 L126.8,213.0 L124.0,213.1 L122.5,210.4 L119.9,210.9 L117.9,208.6 L115.5,209.7 L113.2,207.8 L111.0,209.3 L108.5,208.0 L106.6,209.9 L103.9,209.0 L102.3,211.3 L99.5,210.9 L98.4,213.4 L95.6,213.4 L94.9,216.0 L92.2,216.4 L92.0,219.0 L90.9,220.5 L90.0,222.0 L90.0,222.0 L89.3,223.5 L87.1,224.8 L88.1,227.4 L86.1,229.1 L87.5,231.6 L85.9,233.7 L87.6,236.0 L86.3,238.4 L88.4,240.4 L87.6,243.0 L90.0,244.6 L89.7,247.2 L92.4,248.4 L92.6,251.0 L95.5,251.6 L96.2,254.2 L99.3,254.2 L100.5,256.6 L103.6,256.2 L105.3,258.5 L108.2,257.6 L110.4,259.7 L113.1,258.6 L115.7,260.4 L118.1,259.0 L120.9,260.5 L123.0,258.8 L126.0,260.1 L127.7,258.3 L130.8,259.2 L132.0,257.4 L135.1,258.0 L135.8,256.1 L138.8,256.5 L139.1,254.7 L141.8,254.8 L141.6,253.1 L142.6,252.2 L143.3,251.5 L143.8,250.8Z" fill="url(#lgb01)"/><path d="M144.7,254.2 L143.9,253.8 L142.7,253.4 L141.3,253.1 L139.7,252.9 L138.4,251.4 L136.0,252.9 L134.3,251.5 L131.8,253.4 L129.7,252.2 L127.3,254.4 L124.9,253.5 L122.7,255.9 L119.9,255.3 L118.0,257.9 L115.1,257.7 L113.6,260.5 L110.5,260.6 L109.5,263.5 L106.4,264.1 L105.9,266.9 L102.9,267.9 L102.8,270.7 L100.1,272.1 L100.5,274.7 L98.2,276.5 L99.3,279.1 L97.4,281.3 L99.1,283.7 L97.8,286.2 L99.9,288.4 L99.1,291.2 L101.5,293.0 L101.2,295.9 L104.0,297.3 L104.2,300.3 L107.1,301.2 L107.6,304.1 L110.5,304.5 L112.3,305.9 L114.0,307.0 L114.0,307.0 L115.8,307.9 L117.3,310.3 L120.1,309.6 L122.1,311.8 L124.9,310.6 L127.3,312.5 L129.9,311.0 L132.6,312.5 L134.8,310.6 L137.7,311.6 L139.4,309.4 L142.4,309.9 L143.6,307.4 L146.5,307.3 L147.2,304.5 L149.9,303.9 L150.0,300.8 L152.4,299.6 L152.1,296.6 L154.3,294.9 L153.6,291.9 L155.6,289.8 L154.4,286.9 L156.3,284.4 L154.7,281.8 L156.2,279.0 L154.5,276.7 L155.6,273.7 L153.7,271.8 L154.5,268.6 L152.5,267.2 L153.1,264.0 L151.0,263.0 L151.3,260.0 L149.2,259.5 L149.3,256.7 L147.3,256.7 L146.4,255.6 L145.5,254.7 L144.7,254.2Z" fill="url(#lgb01)"/><path d="M148.1,253.4 L147.6,254.2 L147.1,255.3 L146.7,256.6 L146.3,258.1 L144.5,259.1 L145.8,261.5 L144.1,263.0 L145.6,265.3 L144.1,267.2 L145.8,269.4 L144.5,271.7 L146.5,273.7 L145.4,276.3 L147.5,278.0 L146.8,280.8 L149.1,282.1 L148.7,285.0 L151.1,285.9 L151.1,288.8 L153.5,289.2 L153.9,292.0 L156.3,292.0 L157.1,294.6 L159.5,294.2 L160.7,296.4 L163.1,295.4 L164.7,297.1 L167.0,295.6 L168.9,296.9 L171.1,294.9 L173.4,295.8 L175.3,293.4 L177.8,293.9 L179.3,291.1 L182.0,291.2 L183.1,288.3 L185.8,288.0 L186.4,285.2 L187.8,283.5 L189.0,282.0 L189.0,282.0 L190.0,280.4 L192.5,279.1 L192.1,276.4 L194.5,274.6 L193.6,272.0 L195.8,269.8 L194.7,267.5 L196.5,264.9 L195.0,262.9 L196.4,260.2 L194.6,258.7 L195.5,255.9 L193.5,254.8 L193.9,252.1 L191.5,251.5 L191.4,249.0 L188.8,248.9 L188.1,246.6 L185.4,247.0 L184.3,244.8 L181.6,245.6 L180.1,243.6 L177.5,244.7 L175.6,242.9 L173.1,244.4 L170.9,242.9 L168.7,244.6 L166.3,243.4 L164.4,245.3 L161.7,244.3 L160.3,246.4 L157.6,245.6 L156.5,247.7 L153.8,247.2 L153.2,249.3 L150.7,249.0 L150.5,251.1 L149.5,251.9 L148.6,252.8 L148.1,253.4Z" fill="url(#lgb01)"/><path d="M208,181 L224,178 L238,182 L250,188 L256,194 L244,196 L230,193 L216,191 Z" fill="#1010d0"/><path d="M224,191 L234,205" stroke="#1010d0" stroke-width="2.5"/><path d="M194,179 L198,175 L197,169 L203,172 L208,167 L210,173 L216,173 L213,179 L217,184 L210,186 L209,192 L204,188 L198,191 L198,184 Z" fill="#1010d0"/><circle cx="204" cy="179" r="5" fill="#1818e0"/><path d="M256,173 Q262,163 270,169 Q272,181 262,185 Q254,181 256,173Z" fill="#1010d0"/><path d="M240,147 L246,159" stroke="#1010d0" stroke-width="4"/></g></svg>
<div style="left:1983px;top:148px;width:81px;height:13px;background:#00f8ff"></div>
<div class="t" style="left:1923.5px;width:200px;text-align:center;top:152.2px;font-size:6.8px;line-height:6.8px;color:#223;">Fo_gauss</div>
<div style="left:2065px;top:83px;width:81px;height:65px;background:#000"></div>
<svg style="left:2065px;top:83px" width="81" height="65"><defs><radialGradient id="lgb02" cx="0.5" cy="0.5" r="0.6"><stop offset="0" stop-color="#2020ff"/><stop offset="1" stop-color="#0a0ac8"/></radialGradient></defs><g transform="scale(0.195)"><path d="M153,119 Q172,154 204,179" fill="none" stroke="#0a0ab0" stroke-width="3"/><path d="M213,137 Q208,157 204,179" fill="none" stroke="#0a0ab0" stroke-width="3"/><path d="M291,129 Q243,165 204,179" fill="none" stroke="#0a0ab0" stroke-width="3"/><path d="M146,252 Q175,222 204,179" fill="none" stroke="#0a0ab0" stroke-width="3"/><path d="M151.2,117.2 L151.8,116.4 L152.5,115.2 L153.1,113.7 L153.6,112.0 L155.3,110.9 L154.2,107.7 L155.7,106.1 L154.3,102.7 L155.6,100.6 L153.8,97.0 L154.9,94.5 L152.7,90.9 L153.5,88.0 L151.0,84.6 L151.5,81.3 L148.6,78.2 L148.7,74.6 L145.5,72.0 L145.2,68.2 L141.9,66.2 L141.0,62.4 L137.7,60.9 L136.4,57.1 L133.1,56.2 L131.2,52.8 L127.9,52.6 L125.4,49.7 L122.2,50.1 L119.3,47.7 L116.3,48.8 L113.1,46.9 L110.4,48.5 L107.0,47.2 L104.6,49.2 L101.2,48.4 L99.3,50.8 L95.9,50.6 L94.6,53.2 L92.6,54.6 L91.0,56.0 L91.0,56.0 L89.6,57.6 L86.9,58.6 L86.8,61.8 L84.3,63.4 L84.7,66.8 L82.5,68.9 L83.4,72.3 L81.6,74.9 L83.1,78.2 L81.8,81.1 L83.9,84.2 L83.0,87.3 L85.7,90.0 L85.5,93.3 L88.6,95.5 L89.1,98.8 L92.7,100.5 L93.9,103.8 L97.7,105.0 L99.4,108.3 L103.2,109.0 L105.5,112.3 L109.2,112.4 L112.0,115.5 L115.4,115.3 L118.6,118.0 L121.8,117.4 L125.2,119.8 L128.0,119.0 L131.6,121.0 L133.9,119.8 L137.4,121.5 L139.3,120.1 L142.6,121.4 L143.9,119.8 L146.9,120.7 L147.7,119.0 L149.3,118.4 L150.5,117.8 L151.2,117.2Z" fill="url(#lgb02)"/><path d="M154.7,117.1 L155.3,117.6 L156.4,118.2 L157.6,118.7 L159.1,119.1 L159.9,120.9 L162.5,119.8 L163.7,121.4 L166.4,120.1 L168.1,121.6 L170.8,119.9 L172.9,121.2 L175.4,119.3 L177.8,120.4 L180.1,118.2 L182.8,119.0 L184.7,116.6 L187.7,117.0 L189.1,114.5 L192.2,114.5 L193.2,111.9 L196.2,111.5 L196.8,108.9 L199.7,108.1 L199.7,105.5 L202.4,104.2 L201.8,101.6 L204.0,99.9 L202.9,97.3 L204.8,95.2 L203.2,92.8 L204.6,90.4 L202.6,88.2 L203.5,85.6 L201.2,83.8 L201.7,80.9 L199.2,79.6 L199.3,76.7 L196.7,75.9 L195.3,74.3 L194.0,73.0 L194.0,73.0 L192.6,71.8 L191.7,69.3 L188.9,69.6 L187.5,67.1 L184.7,67.7 L182.9,65.5 L180.2,66.5 L178.0,64.6 L175.6,66.1 L173.1,64.5 L171.0,66.4 L168.4,65.4 L166.7,67.6 L164.0,67.1 L162.8,69.7 L160.2,69.7 L159.5,72.6 L156.9,73.2 L156.7,76.3 L154.2,77.3 L154.4,80.4 L151.9,81.9 L152.5,84.9 L150.2,86.8 L151.2,89.6 L149.1,91.9 L150.4,94.4 L148.6,97.0 L150.1,99.2 L148.6,101.9 L150.2,103.7 L149.0,106.5 L150.7,107.8 L149.8,110.6 L151.6,111.4 L150.9,114.0 L152.8,114.4 L153.4,115.6 L154.1,116.5 L154.7,117.1Z" fill="url(#lgb02)"/><path d="M151.9,121.2 L150.9,120.9 L149.5,120.5 L147.9,120.3 L146.0,120.1 L144.4,118.6 L141.8,120.3 L139.8,119.0 L137.2,121.1 L134.7,120.1 L132.1,122.4 L129.3,121.7 L127.0,124.3 L123.8,124.0 L121.9,126.9 L118.6,126.9 L117.0,129.9 L113.6,130.5 L112.6,133.5 L109.3,134.5 L108.7,137.5 L105.7,138.9 L105.6,141.9 L102.8,143.7 L103.3,146.6 L101.0,148.8 L102.2,151.6 L100.5,154.1 L102.3,156.7 L101.2,159.6 L103.5,161.9 L103.0,165.0 L105.8,167.0 L105.8,170.1 L108.9,171.7 L109.5,174.9 L112.7,175.9 L113.7,179.0 L116.9,179.4 L119.0,180.9 L121.0,182.0 L121.0,182.0 L123.1,182.9 L125.0,185.3 L128.1,184.6 L130.6,186.7 L133.6,185.5 L136.5,187.3 L139.3,185.7 L142.5,187.0 L144.8,185.0 L148.1,185.7 L150.0,183.3 L153.3,183.6 L154.7,180.8 L157.8,180.5 L158.5,177.5 L161.3,176.4 L161.4,173.2 L163.8,171.6 L163.4,168.3 L165.6,166.3 L164.7,163.0 L166.7,160.5 L165.4,157.4 L167.0,154.5 L165.3,151.7 L166.6,148.5 L164.6,146.0 L165.5,142.6 L163.4,140.5 L163.9,137.0 L161.7,135.4 L161.9,132.0 L159.6,130.8 L159.6,127.6 L157.4,126.9 L157.1,124.0 L155.0,123.9 L153.8,122.7 L152.7,121.8 L151.9,121.2Z" fill="url(#lgb02)"/><path d="M213.4,134.5 L213.9,134.6 L214.6,134.5 L215.4,134.3 L216.3,134.0 L217.2,135.1 L218.2,133.0 L219.3,133.9 L220.2,131.6 L221.6,132.3 L222.4,129.7 L224.0,130.2 L224.6,127.5 L226.4,127.6 L226.7,124.9 L228.7,124.8 L228.6,122.1 L230.7,121.6 L230.2,119.0 L232.4,118.1 L231.6,115.8 L233.7,114.5 L232.5,112.6 L234.5,110.9 L233.1,109.3 L234.7,107.4 L233.0,106.1 L234.3,103.9 L232.4,103.1 L233.2,100.7 L231.3,100.3 L231.7,97.9 L229.7,97.7 L229.7,95.3 L227.7,95.6 L227.4,93.3 L225.5,93.9 L224.9,91.7 L223.2,92.7 L222.0,92.3 L221.0,92.0 L221.0,92.0 L219.9,91.9 L218.8,90.3 L217.4,92.0 L216.0,90.6 L214.8,92.6 L213.1,91.5 L212.1,93.7 L210.3,92.9 L209.7,95.2 L207.7,94.8 L207.4,97.3 L205.4,97.3 L205.6,99.7 L203.6,100.1 L204.2,102.6 L202.3,103.4 L203.3,105.7 L201.5,106.9 L202.9,109.0 L201.3,110.7 L202.9,112.4 L201.5,114.5 L203.2,115.9 L202.1,118.3 L203.9,119.3 L203.0,121.9 L204.8,122.5 L204.3,125.2 L206.0,125.5 L205.8,128.2 L207.4,128.2 L207.3,130.8 L208.8,130.5 L208.9,132.9 L210.3,132.3 L210.5,134.6 L211.7,133.6 L212.4,134.1 L213.0,134.4 L213.4,134.5Z" fill="url(#lgb02)"/><path d="M289.9,126.7 L290.7,126.2 L291.8,125.4 L292.8,124.3 L293.9,123.0 L295.9,122.8 L296.0,119.8 L298.1,119.0 L298.0,115.8 L300.1,114.5 L299.7,111.1 L301.8,109.4 L301.0,106.0 L303.0,103.9 L301.9,100.6 L303.7,98.1 L302.2,95.0 L303.8,92.1 L301.9,89.4 L303.1,86.3 L301.0,83.9 L301.7,80.7 L299.4,78.8 L299.7,75.5 L297.1,74.1 L296.8,70.9 L294.0,70.1 L293.1,67.1 L290.0,66.9 L288.5,64.2 L285.5,64.6 L283.5,62.2 L280.5,63.1 L278.1,61.1 L275.3,62.4 L272.6,60.8 L270.1,62.6 L267.2,61.4 L265.1,63.5 L262.9,64.2 L261.0,65.0 L261.0,65.0 L259.2,66.0 L256.3,65.9 L255.3,68.7 L252.3,69.3 L251.6,72.3 L248.6,73.3 L248.4,76.5 L245.6,78.0 L245.9,81.1 L243.5,83.0 L244.3,86.0 L242.3,88.3 L243.7,91.1 L242.2,93.7 L244.2,96.1 L243.3,98.9 L245.8,101.0 L245.5,103.9 L248.4,105.6 L248.6,108.7 L251.7,110.0 L252.4,113.1 L255.5,114.0 L256.7,117.2 L259.9,117.6 L261.5,120.7 L264.5,120.7 L266.5,123.6 L269.3,123.2 L271.6,125.9 L274.1,125.2 L276.5,127.5 L278.6,126.5 L281.0,128.5 L282.7,127.3 L285.0,129.0 L286.3,127.4 L287.8,127.3 L289.1,127.0 L289.9,126.7Z" fill="url(#lgb02)"/><path d="M293.4,128.3 L293.8,129.2 L294.4,130.3 L295.3,131.5 L296.5,132.7 L296.4,134.6 L299.5,135.2 L299.9,137.3 L303.3,137.6 L304.2,139.8 L307.8,139.9 L309.2,142.1 L312.9,141.9 L314.8,144.1 L318.5,143.5 L320.8,145.6 L324.3,144.6 L327.0,146.5 L330.3,145.1 L333.4,146.7 L336.3,144.9 L339.6,146.1 L342.1,144.1 L345.5,144.9 L347.5,142.6 L351.0,142.8 L352.4,140.1 L355.8,139.6 L356.7,136.7 L359.8,135.7 L360.1,132.7 L363.0,131.0 L362.8,128.0 L365.4,126.0 L364.6,123.1 L366.8,120.7 L365.6,118.1 L367.3,115.5 L365.7,113.2 L365.4,110.9 L365.0,109.0 L365.0,109.0 L364.4,107.1 L364.9,104.4 L362.3,102.9 L362.3,100.1 L359.3,98.9 L358.8,96.0 L355.6,95.2 L354.6,92.4 L351.3,92.2 L349.7,89.6 L346.4,90.0 L344.4,87.7 L341.2,88.7 L338.8,86.9 L335.7,88.5 L333.0,87.2 L330.3,89.4 L327.2,88.7 L324.8,91.2 L321.5,90.9 L319.5,93.8 L315.9,94.0 L314.4,96.9 L310.8,97.6 L309.6,100.6 L306.1,101.8 L305.4,104.7 L301.9,106.2 L301.6,108.9 L298.4,110.8 L298.5,113.2 L295.6,115.2 L296.1,117.4 L293.6,119.5 L294.4,121.3 L292.3,123.3 L293.5,124.7 L293.3,126.2 L293.3,127.4 L293.4,128.3Z" fill="url(#lgb02)"/><path d="M291.9,131.3 L290.9,131.8 L289.6,132.6 L288.3,133.6 L286.9,134.9 L284.6,135.0 L284.0,138.0 L281.5,138.6 L281.2,141.8 L278.6,142.9 L278.6,146.3 L276.0,147.9 L276.3,151.2 L273.8,153.2 L274.4,156.5 L272.2,158.9 L273.2,161.9 L271.2,164.6 L272.6,167.4 L271.1,170.3 L272.8,172.7 L271.7,175.7 L273.8,177.7 L273.1,180.8 L275.5,182.3 L275.5,185.3 L278.3,186.3 L279.0,189.1 L282.2,189.4 L283.5,192.0 L286.9,191.8 L288.7,194.1 L292.2,193.4 L294.5,195.4 L297.8,194.2 L300.5,195.8 L303.6,194.1 L306.6,195.4 L309.2,193.3 L311.8,192.7 L314.0,192.0 L314.0,192.0 L316.2,191.1 L319.3,191.3 L321.0,188.5 L324.4,188.1 L325.6,185.1 L329.0,184.2 L329.8,181.2 L333.0,179.7 L333.2,176.7 L336.2,174.9 L335.8,172.0 L338.3,169.8 L337.3,167.1 L339.2,164.6 L337.6,162.2 L338.8,159.5 L336.5,157.4 L337.1,154.7 L334.4,152.9 L334.5,150.0 L331.5,148.6 L331.1,145.6 L327.9,144.5 L326.9,141.6 L323.6,141.0 L322.3,138.0 L319.0,137.9 L317.2,135.0 L314.1,135.3 L312.0,132.6 L309.2,133.3 L306.9,130.9 L304.4,131.8 L302.0,129.7 L300.0,131.0 L297.6,129.2 L296.0,130.8 L294.3,130.9 L292.9,131.1 L291.9,131.3Z" fill="url(#lgb02)"/><path d="M143.8,250.8 L144.1,250.1 L144.3,249.0 L144.5,247.8 L144.5,246.3 L145.9,245.3 L144.2,243.1 L145.4,241.6 L143.3,239.3 L144.3,237.5 L142.0,235.3 L142.7,233.1 L140.1,231.1 L140.5,228.7 L137.7,226.9 L137.8,224.2 L134.8,222.9 L134.5,220.0 L131.6,219.2 L130.8,216.3 L127.9,215.9 L126.8,213.0 L124.0,213.1 L122.5,210.4 L119.9,210.9 L117.9,208.6 L115.5,209.7 L113.2,207.8 L111.0,209.3 L108.5,208.0 L106.6,209.9 L103.9,209.0 L102.3,211.3 L99.5,210.9 L98.4,213.4 L95.6,213.4 L94.9,216.0 L92.2,216.4 L92.0,219.0 L90.9,220.5 L90.0,222.0 L90.0,222.0 L89.3,223.5 L87.1,224.8 L88.1,227.4 L86.1,229.1 L87.5,231.6 L85.9,233.7 L87.6,236.0 L86.3,238.4 L88.4,240.4 L87.6,243.0 L90.0,244.6 L89.7,247.2 L92.4,248.4 L92.6,251.0 L95.5,251.6 L96.2,254.2 L99.3,254.2 L100.5,256.6 L103.6,256.2 L105.3,258.5 L108.2,257.6 L110.4,259.7 L113.1,258.6 L115.7,260.4 L118.1,259.0 L120.9,260.5 L123.0,258.8 L126.0,260.1 L127.7,258.3 L130.8,259.2 L132.0,257.4 L135.1,258.0 L135.8,256.1 L138.8,256.5 L139.1,254.7 L141.8,254.8 L141.6,253.1 L142.6,252.2 L143.3,251.5 L143.8,250.8Z" fill="url(#lgb02)"/><path d="M144.7,254.2 L143.9,253.8 L142.7,253.4 L141.3,253.1 L139.7,252.9 L138.4,251.4 L136.0,252.9 L134.3,251.5 L131.8,253.4 L129.7,252.2 L127.3,254.4 L124.9,253.5 L122.7,255.9 L119.9,255.3 L118.0,257.9 L115.1,257.7 L113.6,260.5 L110.5,260.6 L109.5,263.5 L106.4,264.1 L105.9,266.9 L102.9,267.9 L102.8,270.7 L100.1,272.1 L100.5,274.7 L98.2,276.5 L99.3,279.1 L97.4,281.3 L99.1,283.7 L97.8,286.2 L99.9,288.4 L99.1,291.2 L101.5,293.0 L101.2,295.9 L104.0,297.3 L104.2,300.3 L107.1,301.2 L107.6,304.1 L110.5,304.5 L112.3,305.9 L114.0,307.0 L114.0,307.0 L115.8,307.9 L117.3,310.3 L120.1,309.6 L122.1,311.8 L124.9,310.6 L127.3,312.5 L129.9,311.0 L132.6,312.5 L134.8,310.6 L137.7,311.6 L139.4,309.4 L142.4,309.9 L143.6,307.4 L146.5,307.3 L147.2,304.5 L149.9,303.9 L150.0,300.8 L152.4,299.6 L152.1,296.6 L154.3,294.9 L153.6,291.9 L155.6,289.8 L154.4,286.9 L156.3,284.4 L154.7,281.8 L156.2,279.0 L154.5,276.7 L155.6,273.7 L153.7,271.8 L154.5,268.6 L152.5,267.2 L153.1,264.0 L151.0,263.0 L151.3,260.0 L149.2,259.5 L149.3,256.7 L147.3,256.7 L146.4,255.6 L145.5,254.7 L144.7,254.2Z" fill="url(#lgb02)"/><path d="M148.1,253.4 L147.6,254.2 L147.1,255.3 L146.7,256.6 L146.3,258.1 L144.5,259.1 L145.8,261.5 L144.1,263.0 L145.6,265.3 L144.1,267.2 L145.8,269.4 L144.5,271.7 L146.5,273.7 L145.4,276.3 L147.5,278.0 L146.8,280.8 L149.1,282.1 L148.7,285.0 L151.1,285.9 L151.1,288.8 L153.5,289.2 L153.9,292.0 L156.3,292.0 L157.1,294.6 L159.5,294.2 L160.7,296.4 L163.1,295.4 L164.7,297.1 L167.0,295.6 L168.9,296.9 L171.1,294.9 L173.4,295.8 L175.3,293.4 L177.8,293.9 L179.3,291.1 L182.0,291.2 L183.1,288.3 L185.8,288.0 L186.4,285.2 L187.8,283.5 L189.0,282.0 L189.0,282.0 L190.0,280.4 L192.5,279.1 L192.1,276.4 L194.5,274.6 L193.6,272.0 L195.8,269.8 L194.7,267.5 L196.5,264.9 L195.0,262.9 L196.4,260.2 L194.6,258.7 L195.5,255.9 L193.5,254.8 L193.9,252.1 L191.5,251.5 L191.4,249.0 L188.8,248.9 L188.1,246.6 L185.4,247.0 L184.3,244.8 L181.6,245.6 L180.1,243.6 L177.5,244.7 L175.6,242.9 L173.1,244.4 L170.9,242.9 L168.7,244.6 L166.3,243.4 L164.4,245.3 L161.7,244.3 L160.3,246.4 L157.6,245.6 L156.5,247.7 L153.8,247.2 L153.2,249.3 L150.7,249.0 L150.5,251.1 L149.5,251.9 L148.6,252.8 L148.1,253.4Z" fill="url(#lgb02)"/><path d="M208,181 L224,178 L238,182 L250,188 L256,194 L244,196 L230,193 L216,191 Z" fill="#1010d0"/><path d="M224,191 L234,205" stroke="#1010d0" stroke-width="2.5"/><path d="M194,179 L198,175 L197,169 L203,172 L208,167 L210,173 L216,173 L213,179 L217,184 L210,186 L209,192 L204,188 L198,191 L198,184 Z" fill="#1010d0"/><circle cx="204" cy="179" r="5" fill="#1818e0"/><path d="M256,173 Q262,163 270,169 Q272,181 262,185 Q254,181 256,173Z" fill="#1010d0"/><path d="M240,147 L246,159" stroke="#1010d0" stroke-width="4"/></g></svg>
<div style="left:2065px;top:148px;width:81px;height:13px;background:#00f8ff"></div>
<div class="t" style="left:2005.5px;width:200px;text-align:center;top:152.2px;font-size:6.8px;line-height:6.8px;color:#223;">Fo_median</div>
<div style="left:1901px;top:182px;width:81px;height:65px;background:#000"></div>
<svg style="left:1901px;top:182px" width="81" height="65"><defs><linearGradient id="lg10_0" gradientUnits="userSpaceOnUse" x1="153.0" y1="119.0" x2="91.0" y2="56.0"><stop offset="0" stop-color="#ffa800"/><stop offset="0.55" stop-color="#ffc400"/><stop offset="1" stop-color="#d8e800"/></linearGradient><linearGradient id="lg10_1" gradientUnits="userSpaceOnUse" x1="153.0" y1="119.0" x2="194.0" y2="73.0"><stop offset="0" stop-color="#ffb000"/><stop offset="0.55" stop-color="#ffc800"/><stop offset="1" stop-color="#b0f020"/></linearGradient><linearGradient id="lg10_2" gradientUnits="userSpaceOnUse" x1="153.0" y1="119.0" x2="121.0" y2="182.0"><stop offset="0" stop-color="#ff9c00"/><stop offset="0.55" stop-color="#ffb000"/><stop offset="1" stop-color="#ffc000"/></linearGradient><linearGradient id="lg10_3" gradientUnits="userSpaceOnUse" x1="213.0" y1="137.0" x2="221.0" y2="92.0"><stop offset="0" stop-color="#ffa000"/><stop offset="0.55" stop-color="#ffc000"/><stop offset="1" stop-color="#d8e810"/></linearGradient><linearGradient id="lg10_4" gradientUnits="userSpaceOnUse" x1="291.0" y1="129.0" x2="261.0" y2="65.0"><stop offset="0" stop-color="#ffb000"/><stop offset="0.55" stop-color="#ffc800"/><stop offset="1" stop-color="#e8e800"/></linearGradient><linearGradient id="lg10_5" gradientUnits="userSpaceOnUse" x1="291.0" y1="129.0" x2="365.0" y2="109.0"><stop offset="0" stop-color="#ffb800"/><stop offset="0.55" stop-color="#f0e800"/><stop offset="1" stop-color="#a0f820"/></linearGradient><linearGradient id="lg10_6" gradientUnits="userSpaceOnUse" x1="291.0" y1="129.0" x2="314.0" y2="192.0"><stop offset="0" stop-color="#ff9800"/><stop offset="0.55" stop-color="#ffa800"/><stop offset="1" stop-color="#ffb800"/></linearGradient><linearGradient id="lg10_7" gradientUnits="userSpaceOnUse" x1="146.0" y1="252.0" x2="90.0" y2="222.0"><stop offset="0" stop-color="#ffa800"/><stop offset="0.55" stop-color="#e8e000"/><stop offset="1" stop-color="#a8f820"/></linearGradient><linearGradient id="lg10_8" gradientUnits="userSpaceOnUse" x1="146.0" y1="252.0" x2="114.0" y2="307.0"><stop offset="0" stop-color="#ffc800"/><stop offset="0.55" stop-color="#f8ee00"/><stop offset="1" stop-color="#e8f000"/></linearGradient><linearGradient id="lg10_9" gradientUnits="userSpaceOnUse" x1="146.0" y1="252.0" x2="189.0" y2="282.0"><stop offset="0" stop-color="#ffc000"/><stop offset="0.55" stop-color="#f0e800"/><stop offset="1" stop-color="#e0e800"/></linearGradient></defs><g transform="scale(0.195)"><path d="M153,119 Q172,154 204,179" fill="none" stroke="#e03000" stroke-width="4.6"/><path d="M153,119 Q172,154 204,179" fill="none" stroke="#d8d800" stroke-width="3"/><path d="M213,137 Q208,157 204,179" fill="none" stroke="#e03000" stroke-width="4.6"/><path d="M213,137 Q208,157 204,179" fill="none" stroke="#d8d800" stroke-width="3"/><path d="M291,129 Q243,165 204,179" fill="none" stroke="#e03000" stroke-width="4.6"/><path d="M291,129 Q243,165 204,179" fill="none" stroke="#d8d800" stroke-width="3"/><path d="M146,252 Q175,222 204,179" fill="none" stroke="#e03000" stroke-width="4.6"/><path d="M146,252 Q175,222 204,179" fill="none" stroke="#d8d800" stroke-width="3"/><path d="M151.2,117.2 L151.8,116.4 L152.5,115.2 L153.1,113.7 L153.6,112.0 L155.3,110.9 L154.2,107.7 L155.7,106.1 L154.3,102.7 L155.6,100.6 L153.8,97.0 L154.9,94.5 L152.7,90.9 L153.5,88.0 L151.0,84.6 L151.5,81.3 L148.6,78.2 L148.7,74.6 L145.5,72.0 L145.2,68.2 L141.9,66.2 L141.0,62.4 L137.7,60.9 L136.4,57.1 L133.1,56.2 L131.2,52.8 L127.9,52.6 L125.4,49.7 L122.2,50.1 L119.3,47.7 L116.3,48.8 L113.1,46.9 L110.4,48.5 L107.0,47.2 L104.6,49.2 L101.2,48.4 L99.3,50.8 L95.9,50.6 L94.6,53.2 L92.6,54.6 L91.0,56.0 L91.0,56.0 L89.6,57.6 L86.9,58.6 L86.8,61.8 L84.3,63.4 L84.7,66.8 L82.5,68.9 L83.4,72.3 L81.6,74.9 L83.1,78.2 L81.8,81.1 L83.9,84.2 L83.0,87.3 L85.7,90.0 L85.5,93.3 L88.6,95.5 L89.1,98.8 L92.7,100.5 L93.9,103.8 L97.7,105.0 L99.4,108.3 L103.2,109.0 L105.5,112.3 L109.2,112.4 L112.0,115.5 L115.4,115.3 L118.6,118.0 L121.8,117.4 L125.2,119.8 L128.0,119.0 L131.6,121.0 L133.9,119.8 L137.4,121.5 L139.3,120.1 L142.6,121.4 L143.9,119.8 L146.9,120.7 L147.7,119.0 L149.3,118.4 L150.5,117.8 L151.2,117.2Z" fill="url(#lg10_0)" stroke="#d02000" stroke-width="0.9" stroke-opacity="0.7"/><path d="M154.7,117.1 L155.3,117.6 L156.4,118.2 L157.6,118.7 L159.1,119.1 L159.9,120.9 L162.5,119.8 L163.7,121.4 L166.4,120.1 L168.1,121.6 L170.8,119.9 L172.9,121.2 L175.4,119.3 L177.8,120.4 L180.1,118.2 L182.8,119.0 L184.7,116.6 L187.7,117.0 L189.1,114.5 L192.2,114.5 L193.2,111.9 L196.2,111.5 L196.8,108.9 L199.7,108.1 L199.7,105.5 L202.4,104.2 L201.8,101.6 L204.0,99.9 L202.9,97.3 L204.8,95.2 L203.2,92.8 L204.6,90.4 L202.6,88.2 L203.5,85.6 L201.2,83.8 L201.7,80.9 L199.2,79.6 L199.3,76.7 L196.7,75.9 L195.3,74.3 L194.0,73.0 L194.0,73.0 L192.6,71.8 L191.7,69.3 L188.9,69.6 L187.5,67.1 L184.7,67.7 L182.9,65.5 L180.2,66.5 L178.0,64.6 L175.6,66.1 L173.1,64.5 L171.0,66.4 L168.4,65.4 L166.7,67.6 L164.0,67.1 L162.8,69.7 L160.2,69.7 L159.5,72.6 L156.9,73.2 L156.7,76.3 L154.2,77.3 L154.4,80.4 L151.9,81.9 L152.5,84.9 L150.2,86.8 L151.2,89.6 L149.1,91.9 L150.4,94.4 L148.6,97.0 L150.1,99.2 L148.6,101.9 L150.2,103.7 L149.0,106.5 L150.7,107.8 L149.8,110.6 L151.6,111.4 L150.9,114.0 L152.8,114.4 L153.4,115.6 L154.1,116.5 L154.7,117.1Z" fill="url(#lg10_1)" stroke="#d02000" stroke-width="0.9" stroke-opacity="0.7"/><path d="M151.9,121.2 L150.9,120.9 L149.5,120.5 L147.9,120.3 L146.0,120.1 L144.4,118.6 L141.8,120.3 L139.8,119.0 L137.2,121.1 L134.7,120.1 L132.1,122.4 L129.3,121.7 L127.0,124.3 L123.8,124.0 L121.9,126.9 L118.6,126.9 L117.0,129.9 L113.6,130.5 L112.6,133.5 L109.3,134.5 L108.7,137.5 L105.7,138.9 L105.6,141.9 L102.8,143.7 L103.3,146.6 L101.0,148.8 L102.2,151.6 L100.5,154.1 L102.3,156.7 L101.2,159.6 L103.5,161.9 L103.0,165.0 L105.8,167.0 L105.8,170.1 L108.9,171.7 L109.5,174.9 L112.7,175.9 L113.7,179.0 L116.9,179.4 L119.0,180.9 L121.0,182.0 L121.0,182.0 L123.1,182.9 L125.0,185.3 L128.1,184.6 L130.6,186.7 L133.6,185.5 L136.5,187.3 L139.3,185.7 L142.5,187.0 L144.8,185.0 L148.1,185.7 L150.0,183.3 L153.3,183.6 L154.7,180.8 L157.8,180.5 L158.5,177.5 L161.3,176.4 L161.4,173.2 L163.8,171.6 L163.4,168.3 L165.6,166.3 L164.7,163.0 L166.7,160.5 L165.4,157.4 L167.0,154.5 L165.3,151.7 L166.6,148.5 L164.6,146.0 L165.5,142.6 L163.4,140.5 L163.9,137.0 L161.7,135.4 L161.9,132.0 L159.6,130.8 L159.6,127.6 L157.4,126.9 L157.1,124.0 L155.0,123.9 L153.8,122.7 L152.7,121.8 L151.9,121.2Z" fill="url(#lg10_2)" stroke="#d02000" stroke-width="0.9" stroke-opacity="0.7"/><path d="M213.4,134.5 L213.9,134.6 L214.6,134.5 L215.4,134.3 L216.3,134.0 L217.2,135.1 L218.2,133.0 L219.3,133.9 L220.2,131.6 L221.6,132.3 L222.4,129.7 L224.0,130.2 L224.6,127.5 L226.4,127.6 L226.7,124.9 L228.7,124.8 L228.6,122.1 L230.7,121.6 L230.2,119.0 L232.4,118.1 L231.6,115.8 L233.7,114.5 L232.5,112.6 L234.5,110.9 L233.1,109.3 L234.7,107.4 L233.0,106.1 L234.3,103.9 L232.4,103.1 L233.2,100.7 L231.3,100.3 L231.7,97.9 L229.7,97.7 L229.7,95.3 L227.7,95.6 L227.4,93.3 L225.5,93.9 L224.9,91.7 L223.2,92.7 L222.0,92.3 L221.0,92.0 L221.0,92.0 L219.9,91.9 L218.8,90.3 L217.4,92.0 L216.0,90.6 L214.8,92.6 L213.1,91.5 L212.1,93.7 L210.3,92.9 L209.7,95.2 L207.7,94.8 L207.4,97.3 L205.4,97.3 L205.6,99.7 L203.6,100.1 L204.2,102.6 L202.3,103.4 L203.3,105.7 L201.5,106.9 L202.9,109.0 L201.3,110.7 L202.9,112.4 L201.5,114.5 L203.2,115.9 L202.1,118.3 L203.9,119.3 L203.0,121.9 L204.8,122.5 L204.3,125.2 L206.0,125.5 L205.8,128.2 L207.4,128.2 L207.3,130.8 L208.8,130.5 L208.9,132.9 L210.3,132.3 L210.5,134.6 L211.7,133.6 L212.4,134.1 L213.0,134.4 L213.4,134.5Z" fill="url(#lg10_3)" stroke="#d02000" stroke-width="0.9" stroke-opacity="0.7"/><path d="M289.9,126.7 L290.7,126.2 L291.8,125.4 L292.8,124.3 L293.9,123.0 L295.9,122.8 L296.0,119.8 L298.1,119.0 L298.0,115.8 L300.1,114.5 L299.7,111.1 L301.8,109.4 L301.0,106.0 L303.0,103.9 L301.9,100.6 L303.7,98.1 L302.2,95.0 L303.8,92.1 L301.9,89.4 L303.1,86.3 L301.0,83.9 L301.7,80.7 L299.4,78.8 L299.7,75.5 L297.1,74.1 L296.8,70.9 L294.0,70.1 L293.1,67.1 L290.0,66.9 L288.5,64.2 L285.5,64.6 L283.5,62.2 L280.5,63.1 L278.1,61.1 L275.3,62.4 L272.6,60.8 L270.1,62.6 L267.2,61.4 L265.1,63.5 L262.9,64.2 L261.0,65.0 L261.0,65.0 L259.2,66.0 L256.3,65.9 L255.3,68.7 L252.3,69.3 L251.6,72.3 L248.6,73.3 L248.4,76.5 L245.6,78.0 L245.9,81.1 L243.5,83.0 L244.3,86.0 L242.3,88.3 L243.7,91.1 L242.2,93.7 L244.2,96.1 L243.3,98.9 L245.8,101.0 L245.5,103.9 L248.4,105.6 L248.6,108.7 L251.7,110.0 L252.4,113.1 L255.5,114.0 L256.7,117.2 L259.9,117.6 L261.5,120.7 L264.5,120.7 L266.5,123.6 L269.3,123.2 L271.6,125.9 L274.1,125.2 L276.5,127.5 L278.6,126.5 L281.0,128.5 L282.7,127.3 L285.0,129.0 L286.3,127.4 L287.8,127.3 L289.1,127.0 L289.9,126.7Z" fill="url(#lg10_4)" stroke="#d02000" stroke-width="0.9" stroke-opacity="0.7"/><path d="M293.4,128.3 L293.8,129.2 L294.4,130.3 L295.3,131.5 L296.5,132.7 L296.4,134.6 L299.5,135.2 L299.9,137.3 L303.3,137.6 L304.2,139.8 L307.8,139.9 L309.2,142.1 L312.9,141.9 L314.8,144.1 L318.5,143.5 L320.8,145.6 L324.3,144.6 L327.0,146.5 L330.3,145.1 L333.4,146.7 L336.3,144.9 L339.6,146.1 L342.1,144.1 L345.5,144.9 L347.5,142.6 L351.0,142.8 L352.4,140.1 L355.8,139.6 L356.7,136.7 L359.8,135.7 L360.1,132.7 L363.0,131.0 L362.8,128.0 L365.4,126.0 L364.6,123.1 L366.8,120.7 L365.6,118.1 L367.3,115.5 L365.7,113.2 L365.4,110.9 L365.0,109.0 L365.0,109.0 L364.4,107.1 L364.9,104.4 L362.3,102.9 L362.3,100.1 L359.3,98.9 L358.8,96.0 L355.6,95.2 L354.6,92.4 L351.3,92.2 L349.7,89.6 L346.4,90.0 L344.4,87.7 L341.2,88.7 L338.8,86.9 L335.7,88.5 L333.0,87.2 L330.3,89.4 L327.2,88.7 L324.8,91.2 L321.5,90.9 L319.5,93.8 L315.9,94.0 L314.4,96.9 L310.8,97.6 L309.6,100.6 L306.1,101.8 L305.4,104.7 L301.9,106.2 L301.6,108.9 L298.4,110.8 L298.5,113.2 L295.6,115.2 L296.1,117.4 L293.6,119.5 L294.4,121.3 L292.3,123.3 L293.5,124.7 L293.3,126.2 L293.3,127.4 L293.4,128.3Z" fill="url(#lg10_5)" stroke="#d02000" stroke-width="0.9" stroke-opacity="0.7"/><path d="M291.9,131.3 L290.9,131.8 L289.6,132.6 L288.3,133.6 L286.9,134.9 L284.6,135.0 L284.0,138.0 L281.5,138.6 L281.2,141.8 L278.6,142.9 L278.6,146.3 L276.0,147.9 L276.3,151.2 L273.8,153.2 L274.4,156.5 L272.2,158.9 L273.2,161.9 L271.2,164.6 L272.6,167.4 L271.1,170.3 L272.8,172.7 L271.7,175.7 L273.8,177.7 L273.1,180.8 L275.5,182.3 L275.5,185.3 L278.3,186.3 L279.0,189.1 L282.2,189.4 L283.5,192.0 L286.9,191.8 L288.7,194.1 L292.2,193.4 L294.5,195.4 L297.8,194.2 L300.5,195.8 L303.6,194.1 L306.6,195.4 L309.2,193.3 L311.8,192.7 L314.0,192.0 L314.0,192.0 L316.2,191.1 L319.3,191.3 L321.0,188.5 L324.4,188.1 L325.6,185.1 L329.0,184.2 L329.8,181.2 L333.0,179.7 L333.2,176.7 L336.2,174.9 L335.8,172.0 L338.3,169.8 L337.3,167.1 L339.2,164.6 L337.6,162.2 L338.8,159.5 L336.5,157.4 L337.1,154.7 L334.4,152.9 L334.5,150.0 L331.5,148.6 L331.1,145.6 L327.9,144.5 L326.9,141.6 L323.6,141.0 L322.3,138.0 L319.0,137.9 L317.2,135.0 L314.1,135.3 L312.0,132.6 L309.2,133.3 L306.9,130.9 L304.4,131.8 L302.0,129.7 L300.0,131.0 L297.6,129.2 L296.0,130.8 L294.3,130.9 L292.9,131.1 L291.9,131.3Z" fill="url(#lg10_6)" stroke="#d02000" stroke-width="0.9" stroke-opacity="0.7"/><path d="M143.8,250.8 L144.1,250.1 L144.3,249.0 L144.5,247.8 L144.5,246.3 L145.9,245.3 L144.2,243.1 L145.4,241.6 L143.3,239.3 L144.3,237.5 L142.0,235.3 L142.7,233.1 L140.1,231.1 L140.5,228.7 L137.7,226.9 L137.8,224.2 L134.8,222.9 L134.5,220.0 L131.6,219.2 L130.8,216.3 L127.9,215.9 L126.8,213.0 L124.0,213.1 L122.5,210.4 L119.9,210.9 L117.9,208.6 L115.5,209.7 L113.2,207.8 L111.0,209.3 L108.5,208.0 L106.6,209.9 L103.9,209.0 L102.3,211.3 L99.5,210.9 L98.4,213.4 L95.6,213.4 L94.9,216.0 L92.2,216.4 L92.0,219.0 L90.9,220.5 L90.0,222.0 L90.0,222.0 L89.3,223.5 L87.1,224.8 L88.1,227.4 L86.1,229.1 L87.5,231.6 L85.9,233.7 L87.6,236.0 L86.3,238.4 L88.4,240.4 L87.6,243.0 L90.0,244.6 L89.7,247.2 L92.4,248.4 L92.6,251.0 L95.5,251.6 L96.2,254.2 L99.3,254.2 L100.5,256.6 L103.6,256.2 L105.3,258.5 L108.2,257.6 L110.4,259.7 L113.1,258.6 L115.7,260.4 L118.1,259.0 L120.9,260.5 L123.0,258.8 L126.0,260.1 L127.7,258.3 L130.8,259.2 L132.0,257.4 L135.1,258.0 L135.8,256.1 L138.8,256.5 L139.1,254.7 L141.8,254.8 L141.6,253.1 L142.6,252.2 L143.3,251.5 L143.8,250.8Z" fill="url(#lg10_7)" stroke="#d02000" stroke-width="0.9" stroke-opacity="0.7"/><path d="M144.7,254.2 L143.9,253.8 L142.7,253.4 L141.3,253.1 L139.7,252.9 L138.4,251.4 L136.0,252.9 L134.3,251.5 L131.8,253.4 L129.7,252.2 L127.3,254.4 L124.9,253.5 L122.7,255.9 L119.9,255.3 L118.0,257.9 L115.1,257.7 L113.6,260.5 L110.5,260.6 L109.5,263.5 L106.4,264.1 L105.9,266.9 L102.9,267.9 L102.8,270.7 L100.1,272.1 L100.5,274.7 L98.2,276.5 L99.3,279.1 L97.4,281.3 L99.1,283.7 L97.8,286.2 L99.9,288.4 L99.1,291.2 L101.5,293.0 L101.2,295.9 L104.0,297.3 L104.2,300.3 L107.1,301.2 L107.6,304.1 L110.5,304.5 L112.3,305.9 L114.0,307.0 L114.0,307.0 L115.8,307.9 L117.3,310.3 L120.1,309.6 L122.1,311.8 L124.9,310.6 L127.3,312.5 L129.9,311.0 L132.6,312.5 L134.8,310.6 L137.7,311.6 L139.4,309.4 L142.4,309.9 L143.6,307.4 L146.5,307.3 L147.2,304.5 L149.9,303.9 L150.0,300.8 L152.4,299.6 L152.1,296.6 L154.3,294.9 L153.6,291.9 L155.6,289.8 L154.4,286.9 L156.3,284.4 L154.7,281.8 L156.2,279.0 L154.5,276.7 L155.6,273.7 L153.7,271.8 L154.5,268.6 L152.5,267.2 L153.1,264.0 L151.0,263.0 L151.3,260.0 L149.2,259.5 L149.3,256.7 L147.3,256.7 L146.4,255.6 L145.5,254.7 L144.7,254.2Z" fill="url(#lg10_8)" stroke="#d02000" stroke-width="0.9" stroke-opacity="0.7"/><path d="M148.1,253.4 L147.6,254.2 L147.1,255.3 L146.7,256.6 L146.3,258.1 L144.5,259.1 L145.8,261.5 L144.1,263.0 L145.6,265.3 L144.1,267.2 L145.8,269.4 L144.5,271.7 L146.5,273.7 L145.4,276.3 L147.5,278.0 L146.8,280.8 L149.1,282.1 L148.7,285.0 L151.1,285.9 L151.1,288.8 L153.5,289.2 L153.9,292.0 L156.3,292.0 L157.1,294.6 L159.5,294.2 L160.7,296.4 L163.1,295.4 L164.7,297.1 L167.0,295.6 L168.9,296.9 L171.1,294.9 L173.4,295.8 L175.3,293.4 L177.8,293.9 L179.3,291.1 L182.0,291.2 L183.1,288.3 L185.8,288.0 L186.4,285.2 L187.8,283.5 L189.0,282.0 L189.0,282.0 L190.0,280.4 L192.5,279.1 L192.1,276.4 L194.5,274.6 L193.6,272.0 L195.8,269.8 L194.7,267.5 L196.5,264.9 L195.0,262.9 L196.4,260.2 L194.6,258.7 L195.5,255.9 L193.5,254.8 L193.9,252.1 L191.5,251.5 L191.4,249.0 L188.8,248.9 L188.1,246.6 L185.4,247.0 L184.3,244.8 L181.6,245.6 L180.1,243.6 L177.5,244.7 L175.6,242.9 L173.1,244.4 L170.9,242.9 L168.7,244.6 L166.3,243.4 L164.4,245.3 L161.7,244.3 L160.3,246.4 L157.6,245.6 L156.5,247.7 L153.8,247.2 L153.2,249.3 L150.7,249.0 L150.5,251.1 L149.5,251.9 L148.6,252.8 L148.1,253.4Z" fill="url(#lg10_9)" stroke="#d02000" stroke-width="0.9" stroke-opacity="0.7"/><path d="M208,181 L224,178 L238,182 L250,188 L256,194 L244,196 L230,193 L216,191 Z" fill="#c8e820"/><path d="M224,191 L234,205" stroke="#c8e820" stroke-width="2.5"/><path d="M194,179 L198,175 L197,169 L203,172 L208,167 L210,173 L216,173 L213,179 L217,184 L210,186 L209,192 L204,188 L198,191 L198,184 Z" fill="#c8e820"/><circle cx="204" cy="179" r="5" fill="#ffa000"/><path d="M256,173 Q262,163 270,169 Q272,181 262,185 Q254,181 256,173Z" fill="#c8e820"/><path d="M240,147 L246,159" stroke="#c8e820" stroke-width="4"/></g></svg>
<div style="left:1901px;top:247px;width:81px;height:13px;background:#00f8ff"></div>
<div class="t" style="left:1841.5px;width:200px;text-align:center;top:251.2px;font-size:6.8px;line-height:6.8px;color:#223;">Fm</div>
<div style="left:1983px;top:182px;width:81px;height:65px;background:#000"></div>
<svg style="left:1983px;top:182px" width="81" height="65"><defs><linearGradient id="lg11_0" gradientUnits="userSpaceOnUse" x1="153.0" y1="119.0" x2="91.0" y2="56.0"><stop offset="0" stop-color="#ffa800"/><stop offset="0.55" stop-color="#ffc400"/><stop offset="1" stop-color="#d8e800"/></linearGradient><linearGradient id="lg11_1" gradientUnits="userSpaceOnUse" x1="153.0" y1="119.0" x2="194.0" y2="73.0"><stop offset="0" stop-color="#ffb000"/><stop offset="0.55" stop-color="#ffc800"/><stop offset="1" stop-color="#b0f020"/></linearGradient><linearGradient id="lg11_2" gradientUnits="userSpaceOnUse" x1="153.0" y1="119.0" x2="121.0" y2="182.0"><stop offset="0" stop-color="#ff9c00"/><stop offset="0.55" stop-color="#ffb000"/><stop offset="1" stop-color="#ffc000"/></linearGradient><linearGradient id="lg11_3" gradientUnits="userSpaceOnUse" x1="213.0" y1="137.0" x2="221.0" y2="92.0"><stop offset="0" stop-color="#ffa000"/><stop offset="0.55" stop-color="#ffc000"/><stop offset="1" stop-color="#d8e810"/></linearGradient><linearGradient id="lg11_4" gradientUnits="userSpaceOnUse" x1="291.0" y1="129.0" x2="261.0" y2="65.0"><stop offset="0" stop-color="#ffb000"/><stop offset="0.55" stop-color="#ffc800"/><stop offset="1" stop-color="#e8e800"/></linearGradient><linearGradient id="lg11_5" gradientUnits="userSpaceOnUse" x1="291.0" y1="129.0" x2="365.0" y2="109.0"><stop offset="0" stop-color="#ffb800"/><stop offset="0.55" stop-color="#f0e800"/><stop offset="1" stop-color="#a0f820"/></linearGradient><linearGradient id="lg11_6" gradientUnits="userSpaceOnUse" x1="291.0" y1="129.0" x2="314.0" y2="192.0"><stop offset="0" stop-color="#ff9800"/><stop offset="0.55" stop-color="#ffa800"/><stop offset="1" stop-color="#ffb800"/></linearGradient><linearGradient id="lg11_7" gradientUnits="userSpaceOnUse" x1="146.0" y1="252.0" x2="90.0" y2="222.0"><stop offset="0" stop-color="#ffa800"/><stop offset="0.55" stop-color="#e8e000"/><stop offset="1" stop-color="#a8f820"/></linearGradient><linearGradient id="lg11_8" gradientUnits="userSpaceOnUse" x1="146.0" y1="252.0" x2="114.0" y2="307.0"><stop offset="0" stop-color="#ffc800"/><stop offset="0.55" stop-color="#f8ee00"/><stop offset="1" stop-color="#e8f000"/></linearGradient><linearGradient id="lg11_9" gradientUnits="userSpaceOnUse" x1="146.0" y1="252.0" x2="189.0" y2="282.0"><stop offset="0" stop-color="#ffc000"/><stop offset="0.55" stop-color="#f0e800"/><stop offset="1" stop-color="#e0e800"/></linearGradient></defs><g transform="scale(0.195)"><path d="M153,119 Q172,154 204,179" fill="none" stroke="#e03000" stroke-width="4.6"/><path d="M153,119 Q172,154 204,179" fill="none" stroke="#d8d800" stroke-width="3"/><path d="M213,137 Q208,157 204,179" fill="none" stroke="#e03000" stroke-width="4.6"/><path d="M213,137 Q208,157 204,179" fill="none" stroke="#d8d800" stroke-width="3"/><path d="M291,129 Q243,165 204,179" fill="none" stroke="#e03000" stroke-width="4.6"/><path d="M291,129 Q243,165 204,179" fill="none" stroke="#d8d800" stroke-width="3"/><path d="M146,252 Q175,222 204,179" fill="none" stroke="#e03000" stroke-width="4.6"/><path d="M146,252 Q175,222 204,179" fill="none" stroke="#d8d800" stroke-width="3"/><path d="M151.2,117.2 L151.8,116.4 L152.5,115.2 L153.1,113.7 L153.6,112.0 L155.3,110.9 L154.2,107.7 L155.7,106.1 L154.3,102.7 L155.6,100.6 L153.8,97.0 L154.9,94.5 L152.7,90.9 L153.5,88.0 L151.0,84.6 L151.5,81.3 L148.6,78.2 L148.7,74.6 L145.5,72.0 L145.2,68.2 L141.9,66.2 L141.0,62.4 L137.7,60.9 L136.4,57.1 L133.1,56.2 L131.2,52.8 L127.9,52.6 L125.4,49.7 L122.2,50.1 L119.3,47.7 L116.3,48.8 L113.1,46.9 L110.4,48.5 L107.0,47.2 L104.6,49.2 L101.2,48.4 L99.3,50.8 L95.9,50.6 L94.6,53.2 L92.6,54.6 L91.0,56.0 L91.0,56.0 L89.6,57.6 L86.9,58.6 L86.8,61.8 L84.3,63.4 L84.7,66.8 L82.5,68.9 L83.4,72.3 L81.6,74.9 L83.1,78.2 L81.8,81.1 L83.9,84.2 L83.0,87.3 L85.7,90.0 L85.5,93.3 L88.6,95.5 L89.1,98.8 L92.7,100.5 L93.9,103.8 L97.7,105.0 L99.4,108.3 L103.2,109.0 L105.5,112.3 L109.2,112.4 L112.0,115.5 L115.4,115.3 L118.6,118.0 L121.8,117.4 L125.2,119.8 L128.0,119.0 L131.6,121.0 L133.9,119.8 L137.4,121.5 L139.3,120.1 L142.6,121.4 L143.9,119.8 L146.9,120.7 L147.7,119.0 L149.3,118.4 L150.5,117.8 L151.2,117.2Z" fill="url(#lg11_0)" stroke="#d02000" stroke-width="0.9" stroke-opacity="0.7"/><path d="M154.7,117.1 L155.3,117.6 L156.4,118.2 L157.6,118.7 L159.1,119.1 L159.9,120.9 L162.5,119.8 L163.7,121.4 L166.4,120.1 L168.1,121.6 L170.8,119.9 L172.9,121.2 L175.4,119.3 L177.8,120.4 L180.1,118.2 L182.8,119.0 L184.7,116.6 L187.7,117.0 L189.1,114.5 L192.2,114.5 L193.2,111.9 L196.2,111.5 L196.8,108.9 L199.7,108.1 L199.7,105.5 L202.4,104.2 L201.8,101.6 L204.0,99.9 L202.9,97.3 L204.8,95.2 L203.2,92.8 L204.6,90.4 L202.6,88.2 L203.5,85.6 L201.2,83.8 L201.7,80.9 L199.2,79.6 L199.3,76.7 L196.7,75.9 L195.3,74.3 L194.0,73.0 L194.0,73.0 L192.6,71.8 L191.7,69.3 L188.9,69.6 L187.5,67.1 L184.7,67.7 L182.9,65.5 L180.2,66.5 L178.0,64.6 L175.6,66.1 L173.1,64.5 L171.0,66.4 L168.4,65.4 L166.7,67.6 L164.0,67.1 L162.8,69.7 L160.2,69.7 L159.5,72.6 L156.9,73.2 L156.7,76.3 L154.2,77.3 L154.4,80.4 L151.9,81.9 L152.5,84.9 L150.2,86.8 L151.2,89.6 L149.1,91.9 L150.4,94.4 L148.6,97.0 L150.1,99.2 L148.6,101.9 L150.2,103.7 L149.0,106.5 L150.7,107.8 L149.8,110.6 L151.6,111.4 L150.9,114.0 L152.8,114.4 L153.4,115.6 L154.1,116.5 L154.7,117.1Z" fill="url(#lg11_1)" stroke="#d02000" stroke-width="0.9" stroke-opacity="0.7"/><path d="M151.9,121.2 L150.9,120.9 L149.5,120.5 L147.9,120.3 L146.0,120.1 L144.4,118.6 L141.8,120.3 L139.8,119.0 L137.2,121.1 L134.7,120.1 L132.1,122.4 L129.3,121.7 L127.0,124.3 L123.8,124.0 L121.9,126.9 L118.6,126.9 L117.0,129.9 L113.6,130.5 L112.6,133.5 L109.3,134.5 L108.7,137.5 L105.7,138.9 L105.6,141.9 L102.8,143.7 L103.3,146.6 L101.0,148.8 L102.2,151.6 L100.5,154.1 L102.3,156.7 L101.2,159.6 L103.5,161.9 L103.0,165.0 L105.8,167.0 L105.8,170.1 L108.9,171.7 L109.5,174.9 L112.7,175.9 L113.7,179.0 L116.9,179.4 L119.0,180.9 L121.0,182.0 L121.0,182.0 L123.1,182.9 L125.0,185.3 L128.1,184.6 L130.6,186.7 L133.6,185.5 L136.5,187.3 L139.3,185.7 L142.5,187.0 L144.8,185.0 L148.1,185.7 L150.0,183.3 L153.3,183.6 L154.7,180.8 L157.8,180.5 L158.5,177.5 L161.3,176.4 L161.4,173.2 L163.8,171.6 L163.4,168.3 L165.6,166.3 L164.7,163.0 L166.7,160.5 L165.4,157.4 L167.0,154.5 L165.3,151.7 L166.6,148.5 L164.6,146.0 L165.5,142.6 L163.4,140.5 L163.9,137.0 L161.7,135.4 L161.9,132.0 L159.6,130.8 L159.6,127.6 L157.4,126.9 L157.1,124.0 L155.0,123.9 L153.8,122.7 L152.7,121.8 L151.9,121.2Z" fill="url(#lg11_2)" stroke="#d02000" stroke-width="0.9" stroke-opacity="0.7"/><path d="M213.4,134.5 L213.9,134.6 L214.6,134.5 L215.4,134.3 L216.3,134.0 L217.2,135.1 L218.2,133.0 L219.3,133.9 L220.2,131.6 L221.6,132.3 L222.4,129.7 L224.0,130.2 L224.6,127.5 L226.4,127.6 L226.7,124.9 L228.7,124.8 L228.6,122.1 L230.7,121.6 L230.2,119.0 L232.4,118.1 L231.6,115.8 L233.7,114.5 L232.5,112.6 L234.5,110.9 L233.1,109.3 L234.7,107.4 L233.0,106.1 L234.3,103.9 L232.4,103.1 L233.2,100.7 L231.3,100.3 L231.7,97.9 L229.7,97.7 L229.7,95.3 L227.7,95.6 L227.4,93.3 L225.5,93.9 L224.9,91.7 L223.2,92.7 L222.0,92.3 L221.0,92.0 L221.0,92.0 L219.9,91.9 L218.8,90.3 L217.4,92.0 L216.0,90.6 L214.8,92.6 L213.1,91.5 L212.1,93.7 L210.3,92.9 L209.7,95.2 L207.7,94.8 L207.4,97.3 L205.4,97.3 L205.6,99.7 L203.6,100.1 L204.2,102.6 L202.3,103.4 L203.3,105.7 L201.5,106.9 L202.9,109.0 L201.3,110.7 L202.9,112.4 L201.5,114.5 L203.2,115.9 L202.1,118.3 L203.9,119.3 L203.0,121.9 L204.8,122.5 L204.3,125.2 L206.0,125.5 L205.8,128.2 L207.4,128.2 L207.3,130.8 L208.8,130.5 L208.9,132.9 L210.3,132.3 L210.5,134.6 L211.7,133.6 L212.4,134.1 L213.0,134.4 L213.4,134.5Z" fill="url(#lg11_3)" stroke="#d02000" stroke-width="0.9" stroke-opacity="0.7"/><path d="M289.9,126.7 L290.7,126.2 L291.8,125.4 L292.8,124.3 L293.9,123.0 L295.9,122.8 L296.0,119.8 L298.1,119.0 L298.0,115.8 L300.1,114.5 L299.7,111.1 L301.8,109.4 L301.0,106.0 L303.0,103.9 L301.9,100.6 L303.7,98.1 L302.2,95.0 L303.8,92.1 L301.9,89.4 L303.1,86.3 L301.0,83.9 L301.7,80.7 L299.4,78.8 L299.7,75.5 L297.1,74.1 L296.8,70.9 L294.0,70.1 L293.1,67.1 L290.0,66.9 L288.5,64.2 L285.5,64.6 L283.5,62.2 L280.5,63.1 L278.1,61.1 L275.3,62.4 L272.6,60.8 L270.1,62.6 L267.2,61.4 L265.1,63.5 L262.9,64.2 L261.0,65.0 L261.0,65.0 L259.2,66.0 L256.3,65.9 L255.3,68.7 L252.3,69.3 L251.6,72.3 L248.6,73.3 L248.4,76.5 L245.6,78.0 L245.9,81.1 L243.5,83.0 L244.3,86.0 L242.3,88.3 L243.7,91.1 L242.2,93.7 L244.2,96.1 L243.3,98.9 L245.8,101.0 L245.5,103.9 L248.4,105.6 L248.6,108.7 L251.7,110.0 L252.4,113.1 L255.5,114.0 L256.7,117.2 L259.9,117.6 L261.5,120.7 L264.5,120.7 L266.5,123.6 L269.3,123.2 L271.6,125.9 L274.1,125.2 L276.5,127.5 L278.6,126.5 L281.0,128.5 L282.7,127.3 L285.0,129.0 L286.3,127.4 L287.8,127.3 L289.1,127.0 L289.9,126.7Z" fill="url(#lg11_4)" stroke="#d02000" stroke-width="0.9" stroke-opacity="0.7"/><path d="M293.4,128.3 L293.8,129.2 L294.4,130.3 L295.3,131.5 L296.5,132.7 L296.4,134.6 L299.5,135.2 L299.9,137.3 L303.3,137.6 L304.2,139.8 L307.8,139.9 L309.2,142.1 L312.9,141.9 L314.8,144.1 L318.5,143.5 L320.8,145.6 L324.3,144.6 L327.0,146.5 L330.3,145.1 L333.4,146.7 L336.3,144.9 L339.6,146.1 L342.1,144.1 L345.5,144.9 L347.5,142.6 L351.0,142.8 L352.4,140.1 L355.8,139.6 L356.7,136.7 L359.8,135.7 L360.1,132.7 L363.0,131.0 L362.8,128.0 L365.4,126.0 L364.6,123.1 L366.8,120.7 L365.6,118.1 L367.3,115.5 L365.7,113.2 L365.4,110.9 L365.0,109.0 L365.0,109.0 L364.4,107.1 L364.9,104.4 L362.3,102.9 L362.3,100.1 L359.3,98.9 L358.8,96.0 L355.6,95.2 L354.6,92.4 L351.3,92.2 L349.7,89.6 L346.4,90.0 L344.4,87.7 L341.2,88.7 L338.8,86.9 L335.7,88.5 L333.0,87.2 L330.3,89.4 L327.2,88.7 L324.8,91.2 L321.5,90.9 L319.5,93.8 L315.9,94.0 L314.4,96.9 L310.8,97.6 L309.6,100.6 L306.1,101.8 L305.4,104.7 L301.9,106.2 L301.6,108.9 L298.4,110.8 L298.5,113.2 L295.6,115.2 L296.1,117.4 L293.6,119.5 L294.4,121.3 L292.3,123.3 L293.5,124.7 L293.3,126.2 L293.3,127.4 L293.4,128.3Z" fill="url(#lg11_5)" stroke="#d02000" stroke-width="0.9" stroke-opacity="0.7"/><path d="M291.9,131.3 L290.9,131.8 L289.6,132.6 L288.3,133.6 L286.9,134.9 L284.6,135.0 L284.0,138.0 L281.5,138.6 L281.2,141.8 L278.6,142.9 L278.6,146.3 L276.0,147.9 L276.3,151.2 L273.8,153.2 L274.4,156.5 L272.2,158.9 L273.2,161.9 L271.2,164.6 L272.6,167.4 L271.1,170.3 L272.8,172.7 L271.7,175.7 L273.8,177.7 L273.1,180.8 L275.5,182.3 L275.5,185.3 L278.3,186.3 L279.0,189.1 L282.2,189.4 L283.5,192.0 L286.9,191.8 L288.7,194.1 L292.2,193.4 L294.5,195.4 L297.8,194.2 L300.5,195.8 L303.6,194.1 L306.6,195.4 L309.2,193.3 L311.8,192.7 L314.0,192.0 L314.0,192.0 L316.2,191.1 L319.3,191.3 L321.0,188.5 L324.4,188.1 L325.6,185.1 L329.0,184.2 L329.8,181.2 L333.0,179.7 L333.2,176.7 L336.2,174.9 L335.8,172.0 L338.3,169.8 L337.3,167.1 L339.2,164.6 L337.6,162.2 L338.8,159.5 L336.5,157.4 L337.1,154.7 L334.4,152.9 L334.5,150.0 L331.5,148.6 L331.1,145.6 L327.9,144.5 L326.9,141.6 L323.6,141.0 L322.3,138.0 L319.0,137.9 L317.2,135.0 L314.1,135.3 L312.0,132.6 L309.2,133.3 L306.9,130.9 L304.4,131.8 L302.0,129.7 L300.0,131.0 L297.6,129.2 L296.0,130.8 L294.3,130.9 L292.9,131.1 L291.9,131.3Z" fill="url(#lg11_6)" stroke="#d02000" stroke-width="0.9" stroke-opacity="0.7"/><path d="M143.8,250.8 L144.1,250.1 L144.3,249.0 L144.5,247.8 L144.5,246.3 L145.9,245.3 L144.2,243.1 L145.4,241.6 L143.3,239.3 L144.3,237.5 L142.0,235.3 L142.7,233.1 L140.1,231.1 L140.5,228.7 L137.7,226.9 L137.8,224.2 L134.8,222.9 L134.5,220.0 L131.6,219.2 L130.8,216.3 L127.9,215.9 L126.8,213.0 L124.0,213.1 L122.5,210.4 L119.9,210.9 L117.9,208.6 L115.5,209.7 L113.2,207.8 L111.0,209.3 L108.5,208.0 L106.6,209.9 L103.9,209.0 L102.3,211.3 L99.5,210.9 L98.4,213.4 L95.6,213.4 L94.9,216.0 L92.2,216.4 L92.0,219.0 L90.9,220.5 L90.0,222.0 L90.0,222.0 L89.3,223.5 L87.1,224.8 L88.1,227.4 L86.1,229.1 L87.5,231.6 L85.9,233.7 L87.6,236.0 L86.3,238.4 L88.4,240.4 L87.6,243.0 L90.0,244.6 L89.7,247.2 L92.4,248.4 L92.6,251.0 L95.5,251.6 L96.2,254.2 L99.3,254.2 L100.5,256.6 L103.6,256.2 L105.3,258.5 L108.2,257.6 L110.4,259.7 L113.1,258.6 L115.7,260.4 L118.1,259.0 L120.9,260.5 L123.0,258.8 L126.0,260.1 L127.7,258.3 L130.8,259.2 L132.0,257.4 L135.1,258.0 L135.8,256.1 L138.8,256.5 L139.1,254.7 L141.8,254.8 L141.6,253.1 L142.6,252.2 L143.3,251.5 L143.8,250.8Z" fill="url(#lg11_7)" stroke="#d02000" stroke-width="0.9" stroke-opacity="0.7"/><path d="M144.7,254.2 L143.9,253.8 L142.7,253.4 L141.3,253.1 L139.7,252.9 L138.4,251.4 L136.0,252.9 L134.3,251.5 L131.8,253.4 L129.7,252.2 L127.3,254.4 L124.9,253.5 L122.7,255.9 L119.9,255.3 L118.0,257.9 L115.1,257.7 L113.6,260.5 L110.5,260.6 L109.5,263.5 L106.4,264.1 L105.9,266.9 L102.9,267.9 L102.8,270.7 L100.1,272.1 L100.5,274.7 L98.2,276.5 L99.3,279.1 L97.4,281.3 L99.1,283.7 L97.8,286.2 L99.9,288.4 L99.1,291.2 L101.5,293.0 L101.2,295.9 L104.0,297.3 L104.2,300.3 L107.1,301.2 L107.6,304.1 L110.5,304.5 L112.3,305.9 L114.0,307.0 L114.0,307.0 L115.8,307.9 L117.3,310.3 L120.1,309.6 L122.1,311.8 L124.9,310.6 L127.3,312.5 L129.9,311.0 L132.6,312.5 L134.8,310.6 L137.7,311.6 L139.4,309.4 L142.4,309.9 L143.6,307.4 L146.5,307.3 L147.2,304.5 L149.9,303.9 L150.0,300.8 L152.4,299.6 L152.1,296.6 L154.3,294.9 L153.6,291.9 L155.6,289.8 L154.4,286.9 L156.3,284.4 L154.7,281.8 L156.2,279.0 L154.5,276.7 L155.6,273.7 L153.7,271.8 L154.5,268.6 L152.5,267.2 L153.1,264.0 L151.0,263.0 L151.3,260.0 L149.2,259.5 L149.3,256.7 L147.3,256.7 L146.4,255.6 L145.5,254.7 L144.7,254.2Z" fill="url(#lg11_8)" stroke="#d02000" stroke-width="0.9" stroke-opacity="0.7"/><path d="M148.1,253.4 L147.6,254.2 L147.1,255.3 L146.7,256.6 L146.3,258.1 L144.5,259.1 L145.8,261.5 L144.1,263.0 L145.6,265.3 L144.1,267.2 L145.8,269.4 L144.5,271.7 L146.5,273.7 L145.4,276.3 L147.5,278.0 L146.8,280.8 L149.1,282.1 L148.7,285.0 L151.1,285.9 L151.1,288.8 L153.5,289.2 L153.9,292.0 L156.3,292.0 L157.1,294.6 L159.5,294.2 L160.7,296.4 L163.1,295.4 L164.7,297.1 L167.0,295.6 L168.9,296.9 L171.1,294.9 L173.4,295.8 L175.3,293.4 L177.8,293.9 L179.3,291.1 L182.0,291.2 L183.1,288.3 L185.8,288.0 L186.4,285.2 L187.8,283.5 L189.0,282.0 L189.0,282.0 L190.0,280.4 L192.5,279.1 L192.1,276.4 L194.5,274.6 L193.6,272.0 L195.8,269.8 L194.7,267.5 L196.5,264.9 L195.0,262.9 L196.4,260.2 L194.6,258.7 L195.5,255.9 L193.5,254.8 L193.9,252.1 L191.5,251.5 L191.4,249.0 L188.8,248.9 L188.1,246.6 L185.4,247.0 L184.3,244.8 L181.6,245.6 L180.1,243.6 L177.5,244.7 L175.6,242.9 L173.1,244.4 L170.9,242.9 L168.7,244.6 L166.3,243.4 L164.4,245.3 L161.7,244.3 L160.3,246.4 L157.6,245.6 L156.5,247.7 L153.8,247.2 L153.2,249.3 L150.7,249.0 L150.5,251.1 L149.5,251.9 L148.6,252.8 L148.1,253.4Z" fill="url(#lg11_9)" stroke="#d02000" stroke-width="0.9" stroke-opacity="0.7"/><path d="M208,181 L224,178 L238,182 L250,188 L256,194 L244,196 L230,193 L216,191 Z" fill="#c8e820"/><path d="M224,191 L234,205" stroke="#c8e820" stroke-width="2.5"/><path d="M194,179 L198,175 L197,169 L203,172 L208,167 L210,173 L216,173 L213,179 L217,184 L210,186 L209,192 L204,188 L198,191 L198,184 Z" fill="#c8e820"/><circle cx="204" cy="179" r="5" fill="#ffa000"/><path d="M256,173 Q262,163 270,169 Q272,181 262,185 Q254,181 256,173Z" fill="#c8e820"/><path d="M240,147 L246,159" stroke="#c8e820" stroke-width="4"/></g></svg>
<div style="left:1983px;top:247px;width:81px;height:13px;background:#00f8ff"></div>
<div class="t" style="left:1923.5px;width:200px;text-align:center;top:251.2px;font-size:6.8px;line-height:6.8px;color:#223;">Fp</div>
<div style="left:2065px;top:182px;width:81px;height:65px;background:#000"></div>
<svg style="left:2065px;top:182px" width="81" height="65"><defs><linearGradient id="lg12_0" gradientUnits="userSpaceOnUse" x1="153.0" y1="119.0" x2="91.0" y2="56.0"><stop offset="0" stop-color="#ffa800"/><stop offset="0.55" stop-color="#ffc400"/><stop offset="1" stop-color="#d8e800"/></linearGradient><linearGradient id="lg12_1" gradientUnits="userSpaceOnUse" x1="153.0" y1="119.0" x2="194.0" y2="73.0"><stop offset="0" stop-color="#ffb000"/><stop offset="0.55" stop-color="#ffc800"/><stop offset="1" stop-color="#b0f020"/></linearGradient><linearGradient id="lg12_2" gradientUnits="userSpaceOnUse" x1="153.0" y1="119.0" x2="121.0" y2="182.0"><stop offset="0" stop-color="#ff9c00"/><stop offset="0.55" stop-color="#ffb000"/><stop offset="1" stop-color="#ffc000"/></linearGradient><linearGradient id="lg12_3" gradientUnits="userSpaceOnUse" x1="213.0" y1="137.0" x2="221.0" y2="92.0"><stop offset="0" stop-color="#ffa000"/><stop offset="0.55" stop-color="#ffc000"/><stop offset="1" stop-color="#d8e810"/></linearGradient><linearGradient id="lg12_4" gradientUnits="userSpaceOnUse" x1="291.0" y1="129.0" x2="261.0" y2="65.0"><stop offset="0" stop-color="#ffb000"/><stop offset="0.55" stop-color="#ffc800"/><stop offset="1" stop-color="#e8e800"/></linearGradient><linearGradient id="lg12_5" gradientUnits="userSpaceOnUse" x1="291.0" y1="129.0" x2="365.0" y2="109.0"><stop offset="0" stop-color="#ffb800"/><stop offset="0.55" stop-color="#f0e800"/><stop offset="1" stop-color="#a0f820"/></linearGradient><linearGradient id="lg12_6" gradientUnits="userSpaceOnUse" x1="291.0" y1="129.0" x2="314.0" y2="192.0"><stop offset="0" stop-color="#ff9800"/><stop offset="0.55" stop-color="#ffa800"/><stop offset="1" stop-color="#ffb800"/></linearGradient><linearGradient id="lg12_7" gradientUnits="userSpaceOnUse" x1="146.0" y1="252.0" x2="90.0" y2="222.0"><stop offset="0" stop-color="#ffa800"/><stop offset="0.55" stop-color="#e8e000"/><stop offset="1" stop-color="#a8f820"/></linearGradient><linearGradient id="lg12_8" gradientUnits="userSpaceOnUse" x1="146.0" y1="252.0" x2="114.0" y2="307.0"><stop offset="0" stop-color="#ffc800"/><stop offset="0.55" stop-color="#f8ee00"/><stop offset="1" stop-color="#e8f000"/></linearGradient><linearGradient id="lg12_9" gradientUnits="userSpaceOnUse" x1="146.0" y1="252.0" x2="189.0" y2="282.0"><stop offset="0" stop-color="#ffc000"/><stop offset="0.55" stop-color="#f0e800"/><stop offset="1" stop-color="#e0e800"/></linearGradient></defs><g transform="scale(0.195)"><path d="M153,119 Q172,154 204,179" fill="none" stroke="#e03000" stroke-width="4.6"/><path d="M153,119 Q172,154 204,179" fill="none" stroke="#d8d800" stroke-width="3"/><path d="M213,137 Q208,157 204,179" fill="none" stroke="#e03000" stroke-width="4.6"/><path d="M213,137 Q208,157 204,179" fill="none" stroke="#d8d800" stroke-width="3"/><path d="M291,129 Q243,165 204,179" fill="none" stroke="#e03000" stroke-width="4.6"/><path d="M291,129 Q243,165 204,179" fill="none" stroke="#d8d800" stroke-width="3"/><path d="M146,252 Q175,222 204,179" fill="none" stroke="#e03000" stroke-width="4.6"/><path d="M146,252 Q175,222 204,179" fill="none" stroke="#d8d800" stroke-width="3"/><path d="M151.2,117.2 L151.8,116.4 L152.5,115.2 L153.1,113.7 L153.6,112.0 L155.3,110.9 L154.2,107.7 L155.7,106.1 L154.3,102.7 L155.6,100.6 L153.8,97.0 L154.9,94.5 L152.7,90.9 L153.5,88.0 L151.0,84.6 L151.5,81.3 L148.6,78.2 L148.7,74.6 L145.5,72.0 L145.2,68.2 L141.9,66.2 L141.0,62.4 L137.7,60.9 L136.4,57.1 L133.1,56.2 L131.2,52.8 L127.9,52.6 L125.4,49.7 L122.2,50.1 L119.3,47.7 L116.3,48.8 L113.1,46.9 L110.4,48.5 L107.0,47.2 L104.6,49.2 L101.2,48.4 L99.3,50.8 L95.9,50.6 L94.6,53.2 L92.6,54.6 L91.0,56.0 L91.0,56.0 L89.6,57.6 L86.9,58.6 L86.8,61.8 L84.3,63.4 L84.7,66.8 L82.5,68.9 L83.4,72.3 L81.6,74.9 L83.1,78.2 L81.8,81.1 L83.9,84.2 L83.0,87.3 L85.7,90.0 L85.5,93.3 L88.6,95.5 L89.1,98.8 L92.7,100.5 L93.9,103.8 L97.7,105.0 L99.4,108.3 L103.2,109.0 L105.5,112.3 L109.2,112.4 L112.0,115.5 L115.4,115.3 L118.6,118.0 L121.8,117.4 L125.2,119.8 L128.0,119.0 L131.6,121.0 L133.9,119.8 L137.4,121.5 L139.3,120.1 L142.6,121.4 L143.9,119.8 L146.9,120.7 L147.7,119.0 L149.3,118.4 L150.5,117.8 L151.2,117.2Z" fill="url(#lg12_0)" stroke="#d02000" stroke-width="0.9" stroke-opacity="0.7"/><path d="M154.7,117.1 L155.3,117.6 L156.4,118.2 L157.6,118.7 L159.1,119.1 L159.9,120.9 L162.5,119.8 L163.7,121.4 L166.4,120.1 L168.1,121.6 L170.8,119.9 L172.9,121.2 L175.4,119.3 L177.8,120.4 L180.1,118.2 L182.8,119.0 L184.7,116.6 L187.7,117.0 L189.1,114.5 L192.2,114.5 L193.2,111.9 L196.2,111.5 L196.8,108.9 L199.7,108.1 L199.7,105.5 L202.4,104.2 L201.8,101.6 L204.0,99.9 L202.9,97.3 L204.8,95.2 L203.2,92.8 L204.6,90.4 L202.6,88.2 L203.5,85.6 L201.2,83.8 L201.7,80.9 L199.2,79.6 L199.3,76.7 L196.7,75.9 L195.3,74.3 L194.0,73.0 L194.0,73.0 L192.6,71.8 L191.7,69.3 L188.9,69.6 L187.5,67.1 L184.7,67.7 L182.9,65.5 L180.2,66.5 L178.0,64.6 L175.6,66.1 L173.1,64.5 L171.0,66.4 L168.4,65.4 L166.7,67.6 L164.0,67.1 L162.8,69.7 L160.2,69.7 L159.5,72.6 L156.9,73.2 L156.7,76.3 L154.2,77.3 L154.4,80.4 L151.9,81.9 L152.5,84.9 L150.2,86.8 L151.2,89.6 L149.1,91.9 L150.4,94.4 L148.6,97.0 L150.1,99.2 L148.6,101.9 L150.2,103.7 L149.0,106.5 L150.7,107.8 L149.8,110.6 L151.6,111.4 L150.9,114.0 L152.8,114.4 L153.4,115.6 L154.1,116.5 L154.7,117.1Z" fill="url(#lg12_1)" stroke="#d02000" stroke-width="0.9" stroke-opacity="0.7"/><path d="M151.9,121.2 L150.9,120.9 L149.5,120.5 L147.9,120.3 L146.0,120.1 L144.4,118.6 L141.8,120.3 L139.8,119.0 L137.2,121.1 L134.7,120.1 L132.1,122.4 L129.3,121.7 L127.0,124.3 L123.8,124.0 L121.9,126.9 L118.6,126.9 L117.0,129.9 L113.6,130.5 L112.6,133.5 L109.3,134.5 L108.7,137.5 L105.7,138.9 L105.6,141.9 L102.8,143.7 L103.3,146.6 L101.0,148.8 L102.2,151.6 L100.5,154.1 L102.3,156.7 L101.2,159.6 L103.5,161.9 L103.0,165.0 L105.8,167.0 L105.8,170.1 L108.9,171.7 L109.5,174.9 L112.7,175.9 L113.7,179.0 L116.9,179.4 L119.0,180.9 L121.0,182.0 L121.0,182.0 L123.1,182.9 L125.0,185.3 L128.1,184.6 L130.6,186.7 L133.6,185.5 L136.5,187.3 L139.3,185.7 L142.5,187.0 L144.8,185.0 L148.1,185.7 L150.0,183.3 L153.3,183.6 L154.7,180.8 L157.8,180.5 L158.5,177.5 L161.3,176.4 L161.4,173.2 L163.8,171.6 L163.4,168.3 L165.6,166.3 L164.7,163.0 L166.7,160.5 L165.4,157.4 L167.0,154.5 L165.3,151.7 L166.6,148.5 L164.6,146.0 L165.5,142.6 L163.4,140.5 L163.9,137.0 L161.7,135.4 L161.9,132.0 L159.6,130.8 L159.6,127.6 L157.4,126.9 L157.1,124.0 L155.0,123.9 L153.8,122.7 L152.7,121.8 L151.9,121.2Z" fill="url(#lg12_2)" stroke="#d02000" stroke-width="0.9" stroke-opacity="0.7"/><path d="M213.4,134.5 L213.9,134.6 L214.6,134.5 L215.4,134.3 L216.3,134.0 L217.2,135.1 L218.2,133.0 L219.3,133.9 L220.2,131.6 L221.6,132.3 L222.4,129.7 L224.0,130.2 L224.6,127.5 L226.4,127.6 L226.7,124.9 L228.7,124.8 L228.6,122.1 L230.7,121.6 L230.2,119.0 L232.4,118.1 L231.6,115.8 L233.7,114.5 L232.5,112.6 L234.5,110.9 L233.1,109.3 L234.7,107.4 L233.0,106.1 L234.3,103.9 L232.4,103.1 L233.2,100.7 L231.3,100.3 L231.7,97.9 L229.7,97.7 L229.7,95.3 L227.7,95.6 L227.4,93.3 L225.5,93.9 L224.9,91.7 L223.2,92.7 L222.0,92.3 L221.0,92.0 L221.0,92.0 L219.9,91.9 L218.8,90.3 L217.4,92.0 L216.0,90.6 L214.8,92.6 L213.1,91.5 L212.1,93.7 L210.3,92.9 L209.7,95.2 L207.7,94.8 L207.4,97.3 L205.4,97.3 L205.6,99.7 L203.6,100.1 L204.2,102.6 L202.3,103.4 L203.3,105.7 L201.5,106.9 L202.9,109.0 L201.3,110.7 L202.9,112.4 L201.5,114.5 L203.2,115.9 L202.1,118.3 L203.9,119.3 L203.0,121.9 L204.8,122.5 L204.3,125.2 L206.0,125.5 L205.8,128.2 L207.4,128.2 L207.3,130.8 L208.8,130.5 L208.9,132.9 L210.3,132.3 L210.5,134.6 L211.7,133.6 L212.4,134.1 L213.0,134.4 L213.4,134.5Z" fill="url(#lg12_3)" stroke="#d02000" stroke-width="0.9" stroke-opacity="0.7"/><path d="M289.9,126.7 L290.7,126.2 L291.8,125.4 L292.8,124.3 L293.9,123.0 L295.9,122.8 L296.0,119.8 L298.1,119.0 L298.0,115.8 L300.1,114.5 L299.7,111.1 L301.8,109.4 L301.0,106.0 L303.0,103.9 L301.9,100.6 L303.7,98.1 L302.2,95.0 L303.8,92.1 L301.9,89.4 L303.1,86.3 L301.0,83.9 L301.7,80.7 L299.4,78.8 L299.7,75.5 L297.1,74.1 L296.8,70.9 L294.0,70.1 L293.1,67.1 L290.0,66.9 L288.5,64.2 L285.5,64.6 L283.5,62.2 L280.5,63.1 L278.1,61.1 L275.3,62.4 L272.6,60.8 L270.1,62.6 L267.2,61.4 L265.1,63.5 L262.9,64.2 L261.0,65.0 L261.0,65.0 L259.2,66.0 L256.3,65.9 L255.3,68.7 L252.3,69.3 L251.6,72.3 L248.6,73.3 L248.4,76.5 L245.6,78.0 L245.9,81.1 L243.5,83.0 L244.3,86.0 L242.3,88.3 L243.7,91.1 L242.2,93.7 L244.2,96.1 L243.3,98.9 L245.8,101.0 L245.5,103.9 L248.4,105.6 L248.6,108.7 L251.7,110.0 L252.4,113.1 L255.5,114.0 L256.7,117.2 L259.9,117.6 L261.5,120.7 L264.5,120.7 L266.5,123.6 L269.3,123.2 L271.6,125.9 L274.1,125.2 L276.5,127.5 L278.6,126.5 L281.0,128.5 L282.7,127.3 L285.0,129.0 L286.3,127.4 L287.8,127.3 L289.1,127.0 L289.9,126.7Z" fill="url(#lg12_4)" stroke="#d02000" stroke-width="0.9" stroke-opacity="0.7"/><path d="M293.4,128.3 L293.8,129.2 L294.4,130.3 L295.3,131.5 L296.5,132.7 L296.4,134.6 L299.5,135.2 L299.9,137.3 L303.3,137.6 L304.2,139.8 L307.8,139.9 L309.2,142.1 L312.9,141.9 L314.8,144.1 L318.5,143.5 L320.8,145.6 L324.3,144.6 L327.0,146.5 L330.3,145.1 L333.4,146.7 L336.3,144.9 L339.6,146.1 L342.1,144.1 L345.5,144.9 L347.5,142.6 L351.0,142.8 L352.4,140.1 L355.8,139.6 L356.7,136.7 L359.8,135.7 L360.1,132.7 L363.0,131.0 L362.8,128.0 L365.4,126.0 L364.6,123.1 L366.8,120.7 L365.6,118.1 L367.3,115.5 L365.7,113.2 L365.4,110.9 L365.0,109.0 L365.0,109.0 L364.4,107.1 L364.9,104.4 L362.3,102.9 L362.3,100.1 L359.3,98.9 L358.8,96.0 L355.6,95.2 L354.6,92.4 L351.3,92.2 L349.7,89.6 L346.4,90.0 L344.4,87.7 L341.2,88.7 L338.8,86.9 L335.7,88.5 L333.0,87.2 L330.3,89.4 L327.2,88.7 L324.8,91.2 L321.5,90.9 L319.5,93.8 L315.9,94.0 L314.4,96.9 L310.8,97.6 L309.6,100.6 L306.1,101.8 L305.4,104.7 L301.9,106.2 L301.6,108.9 L298.4,110.8 L298.5,113.2 L295.6,115.2 L296.1,117.4 L293.6,119.5 L294.4,121.3 L292.3,123.3 L293.5,124.7 L293.3,126.2 L293.3,127.4 L293.4,128.3Z" fill="url(#lg12_5)" stroke="#d02000" stroke-width="0.9" stroke-opacity="0.7"/><path d="M291.9,131.3 L290.9,131.8 L289.6,132.6 L288.3,133.6 L286.9,134.9 L284.6,135.0 L284.0,138.0 L281.5,138.6 L281.2,141.8 L278.6,142.9 L278.6,146.3 L276.0,147.9 L276.3,151.2 L273.8,153.2 L274.4,156.5 L272.2,158.9 L273.2,161.9 L271.2,164.6 L272.6,167.4 L271.1,170.3 L272.8,172.7 L271.7,175.7 L273.8,177.7 L273.1,180.8 L275.5,182.3 L275.5,185.3 L278.3,186.3 L279.0,189.1 L282.2,189.4 L283.5,192.0 L286.9,191.8 L288.7,194.1 L292.2,193.4 L294.5,195.4 L297.8,194.2 L300.5,195.8 L303.6,194.1 L306.6,195.4 L309.2,193.3 L311.8,192.7 L314.0,192.0 L314.0,192.0 L316.2,191.1 L319.3,191.3 L321.0,188.5 L324.4,188.1 L325.6,185.1 L329.0,184.2 L329.8,181.2 L333.0,179.7 L333.2,176.7 L336.2,174.9 L335.8,172.0 L338.3,169.8 L337.3,167.1 L339.2,164.6 L337.6,162.2 L338.8,159.5 L336.5,157.4 L337.1,154.7 L334.4,152.9 L334.5,150.0 L331.5,148.6 L331.1,145.6 L327.9,144.5 L326.9,141.6 L323.6,141.0 L322.3,138.0 L319.0,137.9 L317.2,135.0 L314.1,135.3 L312.0,132.6 L309.2,133.3 L306.9,130.9 L304.4,131.8 L302.0,129.7 L300.0,131.0 L297.6,129.2 L296.0,130.8 L294.3,130.9 L292.9,131.1 L291.9,131.3Z" fill="url(#lg12_6)" stroke="#d02000" stroke-width="0.9" stroke-opacity="0.7"/><path d="M143.8,250.8 L144.1,250.1 L144.3,249.0 L144.5,247.8 L144.5,246.3 L145.9,245.3 L144.2,243.1 L145.4,241.6 L143.3,239.3 L144.3,237.5 L142.0,235.3 L142.7,233.1 L140.1,231.1 L140.5,228.7 L137.7,226.9 L137.8,224.2 L134.8,222.9 L134.5,220.0 L131.6,219.2 L130.8,216.3 L127.9,215.9 L126.8,213.0 L124.0,213.1 L122.5,210.4 L119.9,210.9 L117.9,208.6 L115.5,209.7 L113.2,207.8 L111.0,209.3 L108.5,208.0 L106.6,209.9 L103.9,209.0 L102.3,211.3 L99.5,210.9 L98.4,213.4 L95.6,213.4 L94.9,216.0 L92.2,216.4 L92.0,219.0 L90.9,220.5 L90.0,222.0 L90.0,222.0 L89.3,223.5 L87.1,224.8 L88.1,227.4 L86.1,229.1 L87.5,231.6 L85.9,233.7 L87.6,236.0 L86.3,238.4 L88.4,240.4 L87.6,243.0 L90.0,244.6 L89.7,247.2 L92.4,248.4 L92.6,251.0 L95.5,251.6 L96.2,254.2 L99.3,254.2 L100.5,256.6 L103.6,256.2 L105.3,258.5 L108.2,257.6 L110.4,259.7 L113.1,258.6 L115.7,260.4 L118.1,259.0 L120.9,260.5 L123.0,258.8 L126.0,260.1 L127.7,258.3 L130.8,259.2 L132.0,257.4 L135.1,258.0 L135.8,256.1 L138.8,256.5 L139.1,254.7 L141.8,254.8 L141.6,253.1 L142.6,252.2 L143.3,251.5 L143.8,250.8Z" fill="url(#lg12_7)" stroke="#d02000" stroke-width="0.9" stroke-opacity="0.7"/><path d="M144.7,254.2 L143.9,253.8 L142.7,253.4 L141.3,253.1 L139.7,252.9 L138.4,251.4 L136.0,252.9 L134.3,251.5 L131.8,253.4 L129.7,252.2 L127.3,254.4 L124.9,253.5 L122.7,255.9 L119.9,255.3 L118.0,257.9 L115.1,257.7 L113.6,260.5 L110.5,260.6 L109.5,263.5 L106.4,264.1 L105.9,266.9 L102.9,267.9 L102.8,270.7 L100.1,272.1 L100.5,274.7 L98.2,276.5 L99.3,279.1 L97.4,281.3 L99.1,283.7 L97.8,286.2 L99.9,288.4 L99.1,291.2 L101.5,293.0 L101.2,295.9 L104.0,297.3 L104.2,300.3 L107.1,301.2 L107.6,304.1 L110.5,304.5 L112.3,305.9 L114.0,307.0 L114.0,307.0 L115.8,307.9 L117.3,310.3 L120.1,309.6 L122.1,311.8 L124.9,310.6 L127.3,312.5 L129.9,311.0 L132.6,312.5 L134.8,310.6 L137.7,311.6 L139.4,309.4 L142.4,309.9 L143.6,307.4 L146.5,307.3 L147.2,304.5 L149.9,303.9 L150.0,300.8 L152.4,299.6 L152.1,296.6 L154.3,294.9 L153.6,291.9 L155.6,289.8 L154.4,286.9 L156.3,284.4 L154.7,281.8 L156.2,279.0 L154.5,276.7 L155.6,273.7 L153.7,271.8 L154.5,268.6 L152.5,267.2 L153.1,264.0 L151.0,263.0 L151.3,260.0 L149.2,259.5 L149.3,256.7 L147.3,256.7 L146.4,255.6 L145.5,254.7 L144.7,254.2Z" fill="url(#lg12_8)" stroke="#d02000" stroke-width="0.9" stroke-opacity="0.7"/><path d="M148.1,253.4 L147.6,254.2 L147.1,255.3 L146.7,256.6 L146.3,258.1 L144.5,259.1 L145.8,261.5 L144.1,263.0 L145.6,265.3 L144.1,267.2 L145.8,269.4 L144.5,271.7 L146.5,273.7 L145.4,276.3 L147.5,278.0 L146.8,280.8 L149.1,282.1 L148.7,285.0 L151.1,285.9 L151.1,288.8 L153.5,289.2 L153.9,292.0 L156.3,292.0 L157.1,294.6 L159.5,294.2 L160.7,296.4 L163.1,295.4 L164.7,297.1 L167.0,295.6 L168.9,296.9 L171.1,294.9 L173.4,295.8 L175.3,293.4 L177.8,293.9 L179.3,291.1 L182.0,291.2 L183.1,288.3 L185.8,288.0 L186.4,285.2 L187.8,283.5 L189.0,282.0 L189.0,282.0 L190.0,280.4 L192.5,279.1 L192.1,276.4 L194.5,274.6 L193.6,272.0 L195.8,269.8 L194.7,267.5 L196.5,264.9 L195.0,262.9 L196.4,260.2 L194.6,258.7 L195.5,255.9 L193.5,254.8 L193.9,252.1 L191.5,251.5 L191.4,249.0 L188.8,248.9 L188.1,246.6 L185.4,247.0 L184.3,244.8 L181.6,245.6 L180.1,243.6 L177.5,244.7 L175.6,242.9 L173.1,244.4 L170.9,242.9 L168.7,244.6 L166.3,243.4 L164.4,245.3 L161.7,244.3 L160.3,246.4 L157.6,245.6 L156.5,247.7 L153.8,247.2 L153.2,249.3 L150.7,249.0 L150.5,251.1 L149.5,251.9 L148.6,252.8 L148.1,253.4Z" fill="url(#lg12_9)" stroke="#d02000" stroke-width="0.9" stroke-opacity="0.7"/><path d="M208,181 L224,178 L238,182 L250,188 L256,194 L244,196 L230,193 L216,191 Z" fill="#c8e820"/><path d="M224,191 L234,205" stroke="#c8e820" stroke-width="2.5"/><path d="M194,179 L198,175 L197,169 L203,172 L208,167 L210,173 L216,173 L213,179 L217,184 L210,186 L209,192 L204,188 L198,191 L198,184 Z" fill="#c8e820"/><circle cx="204" cy="179" r="5" fill="#ffa000"/><path d="M256,173 Q262,163 270,169 Q272,181 262,185 Q254,181 256,173Z" fill="#c8e820"/><path d="M240,147 L246,159" stroke="#c8e820" stroke-width="4"/></g></svg>
<div style="left:2065px;top:247px;width:81px;height:13px;background:#00f8ff"></div>
<div class="t" style="left:2005.5px;width:200px;text-align:center;top:251.2px;font-size:6.8px;line-height:6.8px;color:#223;">Fp-median</div>
<div style="left:1901px;top:281px;width:81px;height:65px;background:#000"></div>
<svg style="left:1901px;top:281px" width="81" height="65"><defs><linearGradient id="lg20_0" gradientUnits="userSpaceOnUse" x1="153.0" y1="119.0" x2="91.0" y2="56.0"><stop offset="0" stop-color="#ffa800"/><stop offset="0.55" stop-color="#ffc400"/><stop offset="1" stop-color="#d8e800"/></linearGradient><linearGradient id="lg20_1" gradientUnits="userSpaceOnUse" x1="153.0" y1="119.0" x2="194.0" y2="73.0"><stop offset="0" stop-color="#ffb000"/><stop offset="0.55" stop-color="#ffc800"/><stop offset="1" stop-color="#b0f020"/></linearGradient><linearGradient id="lg20_2" gradientUnits="userSpaceOnUse" x1="153.0" y1="119.0" x2="121.0" y2="182.0"><stop offset="0" stop-color="#ff9c00"/><stop offset="0.55" stop-color="#ffb000"/><stop offset="1" stop-color="#ffc000"/></linearGradient><linearGradient id="lg20_3" gradientUnits="userSpaceOnUse" x1="213.0" y1="137.0" x2="221.0" y2="92.0"><stop offset="0" stop-color="#ffa000"/><stop offset="0.55" stop-color="#ffc000"/><stop offset="1" stop-color="#d8e810"/></linearGradient><linearGradient id="lg20_4" gradientUnits="userSpaceOnUse" x1="291.0" y1="129.0" x2="261.0" y2="65.0"><stop offset="0" stop-color="#ffb000"/><stop offset="0.55" stop-color="#ffc800"/><stop offset="1" stop-color="#e8e800"/></linearGradient><linearGradient id="lg20_5" gradientUnits="userSpaceOnUse" x1="291.0" y1="129.0" x2="365.0" y2="109.0"><stop offset="0" stop-color="#ffb800"/><stop offset="0.55" stop-color="#f0e800"/><stop offset="1" stop-color="#a0f820"/></linearGradient><linearGradient id="lg20_6" gradientUnits="userSpaceOnUse" x1="291.0" y1="129.0" x2="314.0" y2="192.0"><stop offset="0" stop-color="#ff9800"/><stop offset="0.55" stop-color="#ffa800"/><stop offset="1" stop-color="#ffb800"/></linearGradient><linearGradient id="lg20_7" gradientUnits="userSpaceOnUse" x1="146.0" y1="252.0" x2="90.0" y2="222.0"><stop offset="0" stop-color="#ffa800"/><stop offset="0.55" stop-color="#e8e000"/><stop offset="1" stop-color="#a8f820"/></linearGradient><linearGradient id="lg20_8" gradientUnits="userSpaceOnUse" x1="146.0" y1="252.0" x2="114.0" y2="307.0"><stop offset="0" stop-color="#ffc800"/><stop offset="0.55" stop-color="#f8ee00"/><stop offset="1" stop-color="#e8f000"/></linearGradient><linearGradient id="lg20_9" gradientUnits="userSpaceOnUse" x1="146.0" y1="252.0" x2="189.0" y2="282.0"><stop offset="0" stop-color="#ffc000"/><stop offset="0.55" stop-color="#f0e800"/><stop offset="1" stop-color="#e0e800"/></linearGradient></defs><g transform="scale(0.195)"><path d="M153,119 Q172,154 204,179" fill="none" stroke="#e03000" stroke-width="4.6"/><path d="M153,119 Q172,154 204,179" fill="none" stroke="#d8d800" stroke-width="3"/><path d="M213,137 Q208,157 204,179" fill="none" stroke="#e03000" stroke-width="4.6"/><path d="M213,137 Q208,157 204,179" fill="none" stroke="#d8d800" stroke-width="3"/><path d="M291,129 Q243,165 204,179" fill="none" stroke="#e03000" stroke-width="4.6"/><path d="M291,129 Q243,165 204,179" fill="none" stroke="#d8d800" stroke-width="3"/><path d="M146,252 Q175,222 204,179" fill="none" stroke="#e03000" stroke-width="4.6"/><path d="M146,252 Q175,222 204,179" fill="none" stroke="#d8d800" stroke-width="3"/><path d="M151.2,117.2 L151.8,116.4 L152.5,115.2 L153.1,113.7 L153.6,112.0 L155.3,110.9 L154.2,107.7 L155.7,106.1 L154.3,102.7 L155.6,100.6 L153.8,97.0 L154.9,94.5 L152.7,90.9 L153.5,88.0 L151.0,84.6 L151.5,81.3 L148.6,78.2 L148.7,74.6 L145.5,72.0 L145.2,68.2 L141.9,66.2 L141.0,62.4 L137.7,60.9 L136.4,57.1 L133.1,56.2 L131.2,52.8 L127.9,52.6 L125.4,49.7 L122.2,50.1 L119.3,47.7 L116.3,48.8 L113.1,46.9 L110.4,48.5 L107.0,47.2 L104.6,49.2 L101.2,48.4 L99.3,50.8 L95.9,50.6 L94.6,53.2 L92.6,54.6 L91.0,56.0 L91.0,56.0 L89.6,57.6 L86.9,58.6 L86.8,61.8 L84.3,63.4 L84.7,66.8 L82.5,68.9 L83.4,72.3 L81.6,74.9 L83.1,78.2 L81.8,81.1 L83.9,84.2 L83.0,87.3 L85.7,90.0 L85.5,93.3 L88.6,95.5 L89.1,98.8 L92.7,100.5 L93.9,103.8 L97.7,105.0 L99.4,108.3 L103.2,109.0 L105.5,112.3 L109.2,112.4 L112.0,115.5 L115.4,115.3 L118.6,118.0 L121.8,117.4 L125.2,119.8 L128.0,119.0 L131.6,121.0 L133.9,119.8 L137.4,121.5 L139.3,120.1 L142.6,121.4 L143.9,119.8 L146.9,120.7 L147.7,119.0 L149.3,118.4 L150.5,117.8 L151.2,117.2Z" fill="url(#lg20_0)" stroke="#d02000" stroke-width="0.9" stroke-opacity="0.7"/><path d="M154.7,117.1 L155.3,117.6 L156.4,118.2 L157.6,118.7 L159.1,119.1 L159.9,120.9 L162.5,119.8 L163.7,121.4 L166.4,120.1 L168.1,121.6 L170.8,119.9 L172.9,121.2 L175.4,119.3 L177.8,120.4 L180.1,118.2 L182.8,119.0 L184.7,116.6 L187.7,117.0 L189.1,114.5 L192.2,114.5 L193.2,111.9 L196.2,111.5 L196.8,108.9 L199.7,108.1 L199.7,105.5 L202.4,104.2 L201.8,101.6 L204.0,99.9 L202.9,97.3 L204.8,95.2 L203.2,92.8 L204.6,90.4 L202.6,88.2 L203.5,85.6 L201.2,83.8 L201.7,80.9 L199.2,79.6 L199.3,76.7 L196.7,75.9 L195.3,74.3 L194.0,73.0 L194.0,73.0 L192.6,71.8 L191.7,69.3 L188.9,69.6 L187.5,67.1 L184.7,67.7 L182.9,65.5 L180.2,66.5 L178.0,64.6 L175.6,66.1 L173.1,64.5 L171.0,66.4 L168.4,65.4 L166.7,67.6 L164.0,67.1 L162.8,69.7 L160.2,69.7 L159.5,72.6 L156.9,73.2 L156.7,76.3 L154.2,77.3 L154.4,80.4 L151.9,81.9 L152.5,84.9 L150.2,86.8 L151.2,89.6 L149.1,91.9 L150.4,94.4 L148.6,97.0 L150.1,99.2 L148.6,101.9 L150.2,103.7 L149.0,106.5 L150.7,107.8 L149.8,110.6 L151.6,111.4 L150.9,114.0 L152.8,114.4 L153.4,115.6 L154.1,116.5 L154.7,117.1Z" fill="url(#lg20_1)" stroke="#d02000" stroke-width="0.9" stroke-opacity="0.7"/><path d="M151.9,121.2 L150.9,120.9 L149.5,120.5 L147.9,120.3 L146.0,120.1 L144.4,118.6 L141.8,120.3 L139.8,119.0 L137.2,121.1 L134.7,120.1 L132.1,122.4 L129.3,121.7 L127.0,124.3 L123.8,124.0 L121.9,126.9 L118.6,126.9 L117.0,129.9 L113.6,130.5 L112.6,133.5 L109.3,134.5 L108.7,137.5 L105.7,138.9 L105.6,141.9 L102.8,143.7 L103.3,146.6 L101.0,148.8 L102.2,151.6 L100.5,154.1 L102.3,156.7 L101.2,159.6 L103.5,161.9 L103.0,165.0 L105.8,167.0 L105.8,170.1 L108.9,171.7 L109.5,174.9 L112.7,175.9 L113.7,179.0 L116.9,179.4 L119.0,180.9 L121.0,182.0 L121.0,182.0 L123.1,182.9 L125.0,185.3 L128.1,184.6 L130.6,186.7 L133.6,185.5 L136.5,187.3 L139.3,185.7 L142.5,187.0 L144.8,185.0 L148.1,185.7 L150.0,183.3 L153.3,183.6 L154.7,180.8 L157.8,180.5 L158.5,177.5 L161.3,176.4 L161.4,173.2 L163.8,171.6 L163.4,168.3 L165.6,166.3 L164.7,163.0 L166.7,160.5 L165.4,157.4 L167.0,154.5 L165.3,151.7 L166.6,148.5 L164.6,146.0 L165.5,142.6 L163.4,140.5 L163.9,137.0 L161.7,135.4 L161.9,132.0 L159.6,130.8 L159.6,127.6 L157.4,126.9 L157.1,124.0 L155.0,123.9 L153.8,122.7 L152.7,121.8 L151.9,121.2Z" fill="url(#lg20_2)" stroke="#d02000" stroke-width="0.9" stroke-opacity="0.7"/><path d="M213.4,134.5 L213.9,134.6 L214.6,134.5 L215.4,134.3 L216.3,134.0 L217.2,135.1 L218.2,133.0 L219.3,133.9 L220.2,131.6 L221.6,132.3 L222.4,129.7 L224.0,130.2 L224.6,127.5 L226.4,127.6 L226.7,124.9 L228.7,124.8 L228.6,122.1 L230.7,121.6 L230.2,119.0 L232.4,118.1 L231.6,115.8 L233.7,114.5 L232.5,112.6 L234.5,110.9 L233.1,109.3 L234.7,107.4 L233.0,106.1 L234.3,103.9 L232.4,103.1 L233.2,100.7 L231.3,100.3 L231.7,97.9 L229.7,97.7 L229.7,95.3 L227.7,95.6 L227.4,93.3 L225.5,93.9 L224.9,91.7 L223.2,92.7 L222.0,92.3 L221.0,92.0 L221.0,92.0 L219.9,91.9 L218.8,90.3 L217.4,92.0 L216.0,90.6 L214.8,92.6 L213.1,91.5 L212.1,93.7 L210.3,92.9 L209.7,95.2 L207.7,94.8 L207.4,97.3 L205.4,97.3 L205.6,99.7 L203.6,100.1 L204.2,102.6 L202.3,103.4 L203.3,105.7 L201.5,106.9 L202.9,109.0 L201.3,110.7 L202.9,112.4 L201.5,114.5 L203.2,115.9 L202.1,118.3 L203.9,119.3 L203.0,121.9 L204.8,122.5 L204.3,125.2 L206.0,125.5 L205.8,128.2 L207.4,128.2 L207.3,130.8 L208.8,130.5 L208.9,132.9 L210.3,132.3 L210.5,134.6 L211.7,133.6 L212.4,134.1 L213.0,134.4 L213.4,134.5Z" fill="url(#lg20_3)" stroke="#d02000" stroke-width="0.9" stroke-opacity="0.7"/><path d="M289.9,126.7 L290.7,126.2 L291.8,125.4 L292.8,124.3 L293.9,123.0 L295.9,122.8 L296.0,119.8 L298.1,119.0 L298.0,115.8 L300.1,114.5 L299.7,111.1 L301.8,109.4 L301.0,106.0 L303.0,103.9 L301.9,100.6 L303.7,98.1 L302.2,95.0 L303.8,92.1 L301.9,89.4 L303.1,86.3 L301.0,83.9 L301.7,80.7 L299.4,78.8 L299.7,75.5 L297.1,74.1 L296.8,70.9 L294.0,70.1 L293.1,67.1 L290.0,66.9 L288.5,64.2 L285.5,64.6 L283.5,62.2 L280.5,63.1 L278.1,61.1 L275.3,62.4 L272.6,60.8 L270.1,62.6 L267.2,61.4 L265.1,63.5 L262.9,64.2 L261.0,65.0 L261.0,65.0 L259.2,66.0 L256.3,65.9 L255.3,68.7 L252.3,69.3 L251.6,72.3 L248.6,73.3 L248.4,76.5 L245.6,78.0 L245.9,81.1 L243.5,83.0 L244.3,86.0 L242.3,88.3 L243.7,91.1 L242.2,93.7 L244.2,96.1 L243.3,98.9 L245.8,101.0 L245.5,103.9 L248.4,105.6 L248.6,108.7 L251.7,110.0 L252.4,113.1 L255.5,114.0 L256.7,117.2 L259.9,117.6 L261.5,120.7 L264.5,120.7 L266.5,123.6 L269.3,123.2 L271.6,125.9 L274.1,125.2 L276.5,127.5 L278.6,126.5 L281.0,128.5 L282.7,127.3 L285.0,129.0 L286.3,127.4 L287.8,127.3 L289.1,127.0 L289.9,126.7Z" fill="url(#lg20_4)" stroke="#d02000" stroke-width="0.9" stroke-opacity="0.7"/><path d="M293.4,128.3 L293.8,129.2 L294.4,130.3 L295.3,131.5 L296.5,132.7 L296.4,134.6 L299.5,135.2 L299.9,137.3 L303.3,137.6 L304.2,139.8 L307.8,139.9 L309.2,142.1 L312.9,141.9 L314.8,144.1 L318.5,143.5 L320.8,145.6 L324.3,144.6 L327.0,146.5 L330.3,145.1 L333.4,146.7 L336.3,144.9 L339.6,146.1 L342.1,144.1 L345.5,144.9 L347.5,142.6 L351.0,142.8 L352.4,140.1 L355.8,139.6 L356.7,136.7 L359.8,135.7 L360.1,132.7 L363.0,131.0 L362.8,128.0 L365.4,126.0 L364.6,123.1 L366.8,120.7 L365.6,118.1 L367.3,115.5 L365.7,113.2 L365.4,110.9 L365.0,109.0 L365.0,109.0 L364.4,107.1 L364.9,104.4 L362.3,102.9 L362.3,100.1 L359.3,98.9 L358.8,96.0 L355.6,95.2 L354.6,92.4 L351.3,92.2 L349.7,89.6 L346.4,90.0 L344.4,87.7 L341.2,88.7 L338.8,86.9 L335.7,88.5 L333.0,87.2 L330.3,89.4 L327.2,88.7 L324.8,91.2 L321.5,90.9 L319.5,93.8 L315.9,94.0 L314.4,96.9 L310.8,97.6 L309.6,100.6 L306.1,101.8 L305.4,104.7 L301.9,106.2 L301.6,108.9 L298.4,110.8 L298.5,113.2 L295.6,115.2 L296.1,117.4 L293.6,119.5 L294.4,121.3 L292.3,123.3 L293.5,124.7 L293.3,126.2 L293.3,127.4 L293.4,128.3Z" fill="url(#lg20_5)" stroke="#d02000" stroke-width="0.9" stroke-opacity="0.7"/><path d="M291.9,131.3 L290.9,131.8 L289.6,132.6 L288.3,133.6 L286.9,134.9 L284.6,135.0 L284.0,138.0 L281.5,138.6 L281.2,141.8 L278.6,142.9 L278.6,146.3 L276.0,147.9 L276.3,151.2 L273.8,153.2 L274.4,156.5 L272.2,158.9 L273.2,161.9 L271.2,164.6 L272.6,167.4 L271.1,170.3 L272.8,172.7 L271.7,175.7 L273.8,177.7 L273.1,180.8 L275.5,182.3 L275.5,185.3 L278.3,186.3 L279.0,189.1 L282.2,189.4 L283.5,192.0 L286.9,191.8 L288.7,194.1 L292.2,193.4 L294.5,195.4 L297.8,194.2 L300.5,195.8 L303.6,194.1 L306.6,195.4 L309.2,193.3 L311.8,192.7 L314.0,192.0 L314.0,192.0 L316.2,191.1 L319.3,191.3 L321.0,188.5 L324.4,188.1 L325.6,185.1 L329.0,184.2 L329.8,181.2 L333.0,179.7 L333.2,176.7 L336.2,174.9 L335.8,172.0 L338.3,169.8 L337.3,167.1 L339.2,164.6 L337.6,162.2 L338.8,159.5 L336.5,157.4 L337.1,154.7 L334.4,152.9 L334.5,150.0 L331.5,148.6 L331.1,145.6 L327.9,144.5 L326.9,141.6 L323.6,141.0 L322.3,138.0 L319.0,137.9 L317.2,135.0 L314.1,135.3 L312.0,132.6 L309.2,133.3 L306.9,130.9 L304.4,131.8 L302.0,129.7 L300.0,131.0 L297.6,129.2 L296.0,130.8 L294.3,130.9 L292.9,131.1 L291.9,131.3Z" fill="url(#lg20_6)" stroke="#d02000" stroke-width="0.9" stroke-opacity="0.7"/><path d="M143.8,250.8 L144.1,250.1 L144.3,249.0 L144.5,247.8 L144.5,246.3 L145.9,245.3 L144.2,243.1 L145.4,241.6 L143.3,239.3 L144.3,237.5 L142.0,235.3 L142.7,233.1 L140.1,231.1 L140.5,228.7 L137.7,226.9 L137.8,224.2 L134.8,222.9 L134.5,220.0 L131.6,219.2 L130.8,216.3 L127.9,215.9 L126.8,213.0 L124.0,213.1 L122.5,210.4 L119.9,210.9 L117.9,208.6 L115.5,209.7 L113.2,207.8 L111.0,209.3 L108.5,208.0 L106.6,209.9 L103.9,209.0 L102.3,211.3 L99.5,210.9 L98.4,213.4 L95.6,213.4 L94.9,216.0 L92.2,216.4 L92.0,219.0 L90.9,220.5 L90.0,222.0 L90.0,222.0 L89.3,223.5 L87.1,224.8 L88.1,227.4 L86.1,229.1 L87.5,231.6 L85.9,233.7 L87.6,236.0 L86.3,238.4 L88.4,240.4 L87.6,243.0 L90.0,244.6 L89.7,247.2 L92.4,248.4 L92.6,251.0 L95.5,251.6 L96.2,254.2 L99.3,254.2 L100.5,256.6 L103.6,256.2 L105.3,258.5 L108.2,257.6 L110.4,259.7 L113.1,258.6 L115.7,260.4 L118.1,259.0 L120.9,260.5 L123.0,258.8 L126.0,260.1 L127.7,258.3 L130.8,259.2 L132.0,257.4 L135.1,258.0 L135.8,256.1 L138.8,256.5 L139.1,254.7 L141.8,254.8 L141.6,253.1 L142.6,252.2 L143.3,251.5 L143.8,250.8Z" fill="url(#lg20_7)" stroke="#d02000" stroke-width="0.9" stroke-opacity="0.7"/><path d="M144.7,254.2 L143.9,253.8 L142.7,253.4 L141.3,253.1 L139.7,252.9 L138.4,251.4 L136.0,252.9 L134.3,251.5 L131.8,253.4 L129.7,252.2 L127.3,254.4 L124.9,253.5 L122.7,255.9 L119.9,255.3 L118.0,257.9 L115.1,257.7 L113.6,260.5 L110.5,260.6 L109.5,263.5 L106.4,264.1 L105.9,266.9 L102.9,267.9 L102.8,270.7 L100.1,272.1 L100.5,274.7 L98.2,276.5 L99.3,279.1 L97.4,281.3 L99.1,283.7 L97.8,286.2 L99.9,288.4 L99.1,291.2 L101.5,293.0 L101.2,295.9 L104.0,297.3 L104.2,300.3 L107.1,301.2 L107.6,304.1 L110.5,304.5 L112.3,305.9 L114.0,307.0 L114.0,307.0 L115.8,307.9 L117.3,310.3 L120.1,309.6 L122.1,311.8 L124.9,310.6 L127.3,312.5 L129.9,311.0 L132.6,312.5 L134.8,310.6 L137.7,311.6 L139.4,309.4 L142.4,309.9 L143.6,307.4 L146.5,307.3 L147.2,304.5 L149.9,303.9 L150.0,300.8 L152.4,299.6 L152.1,296.6 L154.3,294.9 L153.6,291.9 L155.6,289.8 L154.4,286.9 L156.3,284.4 L154.7,281.8 L156.2,279.0 L154.5,276.7 L155.6,273.7 L153.7,271.8 L154.5,268.6 L152.5,267.2 L153.1,264.0 L151.0,263.0 L151.3,260.0 L149.2,259.5 L149.3,256.7 L147.3,256.7 L146.4,255.6 L145.5,254.7 L144.7,254.2Z" fill="url(#lg20_8)" stroke="#d02000" stroke-width="0.9" stroke-opacity="0.7"/><path d="M148.1,253.4 L147.6,254.2 L147.1,255.3 L146.7,256.6 L146.3,258.1 L144.5,259.1 L145.8,261.5 L144.1,263.0 L145.6,265.3 L144.1,267.2 L145.8,269.4 L144.5,271.7 L146.5,273.7 L145.4,276.3 L147.5,278.0 L146.8,280.8 L149.1,282.1 L148.7,285.0 L151.1,285.9 L151.1,288.8 L153.5,289.2 L153.9,292.0 L156.3,292.0 L157.1,294.6 L159.5,294.2 L160.7,296.4 L163.1,295.4 L164.7,297.1 L167.0,295.6 L168.9,296.9 L171.1,294.9 L173.4,295.8 L175.3,293.4 L177.8,293.9 L179.3,291.1 L182.0,291.2 L183.1,288.3 L185.8,288.0 L186.4,285.2 L187.8,283.5 L189.0,282.0 L189.0,282.0 L190.0,280.4 L192.5,279.1 L192.1,276.4 L194.5,274.6 L193.6,272.0 L195.8,269.8 L194.7,267.5 L196.5,264.9 L195.0,262.9 L196.4,260.2 L194.6,258.7 L195.5,255.9 L193.5,254.8 L193.9,252.1 L191.5,251.5 L191.4,249.0 L188.8,248.9 L188.1,246.6 L185.4,247.0 L184.3,244.8 L181.6,245.6 L180.1,243.6 L177.5,244.7 L175.6,242.9 L173.1,244.4 L170.9,242.9 L168.7,244.6 L166.3,243.4 L164.4,245.3 L161.7,244.3 L160.3,246.4 L157.6,245.6 L156.5,247.7 L153.8,247.2 L153.2,249.3 L150.7,249.0 L150.5,251.1 L149.5,251.9 L148.6,252.8 L148.1,253.4Z" fill="url(#lg20_9)" stroke="#d02000" stroke-width="0.9" stroke-opacity="0.7"/><path d="M208,181 L224,178 L238,182 L250,188 L256,194 L244,196 L230,193 L216,191 Z" fill="#c8e820"/><path d="M224,191 L234,205" stroke="#c8e820" stroke-width="2.5"/><path d="M194,179 L198,175 L197,169 L203,172 L208,167 L210,173 L216,173 L213,179 L217,184 L210,186 L209,192 L204,188 L198,191 L198,184 Z" fill="#c8e820"/><circle cx="204" cy="179" r="5" fill="#ffa000"/><path d="M256,173 Q262,163 270,169 Q272,181 262,185 Q254,181 256,173Z" fill="#c8e820"/><path d="M240,147 L246,159" stroke="#c8e820" stroke-width="4"/></g></svg>
<div style="left:1901px;top:346px;width:81px;height:13px;background:#00f8ff"></div>
<div class="t" style="left:1841.5px;width:200px;text-align:center;top:350.2px;font-size:6.8px;line-height:6.8px;color:#223;">Fp-gauss</div>
<div style="left:1983px;top:281px;width:81px;height:65px;background:#000"></div>
<svg style="left:1983px;top:281px" width="81" height="65"><defs><linearGradient id="lg21_0" gradientUnits="userSpaceOnUse" x1="153.0" y1="119.0" x2="91.0" y2="56.0"><stop offset="0" stop-color="#ffa800"/><stop offset="0.55" stop-color="#ffc400"/><stop offset="1" stop-color="#d8e800"/></linearGradient><linearGradient id="lg21_1" gradientUnits="userSpaceOnUse" x1="153.0" y1="119.0" x2="194.0" y2="73.0"><stop offset="0" stop-color="#ffb000"/><stop offset="0.55" stop-color="#ffc800"/><stop offset="1" stop-color="#b0f020"/></linearGradient><linearGradient id="lg21_2" gradientUnits="userSpaceOnUse" x1="153.0" y1="119.0" x2="121.0" y2="182.0"><stop offset="0" stop-color="#ff9c00"/><stop offset="0.55" stop-color="#ffb000"/><stop offset="1" stop-color="#ffc000"/></linearGradient><linearGradient id="lg21_3" gradientUnits="userSpaceOnUse" x1="213.0" y1="137.0" x2="221.0" y2="92.0"><stop offset="0" stop-color="#ffa000"/><stop offset="0.55" stop-color="#ffc000"/><stop offset="1" stop-color="#d8e810"/></linearGradient><linearGradient id="lg21_4" gradientUnits="userSpaceOnUse" x1="291.0" y1="129.0" x2="261.0" y2="65.0"><stop offset="0" stop-color="#ffb000"/><stop offset="0.55" stop-color="#ffc800"/><stop offset="1" stop-color="#e8e800"/></linearGradient><linearGradient id="lg21_5" gradientUnits="userSpaceOnUse" x1="291.0" y1="129.0" x2="365.0" y2="109.0"><stop offset="0" stop-color="#ffb800"/><stop offset="0.55" stop-color="#f0e800"/><stop offset="1" stop-color="#a0f820"/></linearGradient><linearGradient id="lg21_6" gradientUnits="userSpaceOnUse" x1="291.0" y1="129.0" x2="314.0" y2="192.0"><stop offset="0" stop-color="#ff9800"/><stop offset="0.55" stop-color="#ffa800"/><stop offset="1" stop-color="#ffb800"/></linearGradient><linearGradient id="lg21_7" gradientUnits="userSpaceOnUse" x1="146.0" y1="252.0" x2="90.0" y2="222.0"><stop offset="0" stop-color="#ffa800"/><stop offset="0.55" stop-color="#e8e000"/><stop offset="1" stop-color="#a8f820"/></linearGradient><linearGradient id="lg21_8" gradientUnits="userSpaceOnUse" x1="146.0" y1="252.0" x2="114.0" y2="307.0"><stop offset="0" stop-color="#ffc800"/><stop offset="0.55" stop-color="#f8ee00"/><stop offset="1" stop-color="#e8f000"/></linearGradient><linearGradient id="lg21_9" gradientUnits="userSpaceOnUse" x1="146.0" y1="252.0" x2="189.0" y2="282.0"><stop offset="0" stop-color="#ffc000"/><stop offset="0.55" stop-color="#f0e800"/><stop offset="1" stop-color="#e0e800"/></linearGradient></defs><g transform="scale(0.195)"><path d="M153,119 Q172,154 204,179" fill="none" stroke="#e03000" stroke-width="4.6"/><path d="M153,119 Q172,154 204,179" fill="none" stroke="#d8d800" stroke-width="3"/><path d="M213,137 Q208,157 204,179" fill="none" stroke="#e03000" stroke-width="4.6"/><path d="M213,137 Q208,157 204,179" fill="none" stroke="#d8d800" stroke-width="3"/><path d="M291,129 Q243,165 204,179" fill="none" stroke="#e03000" stroke-width="4.6"/><path d="M291,129 Q243,165 204,179" fill="none" stroke="#d8d800" stroke-width="3"/><path d="M146,252 Q175,222 204,179" fill="none" stroke="#e03000" stroke-width="4.6"/><path d="M146,252 Q175,222 204,179" fill="none" stroke="#d8d800" stroke-width="3"/><path d="M151.2,117.2 L151.8,116.4 L152.5,115.2 L153.1,113.7 L153.6,112.0 L155.3,110.9 L154.2,107.7 L155.7,106.1 L154.3,102.7 L155.6,100.6 L153.8,97.0 L154.9,94.5 L152.7,90.9 L153.5,88.0 L151.0,84.6 L151.5,81.3 L148.6,78.2 L148.7,74.6 L145.5,72.0 L145.2,68.2 L141.9,66.2 L141.0,62.4 L137.7,60.9 L136.4,57.1 L133.1,56.2 L131.2,52.8 L127.9,52.6 L125.4,49.7 L122.2,50.1 L119.3,47.7 L116.3,48.8 L113.1,46.9 L110.4,48.5 L107.0,47.2 L104.6,49.2 L101.2,48.4 L99.3,50.8 L95.9,50.6 L94.6,53.2 L92.6,54.6 L91.0,56.0 L91.0,56.0 L89.6,57.6 L86.9,58.6 L86.8,61.8 L84.3,63.4 L84.7,66.8 L82.5,68.9 L83.4,72.3 L81.6,74.9 L83.1,78.2 L81.8,81.1 L83.9,84.2 L83.0,87.3 L85.7,90.0 L85.5,93.3 L88.6,95.5 L89.1,98.8 L92.7,100.5 L93.9,103.8 L97.7,105.0 L99.4,108.3 L103.2,109.0 L105.5,112.3 L109.2,112.4 L112.0,115.5 L115.4,115.3 L118.6,118.0 L121.8,117.4 L125.2,119.8 L128.0,119.0 L131.6,121.0 L133.9,119.8 L137.4,121.5 L139.3,120.1 L142.6,121.4 L143.9,119.8 L146.9,120.7 L147.7,119.0 L149.3,118.4 L150.5,117.8 L151.2,117.2Z" fill="url(#lg21_0)" stroke="#d02000" stroke-width="0.9" stroke-opacity="0.7"/><path d="M154.7,117.1 L155.3,117.6 L156.4,118.2 L157.6,118.7 L159.1,119.1 L159.9,120.9 L162.5,119.8 L163.7,121.4 L166.4,120.1 L168.1,121.6 L170.8,119.9 L172.9,121.2 L175.4,119.3 L177.8,120.4 L180.1,118.2 L182.8,119.0 L184.7,116.6 L187.7,117.0 L189.1,114.5 L192.2,114.5 L193.2,111.9 L196.2,111.5 L196.8,108.9 L199.7,108.1 L199.7,105.5 L202.4,104.2 L201.8,101.6 L204.0,99.9 L202.9,97.3 L204.8,95.2 L203.2,92.8 L204.6,90.4 L202.6,88.2 L203.5,85.6 L201.2,83.8 L201.7,80.9 L199.2,79.6 L199.3,76.7 L196.7,75.9 L195.3,74.3 L194.0,73.0 L194.0,73.0 L192.6,71.8 L191.7,69.3 L188.9,69.6 L187.5,67.1 L184.7,67.7 L182.9,65.5 L180.2,66.5 L178.0,64.6 L175.6,66.1 L173.1,64.5 L171.0,66.4 L168.4,65.4 L166.7,67.6 L164.0,67.1 L162.8,69.7 L160.2,69.7 L159.5,72.6 L156.9,73.2 L156.7,76.3 L154.2,77.3 L154.4,80.4 L151.9,81.9 L152.5,84.9 L150.2,86.8 L151.2,89.6 L149.1,91.9 L150.4,94.4 L148.6,97.0 L150.1,99.2 L148.6,101.9 L150.2,103.7 L149.0,106.5 L150.7,107.8 L149.8,110.6 L151.6,111.4 L150.9,114.0 L152.8,114.4 L153.4,115.6 L154.1,116.5 L154.7,117.1Z" fill="url(#lg21_1)" stroke="#d02000" stroke-width="0.9" stroke-opacity="0.7"/><path d="M151.9,121.2 L150.9,120.9 L149.5,120.5 L147.9,120.3 L146.0,120.1 L144.4,118.6 L141.8,120.3 L139.8,119.0 L137.2,121.1 L134.7,120.1 L132.1,122.4 L129.3,121.7 L127.0,124.3 L123.8,124.0 L121.9,126.9 L118.6,126.9 L117.0,129.9 L113.6,130.5 L112.6,133.5 L109.3,134.5 L108.7,137.5 L105.7,138.9 L105.6,141.9 L102.8,143.7 L103.3,146.6 L101.0,148.8 L102.2,151.6 L100.5,154.1 L102.3,156.7 L101.2,159.6 L103.5,161.9 L103.0,165.0 L105.8,167.0 L105.8,170.1 L108.9,171.7 L109.5,174.9 L112.7,175.9 L113.7,179.0 L116.9,179.4 L119.0,180.9 L121.0,182.0 L121.0,182.0 L123.1,182.9 L125.0,185.3 L128.1,184.6 L130.6,186.7 L133.6,185.5 L136.5,187.3 L139.3,185.7 L142.5,187.0 L144.8,185.0 L148.1,185.7 L150.0,183.3 L153.3,183.6 L154.7,180.8 L157.8,180.5 L158.5,177.5 L161.3,176.4 L161.4,173.2 L163.8,171.6 L163.4,168.3 L165.6,166.3 L164.7,163.0 L166.7,160.5 L165.4,157.4 L167.0,154.5 L165.3,151.7 L166.6,148.5 L164.6,146.0 L165.5,142.6 L163.4,140.5 L163.9,137.0 L161.7,135.4 L161.9,132.0 L159.6,130.8 L159.6,127.6 L157.4,126.9 L157.1,124.0 L155.0,123.9 L153.8,122.7 L152.7,121.8 L151.9,121.2Z" fill="url(#lg21_2)" stroke="#d02000" stroke-width="0.9" stroke-opacity="0.7"/><path d="M213.4,134.5 L213.9,134.6 L214.6,134.5 L215.4,134.3 L216.3,134.0 L217.2,135.1 L218.2,133.0 L219.3,133.9 L220.2,131.6 L221.6,132.3 L222.4,129.7 L224.0,130.2 L224.6,127.5 L226.4,127.6 L226.7,124.9 L228.7,124.8 L228.6,122.1 L230.7,121.6 L230.2,119.0 L232.4,118.1 L231.6,115.8 L233.7,114.5 L232.5,112.6 L234.5,110.9 L233.1,109.3 L234.7,107.4 L233.0,106.1 L234.3,103.9 L232.4,103.1 L233.2,100.7 L231.3,100.3 L231.7,97.9 L229.7,97.7 L229.7,95.3 L227.7,95.6 L227.4,93.3 L225.5,93.9 L224.9,91.7 L223.2,92.7 L222.0,92.3 L221.0,92.0 L221.0,92.0 L219.9,91.9 L218.8,90.3 L217.4,92.0 L216.0,90.6 L214.8,92.6 L213.1,91.5 L212.1,93.7 L210.3,92.9 L209.7,95.2 L207.7,94.8 L207.4,97.3 L205.4,97.3 L205.6,99.7 L203.6,100.1 L204.2,102.6 L202.3,103.4 L203.3,105.7 L201.5,106.9 L202.9,109.0 L201.3,110.7 L202.9,112.4 L201.5,114.5 L203.2,115.9 L202.1,118.3 L203.9,119.3 L203.0,121.9 L204.8,122.5 L204.3,125.2 L206.0,125.5 L205.8,128.2 L207.4,128.2 L207.3,130.8 L208.8,130.5 L208.9,132.9 L210.3,132.3 L210.5,134.6 L211.7,133.6 L212.4,134.1 L213.0,134.4 L213.4,134.5Z" fill="url(#lg21_3)" stroke="#d02000" stroke-width="0.9" stroke-opacity="0.7"/><path d="M289.9,126.7 L290.7,126.2 L291.8,125.4 L292.8,124.3 L293.9,123.0 L295.9,122.8 L296.0,119.8 L298.1,119.0 L298.0,115.8 L300.1,114.5 L299.7,111.1 L301.8,109.4 L301.0,106.0 L303.0,103.9 L301.9,100.6 L303.7,98.1 L302.2,95.0 L303.8,92.1 L301.9,89.4 L303.1,86.3 L301.0,83.9 L301.7,80.7 L299.4,78.8 L299.7,75.5 L297.1,74.1 L296.8,70.9 L294.0,70.1 L293.1,67.1 L290.0,66.9 L288.5,64.2 L285.5,64.6 L283.5,62.2 L280.5,63.1 L278.1,61.1 L275.3,62.4 L272.6,60.8 L270.1,62.6 L267.2,61.4 L265.1,63.5 L262.9,64.2 L261.0,65.0 L261.0,65.0 L259.2,66.0 L256.3,65.9 L255.3,68.7 L252.3,69.3 L251.6,72.3 L248.6,73.3 L248.4,76.5 L245.6,78.0 L245.9,81.1 L243.5,83.0 L244.3,86.0 L242.3,88.3 L243.7,91.1 L242.2,93.7 L244.2,96.1 L243.3,98.9 L245.8,101.0 L245.5,103.9 L248.4,105.6 L248.6,108.7 L251.7,110.0 L252.4,113.1 L255.5,114.0 L256.7,117.2 L259.9,117.6 L261.5,120.7 L264.5,120.7 L266.5,123.6 L269.3,123.2 L271.6,125.9 L274.1,125.2 L276.5,127.5 L278.6,126.5 L281.0,128.5 L282.7,127.3 L285.0,129.0 L286.3,127.4 L287.8,127.3 L289.1,127.0 L289.9,126.7Z" fill="url(#lg21_4)" stroke="#d02000" stroke-width="0.9" stroke-opacity="0.7"/><path d="M293.4,128.3 L293.8,129.2 L294.4,130.3 L295.3,131.5 L296.5,132.7 L296.4,134.6 L299.5,135.2 L299.9,137.3 L303.3,137.6 L304.2,139.8 L307.8,139.9 L309.2,142.1 L312.9,141.9 L314.8,144.1 L318.5,143.5 L320.8,145.6 L324.3,144.6 L327.0,146.5 L330.3,145.1 L333.4,146.7 L336.3,144.9 L339.6,146.1 L342.1,144.1 L345.5,144.9 L347.5,142.6 L351.0,142.8 L352.4,140.1 L355.8,139.6 L356.7,136.7 L359.8,135.7 L360.1,132.7 L363.0,131.0 L362.8,128.0 L365.4,126.0 L364.6,123.1 L366.8,120.7 L365.6,118.1 L367.3,115.5 L365.7,113.2 L365.4,110.9 L365.0,109.0 L365.0,109.0 L364.4,107.1 L364.9,104.4 L362.3,102.9 L362.3,100.1 L359.3,98.9 L358.8,96.0 L355.6,95.2 L354.6,92.4 L351.3,92.2 L349.7,89.6 L346.4,90.0 L344.4,87.7 L341.2,88.7 L338.8,86.9 L335.7,88.5 L333.0,87.2 L330.3,89.4 L327.2,88.7 L324.8,91.2 L321.5,90.9 L319.5,93.8 L315.9,94.0 L314.4,96.9 L310.8,97.6 L309.6,100.6 L306.1,101.8 L305.4,104.7 L301.9,106.2 L301.6,108.9 L298.4,110.8 L298.5,113.2 L295.6,115.2 L296.1,117.4 L293.6,119.5 L294.4,121.3 L292.3,123.3 L293.5,124.7 L293.3,126.2 L293.3,127.4 L293.4,128.3Z" fill="url(#lg21_5)" stroke="#d02000" stroke-width="0.9" stroke-opacity="0.7"/><path d="M291.9,131.3 L290.9,131.8 L289.6,132.6 L288.3,133.6 L286.9,134.9 L284.6,135.0 L284.0,138.0 L281.5,138.6 L281.2,141.8 L278.6,142.9 L278.6,146.3 L276.0,147.9 L276.3,151.2 L273.8,153.2 L274.4,156.5 L272.2,158.9 L273.2,161.9 L271.2,164.6 L272.6,167.4 L271.1,170.3 L272.8,172.7 L271.7,175.7 L273.8,177.7 L273.1,180.8 L275.5,182.3 L275.5,185.3 L278.3,186.3 L279.0,189.1 L282.2,189.4 L283.5,192.0 L286.9,191.8 L288.7,194.1 L292.2,193.4 L294.5,195.4 L297.8,194.2 L300.5,195.8 L303.6,194.1 L306.6,195.4 L309.2,193.3 L311.8,192.7 L314.0,192.0 L314.0,192.0 L316.2,191.1 L319.3,191.3 L321.0,188.5 L324.4,188.1 L325.6,185.1 L329.0,184.2 L329.8,181.2 L333.0,179.7 L333.2,176.7 L336.2,174.9 L335.8,172.0 L338.3,169.8 L337.3,167.1 L339.2,164.6 L337.6,162.2 L338.8,159.5 L336.5,157.4 L337.1,154.7 L334.4,152.9 L334.5,150.0 L331.5,148.6 L331.1,145.6 L327.9,144.5 L326.9,141.6 L323.6,141.0 L322.3,138.0 L319.0,137.9 L317.2,135.0 L314.1,135.3 L312.0,132.6 L309.2,133.3 L306.9,130.9 L304.4,131.8 L302.0,129.7 L300.0,131.0 L297.6,129.2 L296.0,130.8 L294.3,130.9 L292.9,131.1 L291.9,131.3Z" fill="url(#lg21_6)" stroke="#d02000" stroke-width="0.9" stroke-opacity="0.7"/><path d="M143.8,250.8 L144.1,250.1 L144.3,249.0 L144.5,247.8 L144.5,246.3 L145.9,245.3 L144.2,243.1 L145.4,241.6 L143.3,239.3 L144.3,237.5 L142.0,235.3 L142.7,233.1 L140.1,231.1 L140.5,228.7 L137.7,226.9 L137.8,224.2 L134.8,222.9 L134.5,220.0 L131.6,219.2 L130.8,216.3 L127.9,215.9 L126.8,213.0 L124.0,213.1 L122.5,210.4 L119.9,210.9 L117.9,208.6 L115.5,209.7 L113.2,207.8 L111.0,209.3 L108.5,208.0 L106.6,209.9 L103.9,209.0 L102.3,211.3 L99.5,210.9 L98.4,213.4 L95.6,213.4 L94.9,216.0 L92.2,216.4 L92.0,219.0 L90.9,220.5 L90.0,222.0 L90.0,222.0 L89.3,223.5 L87.1,224.8 L88.1,227.4 L86.1,229.1 L87.5,231.6 L85.9,233.7 L87.6,236.0 L86.3,238.4 L88.4,240.4 L87.6,243.0 L90.0,244.6 L89.7,247.2 L92.4,248.4 L92.6,251.0 L95.5,251.6 L96.2,254.2 L99.3,254.2 L100.5,256.6 L103.6,256.2 L105.3,258.5 L108.2,257.6 L110.4,259.7 L113.1,258.6 L115.7,260.4 L118.1,259.0 L120.9,260.5 L123.0,258.8 L126.0,260.1 L127.7,258.3 L130.8,259.2 L132.0,257.4 L135.1,258.0 L135.8,256.1 L138.8,256.5 L139.1,254.7 L141.8,254.8 L141.6,253.1 L142.6,252.2 L143.3,251.5 L143.8,250.8Z" fill="url(#lg21_7)" stroke="#d02000" stroke-width="0.9" stroke-opacity="0.7"/><path d="M144.7,254.2 L143.9,253.8 L142.7,253.4 L141.3,253.1 L139.7,252.9 L138.4,251.4 L136.0,252.9 L134.3,251.5 L131.8,253.4 L129.7,252.2 L127.3,254.4 L124.9,253.5 L122.7,255.9 L119.9,255.3 L118.0,257.9 L115.1,257.7 L113.6,260.5 L110.5,260.6 L109.5,263.5 L106.4,264.1 L105.9,266.9 L102.9,267.9 L102.8,270.7 L100.1,272.1 L100.5,274.7 L98.2,276.5 L99.3,279.1 L97.4,281.3 L99.1,283.7 L97.8,286.2 L99.9,288.4 L99.1,291.2 L101.5,293.0 L101.2,295.9 L104.0,297.3 L104.2,300.3 L107.1,301.2 L107.6,304.1 L110.5,304.5 L112.3,305.9 L114.0,307.0 L114.0,307.0 L115.8,307.9 L117.3,310.3 L120.1,309.6 L122.1,311.8 L124.9,310.6 L127.3,312.5 L129.9,311.0 L132.6,312.5 L134.8,310.6 L137.7,311.6 L139.4,309.4 L142.4,309.9 L143.6,307.4 L146.5,307.3 L147.2,304.5 L149.9,303.9 L150.0,300.8 L152.4,299.6 L152.1,296.6 L154.3,294.9 L153.6,291.9 L155.6,289.8 L154.4,286.9 L156.3,284.4 L154.7,281.8 L156.2,279.0 L154.5,276.7 L155.6,273.7 L153.7,271.8 L154.5,268.6 L152.5,267.2 L153.1,264.0 L151.0,263.0 L151.3,260.0 L149.2,259.5 L149.3,256.7 L147.3,256.7 L146.4,255.6 L145.5,254.7 L144.7,254.2Z" fill="url(#lg21_8)" stroke="#d02000" stroke-width="0.9" stroke-opacity="0.7"/><path d="M148.1,253.4 L147.6,254.2 L147.1,255.3 L146.7,256.6 L146.3,258.1 L144.5,259.1 L145.8,261.5 L144.1,263.0 L145.6,265.3 L144.1,267.2 L145.8,269.4 L144.5,271.7 L146.5,273.7 L145.4,276.3 L147.5,278.0 L146.8,280.8 L149.1,282.1 L148.7,285.0 L151.1,285.9 L151.1,288.8 L153.5,289.2 L153.9,292.0 L156.3,292.0 L157.1,294.6 L159.5,294.2 L160.7,296.4 L163.1,295.4 L164.7,297.1 L167.0,295.6 L168.9,296.9 L171.1,294.9 L173.4,295.8 L175.3,293.4 L177.8,293.9 L179.3,291.1 L182.0,291.2 L183.1,288.3 L185.8,288.0 L186.4,285.2 L187.8,283.5 L189.0,282.0 L189.0,282.0 L190.0,280.4 L192.5,279.1 L192.1,276.4 L194.5,274.6 L193.6,272.0 L195.8,269.8 L194.7,267.5 L196.5,264.9 L195.0,262.9 L196.4,260.2 L194.6,258.7 L195.5,255.9 L193.5,254.8 L193.9,252.1 L191.5,251.5 L191.4,249.0 L188.8,248.9 L188.1,246.6 L185.4,247.0 L184.3,244.8 L181.6,245.6 L180.1,243.6 L177.5,244.7 L175.6,242.9 L173.1,244.4 L170.9,242.9 L168.7,244.6 L166.3,243.4 L164.4,245.3 L161.7,244.3 L160.3,246.4 L157.6,245.6 L156.5,247.7 L153.8,247.2 L153.2,249.3 L150.7,249.0 L150.5,251.1 L149.5,251.9 L148.6,252.8 L148.1,253.4Z" fill="url(#lg21_9)" stroke="#d02000" stroke-width="0.9" stroke-opacity="0.7"/><path d="M208,181 L224,178 L238,182 L250,188 L256,194 L244,196 L230,193 L216,191 Z" fill="#c8e820"/><path d="M224,191 L234,205" stroke="#c8e820" stroke-width="2.5"/><path d="M194,179 L198,175 L197,169 L203,172 L208,167 L210,173 L216,173 L213,179 L217,184 L210,186 L209,192 L204,188 L198,191 L198,184 Z" fill="#c8e820"/><circle cx="204" cy="179" r="5" fill="#ffa000"/><path d="M256,173 Q262,163 270,169 Q272,181 262,185 Q254,181 256,173Z" fill="#c8e820"/><path d="M240,147 L246,159" stroke="#c8e820" stroke-width="4"/></g></svg>
<div style="left:1983px;top:346px;width:81px;height:13px;background:#00f8ff"></div>
<div class="t" style="left:1923.5px;width:200px;text-align:center;top:350.2px;font-size:6.8px;line-height:6.8px;color:#223;">Fp-average</div>
<div style="left:2065px;top:281px;width:81px;height:65px;background:#000"></div>
<svg style="left:2065px;top:281px" width="81" height="65"><defs><linearGradient id="lg22_0" gradientUnits="userSpaceOnUse" x1="153.0" y1="119.0" x2="91.0" y2="56.0"><stop offset="0" stop-color="#ffa800"/><stop offset="0.55" stop-color="#ffc400"/><stop offset="1" stop-color="#d8e800"/></linearGradient><linearGradient id="lg22_1" gradientUnits="userSpaceOnUse" x1="153.0" y1="119.0" x2="194.0" y2="73.0"><stop offset="0" stop-color="#ffb000"/><stop offset="0.55" stop-color="#ffc800"/><stop offset="1" stop-color="#b0f020"/></linearGradient><linearGradient id="lg22_2" gradientUnits="userSpaceOnUse" x1="153.0" y1="119.0" x2="121.0" y2="182.0"><stop offset="0" stop-color="#ff9c00"/><stop offset="0.55" stop-color="#ffb000"/><stop offset="1" stop-color="#ffc000"/></linearGradient><linearGradient id="lg22_3" gradientUnits="userSpaceOnUse" x1="213.0" y1="137.0" x2="221.0" y2="92.0"><stop offset="0" stop-color="#ffa000"/><stop offset="0.55" stop-color="#ffc000"/><stop offset="1" stop-color="#d8e810"/></linearGradient><linearGradient id="lg22_4" gradientUnits="userSpaceOnUse" x1="291.0" y1="129.0" x2="261.0" y2="65.0"><stop offset="0" stop-color="#ffb000"/><stop offset="0.55" stop-color="#ffc800"/><stop offset="1" stop-color="#e8e800"/></linearGradient><linearGradient id="lg22_5" gradientUnits="userSpaceOnUse" x1="291.0" y1="129.0" x2="365.0" y2="109.0"><stop offset="0" stop-color="#ffb800"/><stop offset="0.55" stop-color="#f0e800"/><stop offset="1" stop-color="#a0f820"/></linearGradient><linearGradient id="lg22_6" gradientUnits="userSpaceOnUse" x1="291.0" y1="129.0" x2="314.0" y2="192.0"><stop offset="0" stop-color="#ff9800"/><stop offset="0.55" stop-color="#ffa800"/><stop offset="1" stop-color="#ffb800"/></linearGradient><linearGradient id="lg22_7" gradientUnits="userSpaceOnUse" x1="146.0" y1="252.0" x2="90.0" y2="222.0"><stop offset="0" stop-color="#ffa800"/><stop offset="0.55" stop-color="#e8e000"/><stop offset="1" stop-color="#a8f820"/></linearGradient><linearGradient id="lg22_8" gradientUnits="userSpaceOnUse" x1="146.0" y1="252.0" x2="114.0" y2="307.0"><stop offset="0" stop-color="#ffc800"/><stop offset="0.55" stop-color="#f8ee00"/><stop offset="1" stop-color="#e8f000"/></linearGradient><linearGradient id="lg22_9" gradientUnits="userSpaceOnUse" x1="146.0" y1="252.0" x2="189.0" y2="282.0"><stop offset="0" stop-color="#ffc000"/><stop offset="0.55" stop-color="#f0e800"/><stop offset="1" stop-color="#e0e800"/></linearGradient></defs><g transform="scale(0.195)"><path d="M153,119 Q172,154 204,179" fill="none" stroke="#e03000" stroke-width="4.6"/><path d="M153,119 Q172,154 204,179" fill="none" stroke="#d8d800" stroke-width="3"/><path d="M213,137 Q208,157 204,179" fill="none" stroke="#e03000" stroke-width="4.6"/><path d="M213,137 Q208,157 204,179" fill="none" stroke="#d8d800" stroke-width="3"/><path d="M291,129 Q243,165 204,179" fill="none" stroke="#e03000" stroke-width="4.6"/><path d="M291,129 Q243,165 204,179" fill="none" stroke="#d8d800" stroke-width="3"/><path d="M146,252 Q175,222 204,179" fill="none" stroke="#e03000" stroke-width="4.6"/><path d="M146,252 Q175,222 204,179" fill="none" stroke="#d8d800" stroke-width="3"/><path d="M151.2,117.2 L151.8,116.4 L152.5,115.2 L153.1,113.7 L153.6,112.0 L155.3,110.9 L154.2,107.7 L155.7,106.1 L154.3,102.7 L155.6,100.6 L153.8,97.0 L154.9,94.5 L152.7,90.9 L153.5,88.0 L151.0,84.6 L151.5,81.3 L148.6,78.2 L148.7,74.6 L145.5,72.0 L145.2,68.2 L141.9,66.2 L141.0,62.4 L137.7,60.9 L136.4,57.1 L133.1,56.2 L131.2,52.8 L127.9,52.6 L125.4,49.7 L122.2,50.1 L119.3,47.7 L116.3,48.8 L113.1,46.9 L110.4,48.5 L107.0,47.2 L104.6,49.2 L101.2,48.4 L99.3,50.8 L95.9,50.6 L94.6,53.2 L92.6,54.6 L91.0,56.0 L91.0,56.0 L89.6,57.6 L86.9,58.6 L86.8,61.8 L84.3,63.4 L84.7,66.8 L82.5,68.9 L83.4,72.3 L81.6,74.9 L83.1,78.2 L81.8,81.1 L83.9,84.2 L83.0,87.3 L85.7,90.0 L85.5,93.3 L88.6,95.5 L89.1,98.8 L92.7,100.5 L93.9,103.8 L97.7,105.0 L99.4,108.3 L103.2,109.0 L105.5,112.3 L109.2,112.4 L112.0,115.5 L115.4,115.3 L118.6,118.0 L121.8,117.4 L125.2,119.8 L128.0,119.0 L131.6,121.0 L133.9,119.8 L137.4,121.5 L139.3,120.1 L142.6,121.4 L143.9,119.8 L146.9,120.7 L147.7,119.0 L149.3,118.4 L150.5,117.8 L151.2,117.2Z" fill="url(#lg22_0)" stroke="#d02000" stroke-width="0.9" stroke-opacity="0.7"/><path d="M154.7,117.1 L155.3,117.6 L156.4,118.2 L157.6,118.7 L159.1,119.1 L159.9,120.9 L162.5,119.8 L163.7,121.4 L166.4,120.1 L168.1,121.6 L170.8,119.9 L172.9,121.2 L175.4,119.3 L177.8,120.4 L180.1,118.2 L182.8,119.0 L184.7,116.6 L187.7,117.0 L189.1,114.5 L192.2,114.5 L193.2,111.9 L196.2,111.5 L196.8,108.9 L199.7,108.1 L199.7,105.5 L202.4,104.2 L201.8,101.6 L204.0,99.9 L202.9,97.3 L204.8,95.2 L203.2,92.8 L204.6,90.4 L202.6,88.2 L203.5,85.6 L201.2,83.8 L201.7,80.9 L199.2,79.6 L199.3,76.7 L196.7,75.9 L195.3,74.3 L194.0,73.0 L194.0,73.0 L192.6,71.8 L191.7,69.3 L188.9,69.6 L187.5,67.1 L184.7,67.7 L182.9,65.5 L180.2,66.5 L178.0,64.6 L175.6,66.1 L173.1,64.5 L171.0,66.4 L168.4,65.4 L166.7,67.6 L164.0,67.1 L162.8,69.7 L160.2,69.7 L159.5,72.6 L156.9,73.2 L156.7,76.3 L154.2,77.3 L154.4,80.4 L151.9,81.9 L152.5,84.9 L150.2,86.8 L151.2,89.6 L149.1,91.9 L150.4,94.4 L148.6,97.0 L150.1,99.2 L148.6,101.9 L150.2,103.7 L149.0,106.5 L150.7,107.8 L149.8,110.6 L151.6,111.4 L150.9,114.0 L152.8,114.4 L153.4,115.6 L154.1,116.5 L154.7,117.1Z" fill="url(#lg22_1)" stroke="#d02000" stroke-width="0.9" stroke-opacity="0.7"/><path d="M151.9,121.2 L150.9,120.9 L149.5,120.5 L147.9,120.3 L146.0,120.1 L144.4,118.6 L141.8,120.3 L139.8,119.0 L137.2,121.1 L134.7,120.1 L132.1,122.4 L129.3,121.7 L127.0,124.3 L123.8,124.0 L121.9,126.9 L118.6,126.9 L117.0,129.9 L113.6,130.5 L112.6,133.5 L109.3,134.5 L108.7,137.5 L105.7,138.9 L105.6,141.9 L102.8,143.7 L103.3,146.6 L101.0,148.8 L102.2,151.6 L100.5,154.1 L102.3,156.7 L101.2,159.6 L103.5,161.9 L103.0,165.0 L105.8,167.0 L105.8,170.1 L108.9,171.7 L109.5,174.9 L112.7,175.9 L113.7,179.0 L116.9,179.4 L119.0,180.9 L121.0,182.0 L121.0,182.0 L123.1,182.9 L125.0,185.3 L128.1,184.6 L130.6,186.7 L133.6,185.5 L136.5,187.3 L139.3,185.7 L142.5,187.0 L144.8,185.0 L148.1,185.7 L150.0,183.3 L153.3,183.6 L154.7,180.8 L157.8,180.5 L158.5,177.5 L161.3,176.4 L161.4,173.2 L163.8,171.6 L163.4,168.3 L165.6,166.3 L164.7,163.0 L166.7,160.5 L165.4,157.4 L167.0,154.5 L165.3,151.7 L166.6,148.5 L164.6,146.0 L165.5,142.6 L163.4,140.5 L163.9,137.0 L161.7,135.4 L161.9,132.0 L159.6,130.8 L159.6,127.6 L157.4,126.9 L157.1,124.0 L155.0,123.9 L153.8,122.7 L152.7,121.8 L151.9,121.2Z" fill="url(#lg22_2)" stroke="#d02000" stroke-width="0.9" stroke-opacity="0.7"/><path d="M213.4,134.5 L213.9,134.6 L214.6,134.5 L215.4,134.3 L216.3,134.0 L217.2,135.1 L218.2,133.0 L219.3,133.9 L220.2,131.6 L221.6,132.3 L222.4,129.7 L224.0,130.2 L224.6,127.5 L226.4,127.6 L226.7,124.9 L228.7,124.8 L228.6,122.1 L230.7,121.6 L230.2,119.0 L232.4,118.1 L231.6,115.8 L233.7,114.5 L232.5,112.6 L234.5,110.9 L233.1,109.3 L234.7,107.4 L233.0,106.1 L234.3,103.9 L232.4,103.1 L233.2,100.7 L231.3,100.3 L231.7,97.9 L229.7,97.7 L229.7,95.3 L227.7,95.6 L227.4,93.3 L225.5,93.9 L224.9,91.7 L223.2,92.7 L222.0,92.3 L221.0,92.0 L221.0,92.0 L219.9,91.9 L218.8,90.3 L217.4,92.0 L216.0,90.6 L214.8,92.6 L213.1,91.5 L212.1,93.7 L210.3,92.9 L209.7,95.2 L207.7,94.8 L207.4,97.3 L205.4,97.3 L205.6,99.7 L203.6,100.1 L204.2,102.6 L202.3,103.4 L203.3,105.7 L201.5,106.9 L202.9,109.0 L201.3,110.7 L202.9,112.4 L201.5,114.5 L203.2,115.9 L202.1,118.3 L203.9,119.3 L203.0,121.9 L204.8,122.5 L204.3,125.2 L206.0,125.5 L205.8,128.2 L207.4,128.2 L207.3,130.8 L208.8,130.5 L208.9,132.9 L210.3,132.3 L210.5,134.6 L211.7,133.6 L212.4,134.1 L213.0,134.4 L213.4,134.5Z" fill="url(#lg22_3)" stroke="#d02000" stroke-width="0.9" stroke-opacity="0.7"/><path d="M289.9,126.7 L290.7,126.2 L291.8,125.4 L292.8,124.3 L293.9,123.0 L295.9,122.8 L296.0,119.8 L298.1,119.0 L298.0,115.8 L300.1,114.5 L299.7,111.1 L301.8,109.4 L301.0,106.0 L303.0,103.9 L301.9,100.6 L303.7,98.1 L302.2,95.0 L303.8,92.1 L301.9,89.4 L303.1,86.3 L301.0,83.9 L301.7,80.7 L299.4,78.8 L299.7,75.5 L297.1,74.1 L296.8,70.9 L294.0,70.1 L293.1,67.1 L290.0,66.9 L288.5,64.2 L285.5,64.6 L283.5,62.2 L280.5,63.1 L278.1,61.1 L275.3,62.4 L272.6,60.8 L270.1,62.6 L267.2,61.4 L265.1,63.5 L262.9,64.2 L261.0,65.0 L261.0,65.0 L259.2,66.0 L256.3,65.9 L255.3,68.7 L252.3,69.3 L251.6,72.3 L248.6,73.3 L248.4,76.5 L245.6,78.0 L245.9,81.1 L243.5,83.0 L244.3,86.0 L242.3,88.3 L243.7,91.1 L242.2,93.7 L244.2,96.1 L243.3,98.9 L245.8,101.0 L245.5,103.9 L248.4,105.6 L248.6,108.7 L251.7,110.0 L252.4,113.1 L255.5,114.0 L256.7,117.2 L259.9,117.6 L261.5,120.7 L264.5,120.7 L266.5,123.6 L269.3,123.2 L271.6,125.9 L274.1,125.2 L276.5,127.5 L278.6,126.5 L281.0,128.5 L282.7,127.3 L285.0,129.0 L286.3,127.4 L287.8,127.3 L289.1,127.0 L289.9,126.7Z" fill="url(#lg22_4)" stroke="#d02000" stroke-width="0.9" stroke-opacity="0.7"/><path d="M293.4,128.3 L293.8,129.2 L294.4,130.3 L295.3,131.5 L296.5,132.7 L296.4,134.6 L299.5,135.2 L299.9,137.3 L303.3,137.6 L304.2,139.8 L307.8,139.9 L309.2,142.1 L312.9,141.9 L314.8,144.1 L318.5,143.5 L320.8,145.6 L324.3,144.6 L327.0,146.5 L330.3,145.1 L333.4,146.7 L336.3,144.9 L339.6,146.1 L342.1,144.1 L345.5,144.9 L347.5,142.6 L351.0,142.8 L352.4,140.1 L355.8,139.6 L356.7,136.7 L359.8,135.7 L360.1,132.7 L363.0,131.0 L362.8,128.0 L365.4,126.0 L364.6,123.1 L366.8,120.7 L365.6,118.1 L367.3,115.5 L365.7,113.2 L365.4,110.9 L365.0,109.0 L365.0,109.0 L364.4,107.1 L364.9,104.4 L362.3,102.9 L362.3,100.1 L359.3,98.9 L358.8,96.0 L355.6,95.2 L354.6,92.4 L351.3,92.2 L349.7,89.6 L346.4,90.0 L344.4,87.7 L341.2,88.7 L338.8,86.9 L335.7,88.5 L333.0,87.2 L330.3,89.4 L327.2,88.7 L324.8,91.2 L321.5,90.9 L319.5,93.8 L315.9,94.0 L314.4,96.9 L310.8,97.6 L309.6,100.6 L306.1,101.8 L305.4,104.7 L301.9,106.2 L301.6,108.9 L298.4,110.8 L298.5,113.2 L295.6,115.2 L296.1,117.4 L293.6,119.5 L294.4,121.3 L292.3,123.3 L293.5,124.7 L293.3,126.2 L293.3,127.4 L293.4,128.3Z" fill="url(#lg22_5)" stroke="#d02000" stroke-width="0.9" stroke-opacity="0.7"/><path d="M291.9,131.3 L290.9,131.8 L289.6,132.6 L288.3,133.6 L286.9,134.9 L284.6,135.0 L284.0,138.0 L281.5,138.6 L281.2,141.8 L278.6,142.9 L278.6,146.3 L276.0,147.9 L276.3,151.2 L273.8,153.2 L274.4,156.5 L272.2,158.9 L273.2,161.9 L271.2,164.6 L272.6,167.4 L271.1,170.3 L272.8,172.7 L271.7,175.7 L273.8,177.7 L273.1,180.8 L275.5,182.3 L275.5,185.3 L278.3,186.3 L279.0,189.1 L282.2,189.4 L283.5,192.0 L286.9,191.8 L288.7,194.1 L292.2,193.4 L294.5,195.4 L297.8,194.2 L300.5,195.8 L303.6,194.1 L306.6,195.4 L309.2,193.3 L311.8,192.7 L314.0,192.0 L314.0,192.0 L316.2,191.1 L319.3,191.3 L321.0,188.5 L324.4,188.1 L325.6,185.1 L329.0,184.2 L329.8,181.2 L333.0,179.7 L333.2,176.7 L336.2,174.9 L335.8,172.0 L338.3,169.8 L337.3,167.1 L339.2,164.6 L337.6,162.2 L338.8,159.5 L336.5,157.4 L337.1,154.7 L334.4,152.9 L334.5,150.0 L331.5,148.6 L331.1,145.6 L327.9,144.5 L326.9,141.6 L323.6,141.0 L322.3,138.0 L319.0,137.9 L317.2,135.0 L314.1,135.3 L312.0,132.6 L309.2,133.3 L306.9,130.9 L304.4,131.8 L302.0,129.7 L300.0,131.0 L297.6,129.2 L296.0,130.8 L294.3,130.9 L292.9,131.1 L291.9,131.3Z" fill="url(#lg22_6)" stroke="#d02000" stroke-width="0.9" stroke-opacity="0.7"/><path d="M143.8,250.8 L144.1,250.1 L144.3,249.0 L144.5,247.8 L144.5,246.3 L145.9,245.3 L144.2,243.1 L145.4,241.6 L143.3,239.3 L144.3,237.5 L142.0,235.3 L142.7,233.1 L140.1,231.1 L140.5,228.7 L137.7,226.9 L137.8,224.2 L134.8,222.9 L134.5,220.0 L131.6,219.2 L130.8,216.3 L127.9,215.9 L126.8,213.0 L124.0,213.1 L122.5,210.4 L119.9,210.9 L117.9,208.6 L115.5,209.7 L113.2,207.8 L111.0,209.3 L108.5,208.0 L106.6,209.9 L103.9,209.0 L102.3,211.3 L99.5,210.9 L98.4,213.4 L95.6,213.4 L94.9,216.0 L92.2,216.4 L92.0,219.0 L90.9,220.5 L90.0,222.0 L90.0,222.0 L89.3,223.5 L87.1,224.8 L88.1,227.4 L86.1,229.1 L87.5,231.6 L85.9,233.7 L87.6,236.0 L86.3,238.4 L88.4,240.4 L87.6,243.0 L90.0,244.6 L89.7,247.2 L92.4,248.4 L92.6,251.0 L95.5,251.6 L96.2,254.2 L99.3,254.2 L100.5,256.6 L103.6,256.2 L105.3,258.5 L108.2,257.6 L110.4,259.7 L113.1,258.6 L115.7,260.4 L118.1,259.0 L120.9,260.5 L123.0,258.8 L126.0,260.1 L127.7,258.3 L130.8,259.2 L132.0,257.4 L135.1,258.0 L135.8,256.1 L138.8,256.5 L139.1,254.7 L141.8,254.8 L141.6,253.1 L142.6,252.2 L143.3,251.5 L143.8,250.8Z" fill="url(#lg22_7)" stroke="#d02000" stroke-width="0.9" stroke-opacity="0.7"/><path d="M144.7,254.2 L143.9,253.8 L142.7,253.4 L141.3,253.1 L139.7,252.9 L138.4,251.4 L136.0,252.9 L134.3,251.5 L131.8,253.4 L129.7,252.2 L127.3,254.4 L124.9,253.5 L122.7,255.9 L119.9,255.3 L118.0,257.9 L115.1,257.7 L113.6,260.5 L110.5,260.6 L109.5,263.5 L106.4,264.1 L105.9,266.9 L102.9,267.9 L102.8,270.7 L100.1,272.1 L100.5,274.7 L98.2,276.5 L99.3,279.1 L97.4,281.3 L99.1,283.7 L97.8,286.2 L99.9,288.4 L99.1,291.2 L101.5,293.0 L101.2,295.9 L104.0,297.3 L104.2,300.3 L107.1,301.2 L107.6,304.1 L110.5,304.5 L112.3,305.9 L114.0,307.0 L114.0,307.0 L115.8,307.9 L117.3,310.3 L120.1,309.6 L122.1,311.8 L124.9,310.6 L127.3,312.5 L129.9,311.0 L132.6,312.5 L134.8,310.6 L137.7,311.6 L139.4,309.4 L142.4,309.9 L143.6,307.4 L146.5,307.3 L147.2,304.5 L149.9,303.9 L150.0,300.8 L152.4,299.6 L152.1,296.6 L154.3,294.9 L153.6,291.9 L155.6,289.8 L154.4,286.9 L156.3,284.4 L154.7,281.8 L156.2,279.0 L154.5,276.7 L155.6,273.7 L153.7,271.8 L154.5,268.6 L152.5,267.2 L153.1,264.0 L151.0,263.0 L151.3,260.0 L149.2,259.5 L149.3,256.7 L147.3,256.7 L146.4,255.6 L145.5,254.7 L144.7,254.2Z" fill="url(#lg22_8)" stroke="#d02000" stroke-width="0.9" stroke-opacity="0.7"/><path d="M148.1,253.4 L147.6,254.2 L147.1,255.3 L146.7,256.6 L146.3,258.1 L144.5,259.1 L145.8,261.5 L144.1,263.0 L145.6,265.3 L144.1,267.2 L145.8,269.4 L144.5,271.7 L146.5,273.7 L145.4,276.3 L147.5,278.0 L146.8,280.8 L149.1,282.1 L148.7,285.0 L151.1,285.9 L151.1,288.8 L153.5,289.2 L153.9,292.0 L156.3,292.0 L157.1,294.6 L159.5,294.2 L160.7,296.4 L163.1,295.4 L164.7,297.1 L167.0,295.6 L168.9,296.9 L171.1,294.9 L173.4,295.8 L175.3,293.4 L177.8,293.9 L179.3,291.1 L182.0,291.2 L183.1,288.3 L185.8,288.0 L186.4,285.2 L187.8,283.5 L189.0,282.0 L189.0,282.0 L190.0,280.4 L192.5,279.1 L192.1,276.4 L194.5,274.6 L193.6,272.0 L195.8,269.8 L194.7,267.5 L196.5,264.9 L195.0,262.9 L196.4,260.2 L194.6,258.7 L195.5,255.9 L193.5,254.8 L193.9,252.1 L191.5,251.5 L191.4,249.0 L188.8,248.9 L188.1,246.6 L185.4,247.0 L184.3,244.8 L181.6,245.6 L180.1,243.6 L177.5,244.7 L175.6,242.9 L173.1,244.4 L170.9,242.9 L168.7,244.6 L166.3,243.4 L164.4,245.3 L161.7,244.3 L160.3,246.4 L157.6,245.6 L156.5,247.7 L153.8,247.2 L153.2,249.3 L150.7,249.0 L150.5,251.1 L149.5,251.9 L148.6,252.8 L148.1,253.4Z" fill="url(#lg22_9)" stroke="#d02000" stroke-width="0.9" stroke-opacity="0.7"/><path d="M208,181 L224,178 L238,182 L250,188 L256,194 L244,196 L230,193 L216,191 Z" fill="#c8e820"/><path d="M224,191 L234,205" stroke="#c8e820" stroke-width="2.5"/><path d="M194,179 L198,175 L197,169 L203,172 L208,167 L210,173 L216,173 L213,179 L217,184 L210,186 L209,192 L204,188 L198,191 L198,184 Z" fill="#c8e820"/><circle cx="204" cy="179" r="5" fill="#ffa000"/><path d="M256,173 Q262,163 270,169 Q272,181 262,185 Q254,181 256,173Z" fill="#c8e820"/><path d="M240,147 L246,159" stroke="#c8e820" stroke-width="4"/></g></svg>
<div style="left:2065px;top:346px;width:81px;height:13px;background:#ff00ff"></div>
<div class="t" style="left:2005.5px;width:200px;text-align:center;top:350.2px;font-size:6.8px;line-height:6.8px;color:#223;">Fm_L1</div>
<div style="left:1982px;top:83px;width:1px;height:78px;background:#9a9a9a"></div>
<div style="left:1982px;top:182px;width:1px;height:78px;background:#9a9a9a"></div>
<div style="left:1982px;top:281px;width:1px;height:78px;background:#9a9a9a"></div>
<div style="left:2064px;top:83px;width:1px;height:78px;background:#9a9a9a"></div>
<div style="left:2064px;top:182px;width:1px;height:78px;background:#9a9a9a"></div>
<div style="left:2064px;top:281px;width:1px;height:78px;background:#9a9a9a"></div>
<div style="left:1901px;top:161px;width:81px;height:100px;border:1px dotted #555"></div>
<svg style="left:1902px;top:381px" width="12" height="12"><rect x="0" y="0" width="12" height="12" fill="#5a9a3a"/><rect x="1" y="6" width="10" height="5" fill="#c05080"/><path d="M1 3 H11" stroke="#e0e0a0"/></svg>
<div class="t" style="left:1972px;top:385.2px;font-size:7.7px;line-height:7.7px;color:#333;font-family:'Liberation Mono',monospace;font-weight:bold">Fo=average(frame,startfm,endfm)</div>
<div style="left:1900px;top:408px;width:65px;height:60px;border:1px solid #dcdcdc;border-radius:2px"></div>
<div style="left:1904px;top:403px;width:44px;height:10px;background:#f0f0f0"></div>
<div class="t" style="left:1905px;top:405.9px;font-size:7.5px;line-height:7.5px;color:#2b2b2b;">Display Mode</div>
<svg style="left:1902px;top:418px" width="12" height="12"><circle cx="6" cy="6" r="4.5" fill="#fff" stroke="#0a64c8" stroke-width="1.5"/><circle cx="6" cy="6" r="2.3" fill="#0a64c8"/></svg>
<svg style="left:1902px;top:435px" width="12" height="12"><circle cx="6" cy="6" r="4.6" fill="#fff" stroke="#444" stroke-width="1"/></svg>
<svg style="left:1902px;top:451px" width="12" height="12"><circle cx="6" cy="6" r="4.6" fill="#fff" stroke="#444" stroke-width="1"/></svg>
<div class="t" style="left:1916px;top:421.2px;font-size:6.9px;line-height:6.9px;color:#2b2b2b;">Color by Pixel</div>
<div class="t" style="left:1916px;top:438.2px;font-size:6.9px;line-height:6.9px;color:#2b2b2b;">Color by Object</div>
<div class="t" style="left:1916px;top:454.2px;font-size:6.9px;line-height:6.9px;color:#2b2b2b;">Color by Avg</div>
<div style="left:1972px;top:407px;width:14px;height:16px;background:#fafafa;border:1px solid #e8e8e8"></div>
<div style="left:1990px;top:407px;width:14px;height:16px;background:#fafafa;border:1px solid #e8e8e8"></div>
<svg style="left:1973px;top:409px" width="14" height="13"><circle cx="6" cy="6" r="3.8" fill="none" stroke="#333" stroke-width="1.2"/><path d="M8.5 8.5 L11.5 11.5" stroke="#333" stroke-width="1.4"/><path d="M4 6 H8 M6 4 V8" stroke="#333" stroke-width="0.9"/></svg>
<svg style="left:1991px;top:409px" width="14" height="13"><circle cx="6" cy="6" r="3.8" fill="none" stroke="#333" stroke-width="1.2"/><path d="M8.5 8.5 L11.5 11.5" stroke="#333" stroke-width="1.4"/><path d="M4 6 H8" stroke="#333" stroke-width="0.9"/></svg>
<div style="left:2028px;top:407px;width:14px;height:16px;background:#fafafa;border:1px solid #e8e8e8"></div>
<div style="left:2046px;top:407px;width:14px;height:16px;background:#fafafa;border:1px solid #e8e8e8"></div>
<svg style="left:2029px;top:409px" width="14" height="13"><path d="M1 4 H5 L6 5 H11 V11 H1Z" fill="#5a5a20"/><path d="M3 7 H13 L11 11 H1Z" fill="#b0b040"/></svg>
<svg style="left:2047px;top:409px" width="14" height="13"><rect x="1.5" y="1.5" width="10" height="10" fill="#333"/><rect x="3.5" y="2" width="6" height="4" fill="#d0d060"/><rect x="4" y="8" width="5" height="3" fill="#e0e0e0"/></svg>
<div style="left:1972px;top:428px;width:10px;height:10px;background:#0a64c8;border-radius:1px"></div>
<svg style="left:1972px;top:428px" width="10" height="10"><path d="M2.2 5 L4.2 7.2 L8 2.8" fill="none" stroke="#fff" stroke-width="1.1"/></svg>
<div class="t" style="left:1985px;top:430.6px;font-size:7.1px;line-height:7.1px;color:#2b2b2b;">Hide Background</div>
<div style="left:2043px;top:427px;width:19px;height:14px;background:#000"></div>
<div style="left:1971px;top:451px;width:92px;height:116px;border:1px solid #dcdcdc;border-radius:2px"></div>
<div style="left:1975px;top:446px;width:44px;height:10px;background:#f0f0f0"></div>
<div class="t" style="left:1976px;top:448.9px;font-size:7.5px;line-height:7.5px;color:#2b2b2b;">Value Range</div>
<div style="left:1984px;top:461px;width:10px;height:10px;background:#0a64c8;border-radius:1px"></div>
<svg style="left:1984px;top:461px" width="10" height="10"><path d="M2.2 5 L4.2 7.2 L8 2.8" fill="none" stroke="#fff" stroke-width="1.1"/></svg>
<div class="t" style="left:1997px;top:463.7px;font-size:6.9px;line-height:6.9px;color:#2b2b2b;">Group Color</div>
<div style="left:1984px;top:478px;width:10px;height:10px;background:#fff;border:1px solid #444"></div>
<div class="t" style="left:1997px;top:480.6px;font-size:6.95px;line-height:6.95px;color:#2b2b2b;">Manual Color</div>
<div class="t" style="left:1976px;top:498.4px;font-size:7.4px;line-height:7.4px;color:#2b2b2b;">Limit</div>
<div class="t" style="left:2001px;top:498.4px;font-size:7.4px;line-height:7.4px;color:#2b2b2b;">20911.67</div>
<div style="left:2000px;top:514px;width:57px;height:15px;background:#f0f0f0;border:1px solid #e6e6e6"></div>
<div style="left:2000px;top:533px;width:57px;height:15px;background:#f0f0f0;border:1px solid #e6e6e6"></div>
<div class="t" style="left:1976px;top:518.4px;font-size:7.4px;line-height:7.4px;color:#2b2b2b;">Max</div>
<div class="t" style="left:2003px;top:518.5px;font-size:7.3px;line-height:7.3px;color:#a8a8a8;">20911.67</div>
<div class="t" style="left:1976px;top:537.4px;font-size:7.4px;line-height:7.4px;color:#2b2b2b;">Min</div>
<div class="t" style="left:2003px;top:537.5px;font-size:7.3px;line-height:7.3px;color:#a8a8a8;">0</div>
<div class="t" style="left:1976px;top:556.4px;font-size:7.4px;line-height:7.4px;color:#2b2b2b;">Limit</div>
<div class="t" style="left:2001px;top:556.4px;font-size:7.4px;line-height:7.4px;color:#2b2b2b;">0</div>
<div style="left:1899px;top:511px;width:66px;height:56px;border:1px solid #dcdcdc;border-radius:2px"></div>
<div style="left:1903px;top:506px;width:28px;height:10px;background:#f0f0f0"></div>
<div class="t" style="left:1904px;top:508.9px;font-size:7.5px;line-height:7.5px;color:#2b2b2b;">Options</div>
<div style="left:1903px;top:520.5px;width:10px;height:10px;background:#0a64c8;border-radius:1px"></div>
<svg style="left:1903px;top:520.5px" width="10" height="10"><path d="M2.2 5 L4.2 7.2 L8 2.8" fill="none" stroke="#fff" stroke-width="1.1"/></svg>
<div class="t" style="left:1916px;top:523.1px;font-size:7.1px;line-height:7.1px;color:#2b2b2b;">Show Number</div>
<div style="left:1903px;top:537.5px;width:10px;height:10px;background:#0a64c8;border-radius:1px"></div>
<svg style="left:1903px;top:537.5px" width="10" height="10"><path d="M2.2 5 L4.2 7.2 L8 2.8" fill="none" stroke="#fff" stroke-width="1.1"/></svg>
<div class="t" style="left:1916px;top:540.1px;font-size:7.1px;line-height:7.1px;color:#2b2b2b;">Histogram</div>
<div style="left:1903px;top:554px;width:10px;height:10px;background:#fff;border:1px solid #444"></div>
<div class="t" style="left:1916px;top:556.5px;font-size:7.15px;line-height:7.15px;color:#2b2b2b;">Checkpoint</div>
<div style="left:2070px;top:486px;width:90px;height:26px;background:#fff;border:1px solid #e4e4e4;border-radius:2px"></div>
<svg style="left:2074px;top:491px" width="10" height="15"><rect x="3" y="1" width="3" height="9" fill="none" stroke="#777"/><circle cx="4.5" cy="11" r="3" fill="#2020d0"/></svg>
<div class="t" style="left:2097px;top:495.3px;font-size:8.6px;line-height:8.6px;color:#222;font-weight:bold">Analyze</div>
</div></body></html>
